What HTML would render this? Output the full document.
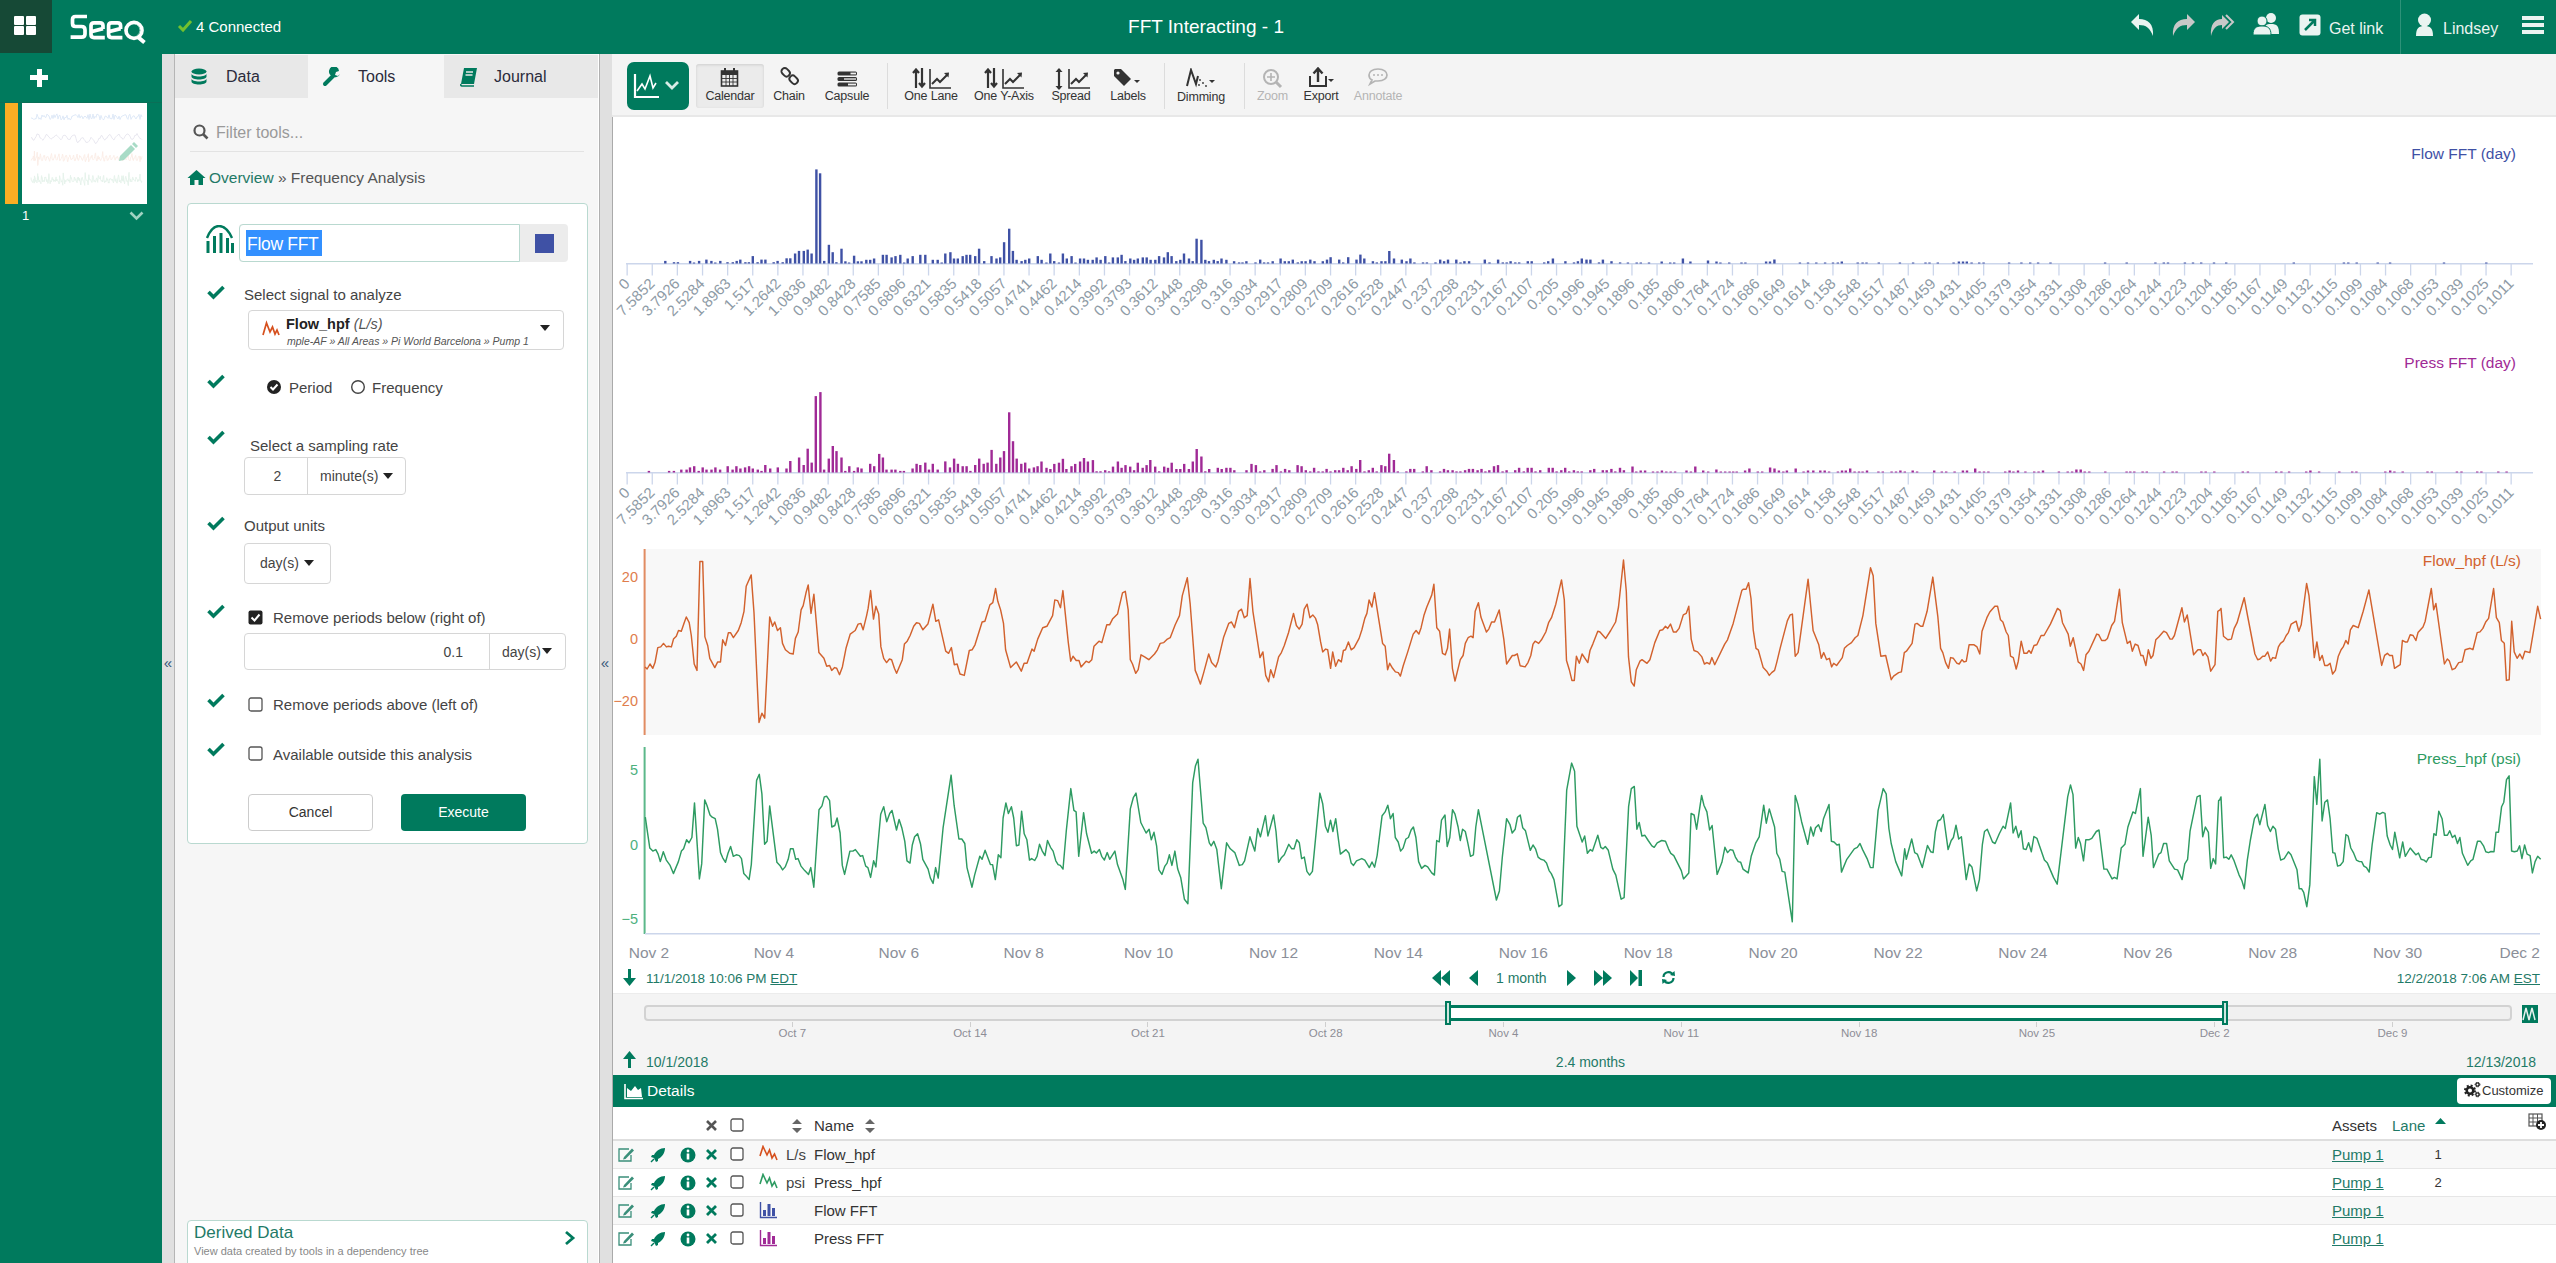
<!DOCTYPE html>
<html><head><meta charset="utf-8"><title>FFT Interacting - 1</title>
<style>
html,body{margin:0;padding:0;}
body{width:2556px;height:1263px;position:relative;overflow:hidden;background:#fff;font-family:"Liberation Sans", sans-serif;}
div{box-sizing:content-box;}
</style></head><body>
<div style="position:absolute;left:0px;top:53px;width:162px;height:1210px;background:#007a5d;"></div><div style="position:absolute;left:0px;top:102px;width:162px;height:1px;background:#0b6f57;"></div><div style="position:absolute;left:30px;top:75px;width:18px;height:5px;background:#fff;"></div><div style="position:absolute;left:36.5px;top:69px;width:5px;height:18px;background:#fff;"></div><div style="position:absolute;left:5px;top:103px;width:13px;height:101px;background:#f9ae24;"></div><div style="position:absolute;left:22px;top:103px;width:125px;height:101px;background:#fff;"></div><svg style="position:absolute;left:22px;top:103px;" width="125" height="101" viewBox="0 0 125 101"><polyline points="9.0,14.8 10.0,15.3 11.0,15.5 12.0,16.7 13.0,15.4 14.0,16.1 15.0,11.2 16.0,13.8 17.0,16.2 18.0,14.8 19.0,16.5 20.0,12.0 21.0,13.8 22.0,12.4 23.0,14.2 24.0,14.4 25.0,11.1 26.0,12.3 27.0,12.9 28.0,16.4 29.0,15.6 30.0,12.2 31.0,15.6 32.0,11.7 33.0,14.6 34.0,12.1 35.0,10.9 36.0,16.1 37.0,12.6 38.0,12.3 39.0,16.9 40.0,15.9 41.0,12.8 42.0,16.9 43.0,14.2 44.0,14.9 45.0,12.2 46.0,16.5 47.0,15.0 48.0,16.8 49.0,16.3 50.0,13.0 51.0,13.2 52.0,12.0 53.0,12.2 54.0,11.6 55.0,12.7 56.0,14.6 57.0,11.4 58.0,15.1 59.0,13.1 60.0,13.1 61.0,15.9 62.0,13.9 63.0,13.1 64.0,13.9 65.0,15.3 66.0,11.7 67.0,16.5 68.0,11.0 69.0,15.4 70.0,15.7 71.0,11.1 72.0,15.7 73.0,13.3 74.0,14.4 75.0,11.0 76.0,11.7 77.0,12.3 78.0,16.9 79.0,12.4 80.0,15.3 81.0,16.6 82.0,16.5 83.0,13.2 84.0,13.2 85.0,14.1 86.0,15.4 87.0,11.8 88.0,15.6 89.0,15.6 90.0,15.9 91.0,11.1 92.0,16.5 93.0,12.0 94.0,13.0 95.0,14.6 96.0,16.0 97.0,13.1 98.0,16.6 99.0,14.2 100.0,13.0 101.0,12.8 102.0,12.2 103.0,11.8 104.0,11.9 105.0,15.1 106.0,16.4 107.0,12.0 108.0,11.3 109.0,16.4 110.0,14.2 111.0,13.4 112.0,12.6 113.0,14.5 114.0,16.0 115.0,13.8 116.0,13.6 117.0,11.3 118.0,16.4 119.0,11.7 120.0,14.0" stroke="#dbe7f6" stroke-width="0.9" fill="none"/><polyline points="9.0,34.8 10.0,34.7 11.0,37.0 12.0,37.2 13.0,35.2 14.0,33.8 15.0,30.9 16.0,31.4 17.0,31.6 18.0,34.9 19.0,35.2 20.0,36.4 21.0,37.3 22.0,35.6 23.0,34.2 24.0,31.7 25.0,31.5 26.0,33.0 27.0,34.0 28.0,35.2 29.0,36.2 30.0,35.3 31.0,34.5 32.0,34.2 33.0,32.9 34.0,31.9 35.0,32.5 36.0,33.7 37.0,34.7 38.0,35.9 39.0,36.8 40.0,35.6 41.0,32.7 42.0,32.4 43.0,32.2 44.0,33.0 45.0,34.6 46.0,36.4 47.0,36.2 48.0,36.6 49.0,34.2 50.0,32.9 51.0,32.4 52.0,32.0 53.0,32.1 54.0,35.3 55.0,39.1 56.0,39.7 57.0,37.9 58.0,37.7 59.0,35.3 60.0,35.1 61.0,34.5 62.0,36.4 63.0,37.6 64.0,39.5 65.0,39.1 66.0,39.4 67.0,38.2 68.0,36.7 69.0,34.3 70.0,35.4 71.0,36.5 72.0,37.7 73.0,40.0 74.0,40.6 75.0,39.0 76.0,37.6 77.0,35.1 78.0,35.5 79.0,32.7 80.0,32.6 81.0,34.8 82.0,36.4 83.0,37.1 84.0,35.2 85.0,35.2 86.0,33.0 87.0,32.1 88.0,31.4 89.0,33.0 90.0,35.0 91.0,36.2 92.0,37.0 93.0,34.8 94.0,33.7 95.0,32.6 96.0,32.0 97.0,31.0 98.0,33.2 99.0,34.7 100.0,34.8 101.0,36.4 102.0,35.3 103.0,33.4 104.0,31.9 105.0,31.2 106.0,30.9 107.0,32.0 108.0,33.3 109.0,35.9 110.0,36.2 111.0,36.2 112.0,34.6 113.0,32.1 114.0,32.6 115.0,30.5 116.0,32.6 117.0,34.0 118.0,35.7 119.0,35.6 120.0,36.7" stroke="#e7e5ee" stroke-width="0.9" fill="none"/><polyline points="9.0,57.5 9.3,57.2 9.6,57.1 9.9,55.7 10.3,55.7 10.5,55.7 10.8,54.7 11.1,54.3 11.4,53.0 11.7,54.7 12.0,57.8 12.4,48.0 12.7,55.6 13.1,57.6 13.4,57.1 13.7,55.6 14.0,54.4 14.5,54.2 14.8,52.5 15.2,49.2 15.7,62.5 16.0,62.1 16.5,53.9 16.8,54.2 17.0,55.4 17.5,56.3 17.8,54.9 18.1,52.4 18.4,50.8 18.7,52.7 19.2,56.2 19.6,57.4 19.9,57.8 20.2,57.6 20.6,57.5 21.0,54.6 21.5,53.7 21.8,54.2 22.1,52.2 22.4,53.2 22.7,52.8 23.0,56.7 23.3,56.8 23.6,57.6 24.1,56.9 24.4,55.2 24.7,53.9 25.1,53.6 25.6,53.7 26.0,53.4 26.6,56.1 26.9,55.8 27.3,57.2 27.7,58.3 28.1,56.0 28.7,53.5 29.2,51.9 29.5,50.5 29.8,52.4 30.1,56.0 30.7,57.1 31.2,57.2 31.7,55.9 32.0,55.0 32.5,53.9 33.0,51.5 33.3,52.2 33.8,55.3 34.1,56.5 34.4,56.9 34.8,57.0 35.2,56.9 35.6,55.2 36.0,53.7 36.4,53.2 37.0,50.8 37.3,52.4 37.5,57.2 37.9,57.8 38.2,56.6 38.8,56.4 39.2,55.4 39.6,55.0 40.0,53.7 40.5,51.1 40.9,51.9 41.3,58.3 41.7,58.0 42.2,57.1 42.5,57.0 43.2,53.6 43.5,54.0 43.9,52.3 44.3,52.9 44.6,52.5 45.2,56.2 45.5,58.9 45.8,58.5 46.3,56.2 46.7,54.4 47.1,53.8 47.5,53.7 47.8,51.9 48.1,52.8 48.4,53.7 48.7,56.2 49.0,56.0 49.3,56.2 49.6,56.9 49.9,56.0 50.2,55.3 50.5,55.8 51.0,54.2 51.3,52.7 51.6,52.1 52.2,55.4 52.5,57.8 52.8,57.6 53.1,58.0 53.4,57.4 54.0,54.6 54.3,54.6 54.6,52.9 55.1,51.0 55.4,54.0 55.7,56.3 56.0,55.8 56.3,57.6 56.7,56.9 57.0,55.4 57.4,54.7 57.6,52.5 57.9,53.0 58.4,54.1 58.7,53.5 59.3,55.0 59.8,56.5 60.1,56.3 60.5,57.5 60.9,56.5 61.1,55.2 61.5,55.1 61.9,53.5 62.3,51.9 62.8,51.5 63.1,57.8 63.4,58.7 63.7,57.2 64.2,57.1 64.5,55.5 64.9,54.4 65.5,54.2 66.0,52.1 66.4,50.7 66.7,58.9 67.0,57.8 67.4,56.9 67.8,56.9 68.4,54.2 68.7,53.9 69.0,53.7 69.4,54.4 69.8,52.8 70.1,52.1 70.4,56.0 70.9,56.6 71.2,57.1 71.5,56.7 72.2,55.5 72.7,53.6 73.3,50.5 73.6,49.9 73.9,54.2 74.2,56.0 74.7,57.9 75.0,58.0 75.3,57.1 75.9,53.3 76.2,52.8 76.5,56.2 77.4,54.2 77.9,56.7 78.2,56.9 78.5,57.5 78.8,57.4 79.2,55.8 79.6,55.3 80.0,54.7 80.7,48.6 81.1,53.6 81.6,56.5 82.1,58.3 82.6,58.0 82.8,56.1 83.4,53.7 83.7,53.9 84.1,52.5 84.7,53.0 85.0,56.2 85.3,57.6 85.6,56.7 85.9,57.2 86.2,57.1 86.5,55.5 87.0,55.7 87.3,54.3 87.7,52.6 88.2,52.1 88.5,53.5 88.8,54.7 89.1,56.7 89.4,57.0 89.7,56.3 90.0,56.0 90.3,55.6 90.7,54.7 91.3,53.7 91.9,52.4 92.3,54.6 92.6,54.9 93.1,57.2 93.4,56.4 94.0,54.6 94.3,55.1 94.6,54.9 95.0,53.4 95.5,53.5 95.9,55.2 96.2,55.5 96.6,56.5 96.9,57.4 97.2,56.7 97.4,55.1 97.9,54.3 98.3,55.0 98.5,54.7 99.1,53.5 99.7,56.4 100.1,56.0 100.3,56.2 100.7,57.9 101.1,52.5 101.3,52.2 101.7,55.1 102.0,54.0 102.6,51.3 103.3,56.4 103.5,56.8 103.8,56.5 104.2,57.0 104.5,56.7 104.7,55.4 105.1,54.7 105.4,53.7 105.8,54.3 106.3,50.0 106.7,56.7 107.0,56.9 107.3,57.4 107.7,57.2 108.0,57.8 108.3,56.0 108.6,55.1 108.8,54.2 109.3,54.0 109.9,50.6 110.8,56.5 111.1,56.5 111.4,57.6 111.9,55.1 112.2,55.3 112.5,54.7 112.8,54.4 113.2,53.4 113.7,52.4 114.3,57.2 114.6,57.0 115.0,57.6 115.4,57.1 115.8,55.8 116.3,54.4 116.6,54.0 116.9,53.1 117.4,53.1 117.7,55.1 118.0,58.7 118.3,53.4 118.6,56.7 118.9,56.8 119.4,56.2 120.0,53.2" stroke="#fbece5" stroke-width="0.9" fill="none"/><polyline points="9.0,74.5 9.3,77.3 9.6,77.4 9.9,78.5 10.2,78.4 10.7,79.6 11.1,77.5 11.4,76.5 11.7,76.3 12.2,80.1 12.5,72.9 12.8,74.3 13.1,74.6 13.4,77.7 13.7,78.6 14.0,77.1 14.3,77.9 14.6,78.2 14.9,79.8 15.2,78.8 15.7,70.6 16.0,76.9 16.3,73.5 16.9,78.8 17.2,79.0 17.5,77.3 17.8,78.3 18.1,78.9 18.6,79.6 18.9,80.8 19.4,73.5 19.6,72.6 19.9,75.4 20.2,74.6 20.6,78.8 21.0,77.5 21.3,77.4 21.7,78.0 22.0,79.0 22.4,78.4 22.8,74.2 23.2,74.9 23.5,73.9 23.9,74.7 24.2,76.7 24.5,78.6 24.8,76.3 25.1,76.9 25.6,79.2 25.9,80.5 26.2,80.0 26.9,70.7 27.4,76.5 27.7,76.9 28.1,80.8 28.6,78.0 28.9,77.5 29.4,78.8 29.7,77.9 30.0,74.6 30.3,74.2 30.6,74.6 30.9,77.0 31.2,76.0 31.5,78.4 31.8,78.4 32.1,76.9 32.4,78.0 32.7,77.2 33.0,78.4 33.3,78.8 33.7,75.7 34.1,73.9 34.4,78.0 34.9,76.0 35.3,77.5 35.6,77.4 35.9,78.4 36.2,78.3 36.7,78.8 37.1,81.0 37.6,72.7 38.0,75.0 38.5,75.6 38.8,75.9 39.1,79.2 39.4,78.9 39.7,77.9 40.0,77.5 40.4,79.9 40.8,82.3 41.2,69.9 41.7,75.0 42.0,76.8 42.3,76.7 42.7,80.9 43.3,77.3 43.8,78.8 44.1,78.4 44.7,77.5 45.0,76.3 45.5,76.2 45.9,75.8 46.3,78.2 46.7,76.9 47.0,77.3 47.3,76.8 47.6,78.1 47.9,79.7 48.5,72.3 48.8,75.3 49.1,74.8 49.4,74.6 50.0,77.4 50.3,78.6 50.7,78.4 51.1,78.4 51.6,78.5 51.9,78.0 52.3,74.0 52.6,74.6 52.9,76.3 53.2,77.5 53.5,76.5 53.9,75.7 54.1,76.3 54.5,79.1 54.8,79.0 55.2,79.7 55.5,76.7 55.8,74.3 56.1,76.3 56.4,74.2 56.7,76.6 57.0,75.8 57.3,78.0 57.6,75.4 58.8,82.0 59.2,78.0 59.6,75.2 59.9,75.6 60.2,74.3 60.5,75.7 61.0,77.0 61.3,78.1 61.6,78.4 61.9,79.3 62.2,80.1 62.7,82.4 63.2,69.6 63.6,75.3 64.0,76.2 64.3,77.5 64.5,77.5 65.0,77.2 65.2,77.1 65.7,79.2 66.1,81.9 66.6,73.6 66.9,71.7 67.2,75.0 67.5,76.1 67.9,77.1 68.3,76.8 68.7,76.7 69.1,77.7 69.7,79.3 70.1,79.5 70.4,74.3 70.9,72.5 71.2,74.0 71.5,75.2 72.0,78.6 72.4,77.7 72.7,77.5 73.0,78.5 73.3,79.2 73.8,78.0 74.2,76.3 74.6,75.0 75.1,75.4 75.4,78.3 75.7,79.4 76.3,72.5 76.7,74.9 77.2,75.4 77.5,75.4 77.9,75.8 78.3,73.3 78.6,76.7 78.9,76.9 79.4,78.3 80.0,77.2 80.3,77.4 80.7,79.0 81.2,73.9 81.7,72.4 82.0,76.9 82.6,79.8 82.8,78.3 83.3,77.7 83.8,79.0 84.3,77.6 84.5,75.8 84.8,74.7 85.3,77.4 85.6,76.3 85.9,76.5 86.3,80.1 86.7,79.0 87.1,80.1 87.4,75.8 87.9,76.7 88.3,76.0 88.6,75.5 89.1,75.9 89.4,76.3 89.7,77.3 90.0,76.8 90.3,76.2 90.9,78.4 91.5,79.9 92.3,72.7 92.6,72.5 92.9,76.3 93.2,78.4 93.5,76.5 94.0,75.8 94.4,79.2 94.9,80.1 95.2,80.1 95.6,76.9 96.1,74.0 96.5,71.9 97.0,74.5 97.3,79.0 97.8,77.7 98.1,76.9 98.5,79.2 99.0,80.1 99.3,78.3 99.9,72.7 100.2,76.3 100.5,75.9 100.8,78.2 101.1,73.0 101.3,72.7 101.6,78.1 101.9,77.9 102.3,79.7 102.6,80.9 103.0,76.6 103.4,74.2 103.8,73.3 104.2,75.8 104.5,75.6 104.8,78.4 105.2,77.6 105.7,79.2 106.0,80.9 106.3,82.6 106.7,70.8 107.1,69.3 107.3,73.1 107.7,74.6 107.9,77.7 108.3,78.8 108.6,76.1 108.9,77.3 109.2,78.4 109.5,78.5 109.8,79.0 110.1,76.9 110.6,74.2 110.9,74.2 111.2,77.0 111.4,75.8 111.9,76.7 112.3,77.3 112.8,77.7 113.2,78.4 113.4,78.2 113.7,76.0 114.0,74.0 114.3,76.1 114.7,75.7 115.0,76.1 115.3,76.3 115.7,78.8 116.0,78.3 116.5,76.7 116.8,77.6 117.1,77.6 117.4,75.8 117.7,73.6 118.0,71.1 118.3,77.5 118.6,77.5 118.9,78.2 119.2,77.8 119.5,79.5 119.8,78.0" stroke="#e4f2ea" stroke-width="0.9" fill="none"/></svg><svg style="position:absolute;left:117px;top:141px;" width="22" height="22" viewBox="0 0 22 22"><path d="M3 15 L14 4 L18 8 L7 19 L2 20 Z" fill="#a8dbc6"/><path d="M15 3 L17 1 L21 5 L19 7 Z" fill="#a8dbc6"/></svg><div style="position:absolute;left:22px;top:208.0px;line-height:16px;font-size:13px;color:#fff;font-weight:normal;white-space:nowrap;">1</div><svg style="position:absolute;left:129px;top:211px;" width="15" height="10" viewBox="0 0 15 10"><path d="M1.5 1.5 L7.5 7.5 L13.5 1.5" stroke="#9fd3c2" stroke-width="2.6" fill="none"/></svg><div style="position:absolute;left:162px;top:54px;width:13px;height:1209px;background:#e0e0e0;border-right:1px solid #b5b5b5;box-sizing:border-box;"></div><div style="position:absolute;left:599px;top:54px;width:14px;height:1209px;background:#e0e0e0;border-left:1px solid #b0b0b0;border-right:1px solid #aaaaaa;box-sizing:border-box;"></div><div style="position:absolute;left:158.0px;width:20px;text-align:center;top:652.5px;line-height:19px;font-size:15px;color:#39587a;font-weight:normal;white-space:nowrap;">&laquo;</div><div style="position:absolute;left:595.0px;width:20px;text-align:center;top:652.5px;line-height:19px;font-size:15px;color:#39587a;font-weight:normal;white-space:nowrap;">&laquo;</div><div style="position:absolute;left:175px;top:54px;width:423px;height:1209px;background:#f6f6f6;"></div><div style="position:absolute;left:175px;top:55px;width:133px;height:43px;background:#e8e8e8;"></div><div style="position:absolute;left:444px;top:55px;width:154px;height:43px;background:#e8e8e8;"></div><svg style="position:absolute;left:190px;top:68px;" width="18" height="18" viewBox="0 0 18 18"><ellipse cx="9" cy="3.5" rx="7.5" ry="3" fill="#007a5d"/><path d="M1.5 5.5 C1.5 9.5 16.5 9.5 16.5 5.5 L16.5 8.5 C16.5 12.5 1.5 12.5 1.5 8.5 Z" fill="#007a5d"/><path d="M1.5 10.5 C1.5 14.5 16.5 14.5 16.5 10.5 L16.5 13.5 C16.5 17.5 1.5 17.5 1.5 13.5 Z" fill="#007a5d"/></svg><div style="position:absolute;left:226px;top:67.0px;line-height:20px;font-size:16px;color:#2b2b3b;font-weight:normal;white-space:nowrap;">Data</div><svg style="position:absolute;left:322px;top:67px;" width="20" height="20" viewBox="0 0 20 20"><path d="M3 17 L11 9" stroke="#007a5d" stroke-width="4" stroke-linecap="round"/><path d="M10 9 A5 5 0 1 1 17 4 L14 5 L13 8 L16 9 L18 7 A5 5 0 0 1 10 9 Z" fill="#007a5d"/></svg><div style="position:absolute;left:358px;top:67.0px;line-height:20px;font-size:16px;color:#2b2b3b;font-weight:normal;white-space:nowrap;">Tools</div><svg style="position:absolute;left:459px;top:67px;" width="20" height="20" viewBox="0 0 20 20"><path d="M5 1 L18 1 L15 17 L2 17 Z" fill="#007a5d"/><path d="M2 17 C1 19 3 19 4 19 L15 19" stroke="#007a5d" stroke-width="1.5" fill="none"/><path d="M7 5 L14 5 M6.5 8 L13.5 8" stroke="#e8e8e8" stroke-width="1.3"/></svg><div style="position:absolute;left:494px;top:67.0px;line-height:20px;font-size:16px;color:#2b2b3b;font-weight:normal;white-space:nowrap;">Journal</div><svg style="position:absolute;left:193px;top:124px;" width="16" height="16" viewBox="0 0 16 16"><circle cx="6.5" cy="6.5" r="5" stroke="#555" stroke-width="2.2" fill="none"/><path d="M10 10 L14.5 14.5" stroke="#555" stroke-width="2.6"/></svg><div style="position:absolute;left:216px;top:123.0px;line-height:20px;font-size:16px;color:#9a9a9a;font-weight:normal;white-space:nowrap;">Filter tools...</div><div style="position:absolute;left:190px;top:151px;width:394px;height:1px;background:#e3e3e3;"></div><svg style="position:absolute;left:187px;top:169px;" width="19" height="17" viewBox="0 0 19 17"><path d="M9.5 1 L18.5 9 L16 9 L16 16 L11.5 16 L11.5 11 L7.5 11 L7.5 16 L3 16 L3 9 L0.5 9 Z" fill="#007a5d"/></svg><div style="position:absolute;left:209px;top:168.0px;line-height:20px;font-size:15.5px;color:#555;font-weight:normal;white-space:nowrap;"><span style="color:#1f7a67">Overview</span> &raquo; Frequency Analysis</div><div style="position:absolute;left:187px;top:203px;width:401px;height:641px;background:#fff;border:1px solid #b9d9d0;border-radius:4px;box-sizing:border-box;"></div><svg style="position:absolute;left:205px;top:225px;" width="30" height="29" viewBox="0 0 30 29"><path d="M2 13 C6 3 10 1 14 1 C19 1 23 4 27 13" stroke="#007a5d" stroke-width="2.4" fill="none"/><rect x="1.5" y="16" width="3" height="12" fill="#007a5d"/><rect x="8" y="11" width="3" height="17" fill="#007a5d"/><rect x="14.5" y="8" width="3" height="20" fill="#007a5d"/><rect x="21" y="13" width="3" height="15" fill="#007a5d"/><rect x="26" y="18" width="3" height="10" fill="#007a5d"/></svg><div style="position:absolute;left:239px;top:224px;width:329px;height:38px;background:#ececec;border-radius:4px;"></div><div style="position:absolute;left:239px;top:224px;width:281px;height:38px;background:#fff;border:1px solid #b9d9d0;border-radius:4px 0 0 4px;box-sizing:border-box;"></div><div style="position:absolute;left:246px;top:230px;width:76px;height:26px;background:#3390ff;"></div><div style="position:absolute;left:247px;top:232.5px;line-height:22px;font-size:17.5px;color:#fff;font-weight:normal;white-space:nowrap;letter-spacing:-0.3px;">Flow FFT</div><div style="position:absolute;left:535px;top:234px;width:19px;height:19px;background:#3f51a5;"></div><svg style="position:absolute;left:207px;top:285px;" width="19" height="15" viewBox="0 0 19 15"><path d="M1.5 7 L6.5 12 L16.5 2" stroke="#007a5d" stroke-width="3.6" fill="none"/></svg><div style="position:absolute;left:244px;top:284.5px;line-height:19px;font-size:15px;color:#444;font-weight:normal;white-space:nowrap;">Select signal to analyze</div><div style="position:absolute;left:248px;top:310px;width:316px;height:40px;background:#fff;border:1px solid #d6d6d6;border-radius:4px;box-sizing:border-box;"></div><svg style="position:absolute;left:262px;top:320px;" width="19" height="18" viewBox="0 0 19 18"><path d="M1 15 L4.5 3 L8 12 L10.5 7 L13 14 L15 10 L17 15" stroke="#d6501e" stroke-width="1.7" fill="none"/></svg><div style="position:absolute;left:286px;top:315.0px;line-height:18px;font-size:14.5px;color:#222;font-weight:normal;white-space:nowrap;"><b style="color:#222">Flow_hpf</b> <i style="color:#555">(L/s)</i></div><div style="position:absolute;left:287px;top:334.5px;line-height:13px;font-size:10.5px;color:#555;font-weight:normal;white-space:nowrap;font-style:italic;">mple-AF &raquo; All Areas &raquo; Pi World Barcelona &raquo; Pump 1</div><svg style="position:absolute;left:540px;top:325px;" width="10" height="6" viewBox="0 0 10 6"><path d="M0 0 L10 0 L5 6 Z" fill="#222"/></svg><svg style="position:absolute;left:207px;top:374px;" width="19" height="15" viewBox="0 0 19 15"><path d="M1.5 7 L6.5 12 L16.5 2" stroke="#007a5d" stroke-width="3.6" fill="none"/></svg><svg style="position:absolute;left:266px;top:379px;" width="16" height="16" viewBox="0 0 16 16"><circle cx="8" cy="8" r="7" fill="#222"/><path d="M4.5 8 L7 10.5 L11.5 5.5" stroke="#fff" stroke-width="2" fill="none"/></svg><div style="position:absolute;left:289px;top:377.5px;line-height:19px;font-size:15px;color:#444;font-weight:normal;white-space:nowrap;">Period</div><svg style="position:absolute;left:350px;top:379px;" width="16" height="16" viewBox="0 0 16 16"><circle cx="8" cy="8" r="6.3" fill="#fff" stroke="#444" stroke-width="1.4"/></svg><div style="position:absolute;left:372px;top:377.5px;line-height:19px;font-size:15px;color:#444;font-weight:normal;white-space:nowrap;">Frequency</div><svg style="position:absolute;left:207px;top:430px;" width="19" height="15" viewBox="0 0 19 15"><path d="M1.5 7 L6.5 12 L16.5 2" stroke="#007a5d" stroke-width="3.6" fill="none"/></svg><div style="position:absolute;left:250px;top:435.5px;line-height:19px;font-size:15px;color:#444;font-weight:normal;white-space:nowrap;">Select a sampling rate</div><div style="position:absolute;left:244px;top:457px;width:162px;height:38px;background:#fff;border:1px solid #d6d6d6;border-radius:4px;box-sizing:border-box;"></div><div style="position:absolute;left:307px;top:457px;width:1px;height:38px;background:#d6d6d6;"></div><div style="position:absolute;left:257.5px;width:40px;text-align:center;top:467.0px;line-height:18px;font-size:14px;color:#444;font-weight:normal;white-space:nowrap;">2</div><div style="position:absolute;left:320px;top:467.0px;line-height:18px;font-size:14px;color:#444;font-weight:normal;white-space:nowrap;">minute(s)</div><svg style="position:absolute;left:383px;top:473px;" width="10" height="6" viewBox="0 0 10 6"><path d="M0 0 L10 0 L5 6 Z" fill="#222"/></svg><svg style="position:absolute;left:207px;top:516px;" width="19" height="15" viewBox="0 0 19 15"><path d="M1.5 7 L6.5 12 L16.5 2" stroke="#007a5d" stroke-width="3.6" fill="none"/></svg><div style="position:absolute;left:244px;top:515.5px;line-height:19px;font-size:15px;color:#444;font-weight:normal;white-space:nowrap;">Output units</div><div style="position:absolute;left:244px;top:543px;width:87px;height:41px;background:#fff;border:1px solid #d6d6d6;border-radius:4px;box-sizing:border-box;"></div><div style="position:absolute;left:260px;top:554.0px;line-height:18px;font-size:14px;color:#444;font-weight:normal;white-space:nowrap;">day(s)</div><svg style="position:absolute;left:304px;top:560px;" width="10" height="6" viewBox="0 0 10 6"><path d="M0 0 L10 0 L5 6 Z" fill="#222"/></svg><svg style="position:absolute;left:207px;top:604px;" width="19" height="15" viewBox="0 0 19 15"><path d="M1.5 7 L6.5 12 L16.5 2" stroke="#007a5d" stroke-width="3.6" fill="none"/></svg><svg style="position:absolute;left:248px;top:610px;" width="15" height="15" viewBox="0 0 15 15"><rect x="0.5" y="0.5" width="14" height="14" rx="2" fill="#222"/><path d="M3.5 7.5 L6.5 10.5 L11.5 4.5" stroke="#fff" stroke-width="2" fill="none"/></svg><div style="position:absolute;left:273px;top:607.5px;line-height:19px;font-size:15px;color:#444;font-weight:normal;white-space:nowrap;">Remove periods below (right of)</div><div style="position:absolute;left:244px;top:633px;width:322px;height:37px;background:#fff;border:1px solid #d6d6d6;border-radius:4px;box-sizing:border-box;"></div><div style="position:absolute;left:489px;top:633px;width:1px;height:37px;background:#d6d6d6;"></div><div style="position:absolute;right:2093px;text-align:right;top:642.5px;line-height:18px;font-size:14px;color:#444;font-weight:normal;white-space:nowrap;">0.1</div><div style="position:absolute;left:502px;top:642.5px;line-height:18px;font-size:14px;color:#444;font-weight:normal;white-space:nowrap;">day(s)</div><svg style="position:absolute;left:542px;top:648px;" width="10" height="6" viewBox="0 0 10 6"><path d="M0 0 L10 0 L5 6 Z" fill="#222"/></svg><svg style="position:absolute;left:207px;top:693px;" width="19" height="15" viewBox="0 0 19 15"><path d="M1.5 7 L6.5 12 L16.5 2" stroke="#007a5d" stroke-width="3.6" fill="none"/></svg><svg style="position:absolute;left:248px;top:697px;" width="15" height="15" viewBox="0 0 15 15"><rect x="1" y="1" width="13" height="13" rx="2" fill="#fff" stroke="#555" stroke-width="1.3"/></svg><div style="position:absolute;left:273px;top:694.5px;line-height:19px;font-size:15px;color:#444;font-weight:normal;white-space:nowrap;">Remove periods above (left of)</div><svg style="position:absolute;left:207px;top:742px;" width="19" height="15" viewBox="0 0 19 15"><path d="M1.5 7 L6.5 12 L16.5 2" stroke="#007a5d" stroke-width="3.6" fill="none"/></svg><svg style="position:absolute;left:248px;top:746px;" width="15" height="15" viewBox="0 0 15 15"><rect x="1" y="1" width="13" height="13" rx="2" fill="#fff" stroke="#555" stroke-width="1.3"/></svg><div style="position:absolute;left:273px;top:744.5px;line-height:19px;font-size:15px;color:#444;font-weight:normal;white-space:nowrap;">Available outside this analysis</div><div style="position:absolute;left:248px;top:794px;width:125px;height:37px;background:#fff;border:1px solid #ccc;border-radius:4px;box-sizing:border-box;"></div><div style="position:absolute;left:250.5px;width:120px;text-align:center;top:803.0px;line-height:18px;font-size:14px;color:#333;font-weight:normal;white-space:nowrap;">Cancel</div><div style="position:absolute;left:401px;top:794px;width:125px;height:37px;background:#007a5d;border-radius:4px;"></div><div style="position:absolute;left:403.5px;width:120px;text-align:center;top:803.0px;line-height:18px;font-size:14px;color:#fff;font-weight:normal;white-space:nowrap;">Execute</div><div style="position:absolute;left:187px;top:1220px;width:401px;height:50px;background:#fff;border:1px solid #b9d9d0;border-radius:4px;box-sizing:border-box;"></div><div style="position:absolute;left:194px;top:1222.0px;line-height:22px;font-size:17px;color:#1f7a67;font-weight:normal;white-space:nowrap;">Derived Data</div><div style="position:absolute;left:194px;top:1244.0px;line-height:14px;font-size:11px;color:#888;font-weight:normal;white-space:nowrap;">View data created by tools in a dependency tree</div><svg style="position:absolute;left:564px;top:1230px;" width="12" height="16" viewBox="0 0 12 16"><path d="M2 2 L9 8 L2 14" stroke="#007a5d" stroke-width="2.8" fill="none"/></svg><div style="position:absolute;left:612px;top:117px;width:1944px;height:876px;background:#fff;"></div><div style="position:absolute;left:612px;top:117px;width:1.3px;height:1146px;background:#aaaaaa;"></div><svg style="position:absolute;left:0;top:0" width="2556" height="1263"><rect x="626" y="263.0" width="1907" height="1.5" fill="#ccd6eb"/><rect x="626.5" y="263.5" width="1.3" height="12" fill="#ccd6eb"/><rect x="651.6" y="263.5" width="1.3" height="12" fill="#ccd6eb"/><rect x="676.7" y="263.5" width="1.3" height="12" fill="#ccd6eb"/><rect x="701.9" y="263.5" width="1.3" height="12" fill="#ccd6eb"/><rect x="727.0" y="263.5" width="1.3" height="12" fill="#ccd6eb"/><rect x="752.1" y="263.5" width="1.3" height="12" fill="#ccd6eb"/><rect x="777.2" y="263.5" width="1.3" height="12" fill="#ccd6eb"/><rect x="802.3" y="263.5" width="1.3" height="12" fill="#ccd6eb"/><rect x="827.5" y="263.5" width="1.3" height="12" fill="#ccd6eb"/><rect x="852.6" y="263.5" width="1.3" height="12" fill="#ccd6eb"/><rect x="877.7" y="263.5" width="1.3" height="12" fill="#ccd6eb"/><rect x="902.8" y="263.5" width="1.3" height="12" fill="#ccd6eb"/><rect x="927.9" y="263.5" width="1.3" height="12" fill="#ccd6eb"/><rect x="953.1" y="263.5" width="1.3" height="12" fill="#ccd6eb"/><rect x="978.2" y="263.5" width="1.3" height="12" fill="#ccd6eb"/><rect x="1003.3" y="263.5" width="1.3" height="12" fill="#ccd6eb"/><rect x="1028.4" y="263.5" width="1.3" height="12" fill="#ccd6eb"/><rect x="1053.5" y="263.5" width="1.3" height="12" fill="#ccd6eb"/><rect x="1078.7" y="263.5" width="1.3" height="12" fill="#ccd6eb"/><rect x="1103.8" y="263.5" width="1.3" height="12" fill="#ccd6eb"/><rect x="1128.9" y="263.5" width="1.3" height="12" fill="#ccd6eb"/><rect x="1154.0" y="263.5" width="1.3" height="12" fill="#ccd6eb"/><rect x="1179.1" y="263.5" width="1.3" height="12" fill="#ccd6eb"/><rect x="1204.3" y="263.5" width="1.3" height="12" fill="#ccd6eb"/><rect x="1229.4" y="263.5" width="1.3" height="12" fill="#ccd6eb"/><rect x="1254.5" y="263.5" width="1.3" height="12" fill="#ccd6eb"/><rect x="1279.6" y="263.5" width="1.3" height="12" fill="#ccd6eb"/><rect x="1304.7" y="263.5" width="1.3" height="12" fill="#ccd6eb"/><rect x="1329.9" y="263.5" width="1.3" height="12" fill="#ccd6eb"/><rect x="1355.0" y="263.5" width="1.3" height="12" fill="#ccd6eb"/><rect x="1380.1" y="263.5" width="1.3" height="12" fill="#ccd6eb"/><rect x="1405.2" y="263.5" width="1.3" height="12" fill="#ccd6eb"/><rect x="1430.3" y="263.5" width="1.3" height="12" fill="#ccd6eb"/><rect x="1455.5" y="263.5" width="1.3" height="12" fill="#ccd6eb"/><rect x="1480.6" y="263.5" width="1.3" height="12" fill="#ccd6eb"/><rect x="1505.7" y="263.5" width="1.3" height="12" fill="#ccd6eb"/><rect x="1530.8" y="263.5" width="1.3" height="12" fill="#ccd6eb"/><rect x="1555.9" y="263.5" width="1.3" height="12" fill="#ccd6eb"/><rect x="1581.1" y="263.5" width="1.3" height="12" fill="#ccd6eb"/><rect x="1606.2" y="263.5" width="1.3" height="12" fill="#ccd6eb"/><rect x="1631.3" y="263.5" width="1.3" height="12" fill="#ccd6eb"/><rect x="1656.4" y="263.5" width="1.3" height="12" fill="#ccd6eb"/><rect x="1681.5" y="263.5" width="1.3" height="12" fill="#ccd6eb"/><rect x="1706.7" y="263.5" width="1.3" height="12" fill="#ccd6eb"/><rect x="1731.8" y="263.5" width="1.3" height="12" fill="#ccd6eb"/><rect x="1756.9" y="263.5" width="1.3" height="12" fill="#ccd6eb"/><rect x="1782.0" y="263.5" width="1.3" height="12" fill="#ccd6eb"/><rect x="1807.1" y="263.5" width="1.3" height="12" fill="#ccd6eb"/><rect x="1832.3" y="263.5" width="1.3" height="12" fill="#ccd6eb"/><rect x="1857.4" y="263.5" width="1.3" height="12" fill="#ccd6eb"/><rect x="1882.5" y="263.5" width="1.3" height="12" fill="#ccd6eb"/><rect x="1907.6" y="263.5" width="1.3" height="12" fill="#ccd6eb"/><rect x="1932.7" y="263.5" width="1.3" height="12" fill="#ccd6eb"/><rect x="1957.9" y="263.5" width="1.3" height="12" fill="#ccd6eb"/><rect x="1983.0" y="263.5" width="1.3" height="12" fill="#ccd6eb"/><rect x="2008.1" y="263.5" width="1.3" height="12" fill="#ccd6eb"/><rect x="2033.2" y="263.5" width="1.3" height="12" fill="#ccd6eb"/><rect x="2058.3" y="263.5" width="1.3" height="12" fill="#ccd6eb"/><rect x="2083.5" y="263.5" width="1.3" height="12" fill="#ccd6eb"/><rect x="2108.6" y="263.5" width="1.3" height="12" fill="#ccd6eb"/><rect x="2133.7" y="263.5" width="1.3" height="12" fill="#ccd6eb"/><rect x="2158.8" y="263.5" width="1.3" height="12" fill="#ccd6eb"/><rect x="2183.9" y="263.5" width="1.3" height="12" fill="#ccd6eb"/><rect x="2209.1" y="263.5" width="1.3" height="12" fill="#ccd6eb"/><rect x="2234.2" y="263.5" width="1.3" height="12" fill="#ccd6eb"/><rect x="2259.3" y="263.5" width="1.3" height="12" fill="#ccd6eb"/><rect x="2284.4" y="263.5" width="1.3" height="12" fill="#ccd6eb"/><rect x="2309.5" y="263.5" width="1.3" height="12" fill="#ccd6eb"/><rect x="2334.7" y="263.5" width="1.3" height="12" fill="#ccd6eb"/><rect x="2359.8" y="263.5" width="1.3" height="12" fill="#ccd6eb"/><rect x="2384.9" y="263.5" width="1.3" height="12" fill="#ccd6eb"/><rect x="2410.0" y="263.5" width="1.3" height="12" fill="#ccd6eb"/><rect x="2435.1" y="263.5" width="1.3" height="12" fill="#ccd6eb"/><rect x="2460.3" y="263.5" width="1.3" height="12" fill="#ccd6eb"/><rect x="2485.4" y="263.5" width="1.3" height="12" fill="#ccd6eb"/><rect x="2510.5" y="263.5" width="1.3" height="12" fill="#ccd6eb"/><rect x="664.1" y="260.9" width="2.4" height="2.6" fill="#3f51a5"/><rect x="672.8" y="262.2" width="2.4" height="1.3" fill="#3f51a5"/><rect x="676.7" y="262.2" width="2.4" height="1.3" fill="#3f51a5"/><rect x="688.9" y="260.9" width="2.4" height="2.6" fill="#3f51a5"/><rect x="692.8" y="262.5" width="2.4" height="1.0" fill="#3f51a5"/><rect x="697.9" y="260.9" width="2.4" height="2.6" fill="#3f51a5"/><rect x="705.2" y="259.6" width="2.4" height="3.9" fill="#3f51a5"/><rect x="710.2" y="260.9" width="2.4" height="2.6" fill="#3f51a5"/><rect x="714.1" y="262.5" width="2.4" height="1.0" fill="#3f51a5"/><rect x="719.1" y="260.9" width="2.4" height="2.6" fill="#3f51a5"/><rect x="726.3" y="262.2" width="2.4" height="1.3" fill="#3f51a5"/><rect x="731.6" y="262.2" width="2.4" height="1.3" fill="#3f51a5"/><rect x="735.5" y="260.9" width="2.4" height="2.6" fill="#3f51a5"/><rect x="739.1" y="259.6" width="2.4" height="3.9" fill="#3f51a5"/><rect x="744.2" y="262.2" width="2.4" height="1.3" fill="#3f51a5"/><rect x="747.7" y="262.2" width="2.4" height="1.3" fill="#3f51a5"/><rect x="751.6" y="256.1" width="2.4" height="7.4" fill="#3f51a5"/><rect x="756.4" y="262.2" width="2.4" height="1.3" fill="#3f51a5"/><rect x="760.3" y="259.6" width="2.4" height="3.9" fill="#3f51a5"/><rect x="764.2" y="259.6" width="2.4" height="3.9" fill="#3f51a5"/><rect x="772.5" y="262.2" width="2.4" height="1.3" fill="#3f51a5"/><rect x="776.4" y="260.9" width="2.4" height="2.6" fill="#3f51a5"/><rect x="781.5" y="262.2" width="2.4" height="1.3" fill="#3f51a5"/><rect x="785.4" y="258.3" width="2.4" height="5.2" fill="#3f51a5"/><rect x="789.1" y="258.3" width="2.4" height="5.2" fill="#3f51a5"/><rect x="793.9" y="253.5" width="2.4" height="10.0" fill="#3f51a5"/><rect x="797.8" y="250.9" width="2.4" height="12.6" fill="#3f51a5"/><rect x="802.6" y="250.9" width="2.4" height="12.6" fill="#3f51a5"/><rect x="806.5" y="249.6" width="2.4" height="13.9" fill="#3f51a5"/><rect x="810.4" y="253.5" width="2.4" height="10.0" fill="#3f51a5"/><rect x="815.2" y="169.4" width="2.4" height="94.1" fill="#3f51a5"/><rect x="818.9" y="173.3" width="2.4" height="90.2" fill="#3f51a5"/><rect x="823.0" y="260.9" width="2.4" height="2.6" fill="#3f51a5"/><rect x="827.7" y="244.8" width="2.4" height="18.7" fill="#3f51a5"/><rect x="831.5" y="252.2" width="2.4" height="11.3" fill="#3f51a5"/><rect x="835.2" y="262.2" width="2.4" height="1.3" fill="#3f51a5"/><rect x="840.3" y="248.7" width="2.4" height="14.8" fill="#3f51a5"/><rect x="844.2" y="261.3" width="2.4" height="2.2" fill="#3f51a5"/><rect x="847.9" y="262.5" width="2.4" height="1.0" fill="#3f51a5"/><rect x="852.9" y="255.7" width="2.4" height="7.8" fill="#3f51a5"/><rect x="856.7" y="261.3" width="2.4" height="2.2" fill="#3f51a5"/><rect x="860.3" y="261.3" width="2.4" height="2.2" fill="#3f51a5"/><rect x="865.1" y="259.8" width="2.4" height="3.7" fill="#3f51a5"/><rect x="869.0" y="259.8" width="2.4" height="3.7" fill="#3f51a5"/><rect x="872.9" y="258.5" width="2.4" height="5.0" fill="#3f51a5"/><rect x="881.7" y="254.8" width="2.4" height="8.7" fill="#3f51a5"/><rect x="885.4" y="254.8" width="2.4" height="8.7" fill="#3f51a5"/><rect x="890.4" y="257.4" width="2.4" height="6.1" fill="#3f51a5"/><rect x="894.3" y="256.1" width="2.4" height="7.4" fill="#3f51a5"/><rect x="899.1" y="254.8" width="2.4" height="8.7" fill="#3f51a5"/><rect x="903.0" y="262.5" width="2.4" height="1.0" fill="#3f51a5"/><rect x="906.5" y="258.5" width="2.4" height="5.0" fill="#3f51a5"/><rect x="911.5" y="256.1" width="2.4" height="7.4" fill="#3f51a5"/><rect x="919.1" y="254.8" width="2.4" height="8.7" fill="#3f51a5"/><rect x="924.1" y="254.8" width="2.4" height="8.7" fill="#3f51a5"/><rect x="931.6" y="259.8" width="2.4" height="3.7" fill="#3f51a5"/><rect x="936.5" y="259.8" width="2.4" height="3.7" fill="#3f51a5"/><rect x="940.5" y="262.5" width="2.4" height="1.0" fill="#3f51a5"/><rect x="944.1" y="253.5" width="2.4" height="10.0" fill="#3f51a5"/><rect x="949.2" y="252.2" width="2.4" height="11.3" fill="#3f51a5"/><rect x="952.8" y="258.5" width="2.4" height="5.0" fill="#3f51a5"/><rect x="956.6" y="258.5" width="2.4" height="5.0" fill="#3f51a5"/><rect x="961.5" y="256.1" width="2.4" height="7.4" fill="#3f51a5"/><rect x="965.3" y="254.8" width="2.4" height="8.7" fill="#3f51a5"/><rect x="969.0" y="254.8" width="2.4" height="8.7" fill="#3f51a5"/><rect x="974.0" y="256.1" width="2.4" height="7.4" fill="#3f51a5"/><rect x="977.9" y="248.7" width="2.4" height="14.8" fill="#3f51a5"/><rect x="983.0" y="261.1" width="2.4" height="2.4" fill="#3f51a5"/><rect x="990.3" y="256.1" width="2.4" height="7.4" fill="#3f51a5"/><rect x="995.3" y="258.5" width="2.4" height="5.0" fill="#3f51a5"/><rect x="999.0" y="257.4" width="2.4" height="6.1" fill="#3f51a5"/><rect x="1002.9" y="242.2" width="2.4" height="21.3" fill="#3f51a5"/><rect x="1008.0" y="228.7" width="2.4" height="34.8" fill="#3f51a5"/><rect x="1011.7" y="250.9" width="2.4" height="12.6" fill="#3f51a5"/><rect x="1015.4" y="259.8" width="2.4" height="3.7" fill="#3f51a5"/><rect x="1020.4" y="261.1" width="2.4" height="2.4" fill="#3f51a5"/><rect x="1024.1" y="259.8" width="2.4" height="3.7" fill="#3f51a5"/><rect x="1028.0" y="258.5" width="2.4" height="5.0" fill="#3f51a5"/><rect x="1036.6" y="256.1" width="2.4" height="7.4" fill="#3f51a5"/><rect x="1040.4" y="259.8" width="2.4" height="3.7" fill="#3f51a5"/><rect x="1045.2" y="262.5" width="2.4" height="1.0" fill="#3f51a5"/><rect x="1049.1" y="253.5" width="2.4" height="10.0" fill="#3f51a5"/><rect x="1053.0" y="261.1" width="2.4" height="2.4" fill="#3f51a5"/><rect x="1057.8" y="262.5" width="2.4" height="1.0" fill="#3f51a5"/><rect x="1061.7" y="253.5" width="2.4" height="10.0" fill="#3f51a5"/><rect x="1065.6" y="258.5" width="2.4" height="5.0" fill="#3f51a5"/><rect x="1070.4" y="256.1" width="2.4" height="7.4" fill="#3f51a5"/><rect x="1074.3" y="262.5" width="2.4" height="1.0" fill="#3f51a5"/><rect x="1078.9" y="258.5" width="2.4" height="5.0" fill="#3f51a5"/><rect x="1082.8" y="258.5" width="2.4" height="5.0" fill="#3f51a5"/><rect x="1086.7" y="259.8" width="2.4" height="3.7" fill="#3f51a5"/><rect x="1091.5" y="259.8" width="2.4" height="3.7" fill="#3f51a5"/><rect x="1095.4" y="257.4" width="2.4" height="6.1" fill="#3f51a5"/><rect x="1099.4" y="259.8" width="2.4" height="3.7" fill="#3f51a5"/><rect x="1104.1" y="256.1" width="2.4" height="7.4" fill="#3f51a5"/><rect x="1107.9" y="262.5" width="2.4" height="1.0" fill="#3f51a5"/><rect x="1111.7" y="257.4" width="2.4" height="6.1" fill="#3f51a5"/><rect x="1116.6" y="257.4" width="2.4" height="6.1" fill="#3f51a5"/><rect x="1120.4" y="254.8" width="2.4" height="8.7" fill="#3f51a5"/><rect x="1124.2" y="261.1" width="2.4" height="2.4" fill="#3f51a5"/><rect x="1129.1" y="258.5" width="2.4" height="5.0" fill="#3f51a5"/><rect x="1132.9" y="259.8" width="2.4" height="3.7" fill="#3f51a5"/><rect x="1136.6" y="258.5" width="2.4" height="5.0" fill="#3f51a5"/><rect x="1141.6" y="257.4" width="2.4" height="6.1" fill="#3f51a5"/><rect x="1145.5" y="257.4" width="2.4" height="6.1" fill="#3f51a5"/><rect x="1149.4" y="259.8" width="2.4" height="3.7" fill="#3f51a5"/><rect x="1154.1" y="259.8" width="2.4" height="3.7" fill="#3f51a5"/><rect x="1157.9" y="256.1" width="2.4" height="7.4" fill="#3f51a5"/><rect x="1162.8" y="257.4" width="2.4" height="6.1" fill="#3f51a5"/><rect x="1166.6" y="252.2" width="2.4" height="11.3" fill="#3f51a5"/><rect x="1170.4" y="256.1" width="2.4" height="7.4" fill="#3f51a5"/><rect x="1175.1" y="261.1" width="2.4" height="2.4" fill="#3f51a5"/><rect x="1179.1" y="259.8" width="2.4" height="3.7" fill="#3f51a5"/><rect x="1182.8" y="253.5" width="2.4" height="10.0" fill="#3f51a5"/><rect x="1187.8" y="258.5" width="2.4" height="5.0" fill="#3f51a5"/><rect x="1191.5" y="261.1" width="2.4" height="2.4" fill="#3f51a5"/><rect x="1195.4" y="238.7" width="2.4" height="24.8" fill="#3f51a5"/><rect x="1200.2" y="239.8" width="2.4" height="23.7" fill="#3f51a5"/><rect x="1204.1" y="259.8" width="2.4" height="3.7" fill="#3f51a5"/><rect x="1207.8" y="261.1" width="2.4" height="2.4" fill="#3f51a5"/><rect x="1212.6" y="259.8" width="2.4" height="3.7" fill="#3f51a5"/><rect x="1216.5" y="261.1" width="2.4" height="2.4" fill="#3f51a5"/><rect x="1220.3" y="258.5" width="2.4" height="5.0" fill="#3f51a5"/><rect x="1225.2" y="259.8" width="2.4" height="3.7" fill="#3f51a5"/><rect x="1232.9" y="261.2" width="2.4" height="2.3" fill="#3f51a5"/><rect x="1237.9" y="262.4" width="2.4" height="1.1" fill="#3f51a5"/><rect x="1241.3" y="262.4" width="2.4" height="1.1" fill="#3f51a5"/><rect x="1245.2" y="261.2" width="2.4" height="2.3" fill="#3f51a5"/><rect x="1254.3" y="262.4" width="2.4" height="1.1" fill="#3f51a5"/><rect x="1259.0" y="259.6" width="2.4" height="3.9" fill="#3f51a5"/><rect x="1262.9" y="262.4" width="2.4" height="1.1" fill="#3f51a5"/><rect x="1266.8" y="262.4" width="2.4" height="1.1" fill="#3f51a5"/><rect x="1271.5" y="261.2" width="2.4" height="2.3" fill="#3f51a5"/><rect x="1279.4" y="258.5" width="2.4" height="5.0" fill="#3f51a5"/><rect x="1283.6" y="261.2" width="2.4" height="2.3" fill="#3f51a5"/><rect x="1287.6" y="261.2" width="2.4" height="2.3" fill="#3f51a5"/><rect x="1291.6" y="259.6" width="2.4" height="3.9" fill="#3f51a5"/><rect x="1296.6" y="262.4" width="2.4" height="1.1" fill="#3f51a5"/><rect x="1300.5" y="261.2" width="2.4" height="2.3" fill="#3f51a5"/><rect x="1304.4" y="261.2" width="2.4" height="2.3" fill="#3f51a5"/><rect x="1309.1" y="259.6" width="2.4" height="3.9" fill="#3f51a5"/><rect x="1313.3" y="261.2" width="2.4" height="2.3" fill="#3f51a5"/><rect x="1321.6" y="261.2" width="2.4" height="2.3" fill="#3f51a5"/><rect x="1325.8" y="259.6" width="2.4" height="3.9" fill="#3f51a5"/><rect x="1329.4" y="257.2" width="2.4" height="6.3" fill="#3f51a5"/><rect x="1338.0" y="259.6" width="2.4" height="3.9" fill="#3f51a5"/><rect x="1342.0" y="262.4" width="2.4" height="1.1" fill="#3f51a5"/><rect x="1347.0" y="257.2" width="2.4" height="6.3" fill="#3f51a5"/><rect x="1355.3" y="259.6" width="2.4" height="3.9" fill="#3f51a5"/><rect x="1359.2" y="254.6" width="2.4" height="8.9" fill="#3f51a5"/><rect x="1363.1" y="258.5" width="2.4" height="5.0" fill="#3f51a5"/><rect x="1371.7" y="261.2" width="2.4" height="2.3" fill="#3f51a5"/><rect x="1375.6" y="262.4" width="2.4" height="1.1" fill="#3f51a5"/><rect x="1380.3" y="261.2" width="2.4" height="2.3" fill="#3f51a5"/><rect x="1384.2" y="261.2" width="2.4" height="2.3" fill="#3f51a5"/><rect x="1388.1" y="251.0" width="2.4" height="12.5" fill="#3f51a5"/><rect x="1392.8" y="258.5" width="2.4" height="5.0" fill="#3f51a5"/><rect x="1400.6" y="259.6" width="2.4" height="3.9" fill="#3f51a5"/><rect x="1405.3" y="261.2" width="2.4" height="2.3" fill="#3f51a5"/><rect x="1409.2" y="258.5" width="2.4" height="5.0" fill="#3f51a5"/><rect x="1413.2" y="262.4" width="2.4" height="1.1" fill="#3f51a5"/><rect x="1421.8" y="262.4" width="2.4" height="1.1" fill="#3f51a5"/><rect x="1425.7" y="262.4" width="2.4" height="1.1" fill="#3f51a5"/><rect x="1434.3" y="262.4" width="2.4" height="1.1" fill="#3f51a5"/><rect x="1439.0" y="259.6" width="2.4" height="3.9" fill="#3f51a5"/><rect x="1442.9" y="261.2" width="2.4" height="2.3" fill="#3f51a5"/><rect x="1446.8" y="259.6" width="2.4" height="3.9" fill="#3f51a5"/><rect x="1455.1" y="259.6" width="2.4" height="3.9" fill="#3f51a5"/><rect x="1459.3" y="262.4" width="2.4" height="1.1" fill="#3f51a5"/><rect x="1463.2" y="261.2" width="2.4" height="2.3" fill="#3f51a5"/><rect x="1467.9" y="261.2" width="2.4" height="2.3" fill="#3f51a5"/><rect x="1483.6" y="259.6" width="2.4" height="3.9" fill="#3f51a5"/><rect x="1488.3" y="262.4" width="2.4" height="1.1" fill="#3f51a5"/><rect x="1496.9" y="259.6" width="2.4" height="3.9" fill="#3f51a5"/><rect x="1501.6" y="262.4" width="2.4" height="1.1" fill="#3f51a5"/><rect x="1505.5" y="262.4" width="2.4" height="1.1" fill="#3f51a5"/><rect x="1509.4" y="261.2" width="2.4" height="2.3" fill="#3f51a5"/><rect x="1514.1" y="262.4" width="2.4" height="1.1" fill="#3f51a5"/><rect x="1518.0" y="262.4" width="2.4" height="1.1" fill="#3f51a5"/><rect x="1526.6" y="261.2" width="2.4" height="2.3" fill="#3f51a5"/><rect x="1530.5" y="261.2" width="2.4" height="2.3" fill="#3f51a5"/><rect x="1543.0" y="262.4" width="2.4" height="1.1" fill="#3f51a5"/><rect x="1547.0" y="261.2" width="2.4" height="2.3" fill="#3f51a5"/><rect x="1551.7" y="258.5" width="2.4" height="5.0" fill="#3f51a5"/><rect x="1564.2" y="261.2" width="2.4" height="2.3" fill="#3f51a5"/><rect x="1572.8" y="262.4" width="2.4" height="1.1" fill="#3f51a5"/><rect x="1576.7" y="261.2" width="2.4" height="2.3" fill="#3f51a5"/><rect x="1580.6" y="258.5" width="2.4" height="5.0" fill="#3f51a5"/><rect x="1585.3" y="259.6" width="2.4" height="3.9" fill="#3f51a5"/><rect x="1589.2" y="259.6" width="2.4" height="3.9" fill="#3f51a5"/><rect x="1597.8" y="262.4" width="2.4" height="1.1" fill="#3f51a5"/><rect x="1601.7" y="259.6" width="2.4" height="3.9" fill="#3f51a5"/><rect x="1610.3" y="261.2" width="2.4" height="2.3" fill="#3f51a5"/><rect x="1618.9" y="262.4" width="2.4" height="1.1" fill="#3f51a5"/><rect x="1626.7" y="262.5" width="2.4" height="1.0" fill="#3f51a5"/><rect x="1635.5" y="262.5" width="2.4" height="1.0" fill="#3f51a5"/><rect x="1639.6" y="262.5" width="2.4" height="1.0" fill="#3f51a5"/><rect x="1647.8" y="262.5" width="2.4" height="1.0" fill="#3f51a5"/><rect x="1660.5" y="261.5" width="2.4" height="2.0" fill="#3f51a5"/><rect x="1669.0" y="262.5" width="2.4" height="1.0" fill="#3f51a5"/><rect x="1673.0" y="262.5" width="2.4" height="1.0" fill="#3f51a5"/><rect x="1681.7" y="258.5" width="2.4" height="5.0" fill="#3f51a5"/><rect x="1689.2" y="261.5" width="2.4" height="2.0" fill="#3f51a5"/><rect x="1706.8" y="260.5" width="2.4" height="3.0" fill="#3f51a5"/><rect x="1715.3" y="261.5" width="2.4" height="2.0" fill="#3f51a5"/><rect x="1719.2" y="262.5" width="2.4" height="1.0" fill="#3f51a5"/><rect x="1728.0" y="262.5" width="2.4" height="1.0" fill="#3f51a5"/><rect x="1740.3" y="262.5" width="2.4" height="1.0" fill="#3f51a5"/><rect x="1744.2" y="262.5" width="2.4" height="1.0" fill="#3f51a5"/><rect x="1764.9" y="261.5" width="2.4" height="2.0" fill="#3f51a5"/><rect x="1768.8" y="261.5" width="2.4" height="2.0" fill="#3f51a5"/><rect x="1773.2" y="259.5" width="2.4" height="4.0" fill="#3f51a5"/><rect x="1798.7" y="262.5" width="2.4" height="1.0" fill="#3f51a5"/><rect x="1806.8" y="262.5" width="2.4" height="1.0" fill="#3f51a5"/><rect x="1815.1" y="262.5" width="2.4" height="1.0" fill="#3f51a5"/><rect x="1823.9" y="262.5" width="2.4" height="1.0" fill="#3f51a5"/><rect x="1831.8" y="262.5" width="2.4" height="1.0" fill="#3f51a5"/><rect x="1836.6" y="262.5" width="2.4" height="1.0" fill="#3f51a5"/><rect x="1840.6" y="261.5" width="2.4" height="2.0" fill="#3f51a5"/><rect x="1856.5" y="262.5" width="2.4" height="1.0" fill="#3f51a5"/><rect x="1861.4" y="262.5" width="2.4" height="1.0" fill="#3f51a5"/><rect x="1865.3" y="262.5" width="2.4" height="1.0" fill="#3f51a5"/><rect x="1877.6" y="262.5" width="2.4" height="1.0" fill="#3f51a5"/><rect x="1898.7" y="262.5" width="2.4" height="1.0" fill="#3f51a5"/><rect x="1911.9" y="262.5" width="2.4" height="1.0" fill="#3f51a5"/><rect x="1924.3" y="262.5" width="2.4" height="1.0" fill="#3f51a5"/><rect x="1928.3" y="262.5" width="2.4" height="1.0" fill="#3f51a5"/><rect x="1936.6" y="262.5" width="2.4" height="1.0" fill="#3f51a5"/><rect x="1952.4" y="262.5" width="2.4" height="1.0" fill="#3f51a5"/><rect x="1957.7" y="261.5" width="2.4" height="2.0" fill="#3f51a5"/><rect x="1961.8" y="261.5" width="2.4" height="2.0" fill="#3f51a5"/><rect x="1965.6" y="261.5" width="2.4" height="2.0" fill="#3f51a5"/><rect x="1970.4" y="262.5" width="2.4" height="1.0" fill="#3f51a5"/><rect x="1978.0" y="262.5" width="2.4" height="1.0" fill="#3f51a5"/><rect x="1982.4" y="262.5" width="2.4" height="1.0" fill="#3f51a5"/><rect x="2007.9" y="262.5" width="2.4" height="1.0" fill="#3f51a5"/><rect x="2020.2" y="262.5" width="2.4" height="1.0" fill="#3f51a5"/><rect x="2029.0" y="262.5" width="2.4" height="1.0" fill="#3f51a5"/><rect x="2036.9" y="262.5" width="2.4" height="1.0" fill="#3f51a5"/><rect x="2049.3" y="262.5" width="2.4" height="1.0" fill="#3f51a5"/><rect x="2103.9" y="262.5" width="2.4" height="1.0" fill="#3f51a5"/><rect x="2125.5" y="262.5" width="2.4" height="1.0" fill="#3f51a5"/><rect x="2154.2" y="262.5" width="2.4" height="1.0" fill="#3f51a5"/><rect x="2162.6" y="262.5" width="2.4" height="1.0" fill="#3f51a5"/><rect x="2166.8" y="262.5" width="2.4" height="1.0" fill="#3f51a5"/><rect x="2183.7" y="262.5" width="2.4" height="1.0" fill="#3f51a5"/><rect x="2191.8" y="262.5" width="2.4" height="1.0" fill="#3f51a5"/><rect x="2200.0" y="262.5" width="2.4" height="1.0" fill="#3f51a5"/><rect x="2212.8" y="262.5" width="2.4" height="1.0" fill="#3f51a5"/><rect x="2225.0" y="262.5" width="2.4" height="1.0" fill="#3f51a5"/><rect x="2292.6" y="262.5" width="2.4" height="1.0" fill="#3f51a5"/><rect x="2342.7" y="262.5" width="2.4" height="1.0" fill="#3f51a5"/><rect x="2347.1" y="262.5" width="2.4" height="1.0" fill="#3f51a5"/><rect x="2355.5" y="262.5" width="2.4" height="1.0" fill="#3f51a5"/><rect x="2376.5" y="262.5" width="2.4" height="1.0" fill="#3f51a5"/><rect x="2388.9" y="262.5" width="2.4" height="1.0" fill="#3f51a5"/><rect x="2442.8" y="262.5" width="2.4" height="1.0" fill="#3f51a5"/><rect x="2485.1" y="262.5" width="2.4" height="1.0" fill="#3f51a5"/></svg><div style="position:absolute;left:327.0px;top:271.5px;width:300px;height:18px;line-height:18px;text-align:right;font-size:15px;color:#8e9ba6;transform-origin:100% 50%;transform:rotate(-45deg);white-space:nowrap;">0</div><div style="position:absolute;left:352.1px;top:271.5px;width:300px;height:18px;line-height:18px;text-align:right;font-size:15px;color:#8e9ba6;transform-origin:100% 50%;transform:rotate(-45deg);white-space:nowrap;">7.5852</div><div style="position:absolute;left:377.2px;top:271.5px;width:300px;height:18px;line-height:18px;text-align:right;font-size:15px;color:#8e9ba6;transform-origin:100% 50%;transform:rotate(-45deg);white-space:nowrap;">3.7926</div><div style="position:absolute;left:402.4px;top:271.5px;width:300px;height:18px;line-height:18px;text-align:right;font-size:15px;color:#8e9ba6;transform-origin:100% 50%;transform:rotate(-45deg);white-space:nowrap;">2.5284</div><div style="position:absolute;left:427.5px;top:271.5px;width:300px;height:18px;line-height:18px;text-align:right;font-size:15px;color:#8e9ba6;transform-origin:100% 50%;transform:rotate(-45deg);white-space:nowrap;">1.8963</div><div style="position:absolute;left:452.6px;top:271.5px;width:300px;height:18px;line-height:18px;text-align:right;font-size:15px;color:#8e9ba6;transform-origin:100% 50%;transform:rotate(-45deg);white-space:nowrap;">1.517</div><div style="position:absolute;left:477.7px;top:271.5px;width:300px;height:18px;line-height:18px;text-align:right;font-size:15px;color:#8e9ba6;transform-origin:100% 50%;transform:rotate(-45deg);white-space:nowrap;">1.2642</div><div style="position:absolute;left:502.8px;top:271.5px;width:300px;height:18px;line-height:18px;text-align:right;font-size:15px;color:#8e9ba6;transform-origin:100% 50%;transform:rotate(-45deg);white-space:nowrap;">1.0836</div><div style="position:absolute;left:528.0px;top:271.5px;width:300px;height:18px;line-height:18px;text-align:right;font-size:15px;color:#8e9ba6;transform-origin:100% 50%;transform:rotate(-45deg);white-space:nowrap;">0.9482</div><div style="position:absolute;left:553.1px;top:271.5px;width:300px;height:18px;line-height:18px;text-align:right;font-size:15px;color:#8e9ba6;transform-origin:100% 50%;transform:rotate(-45deg);white-space:nowrap;">0.8428</div><div style="position:absolute;left:578.2px;top:271.5px;width:300px;height:18px;line-height:18px;text-align:right;font-size:15px;color:#8e9ba6;transform-origin:100% 50%;transform:rotate(-45deg);white-space:nowrap;">0.7585</div><div style="position:absolute;left:603.3px;top:271.5px;width:300px;height:18px;line-height:18px;text-align:right;font-size:15px;color:#8e9ba6;transform-origin:100% 50%;transform:rotate(-45deg);white-space:nowrap;">0.6896</div><div style="position:absolute;left:628.4px;top:271.5px;width:300px;height:18px;line-height:18px;text-align:right;font-size:15px;color:#8e9ba6;transform-origin:100% 50%;transform:rotate(-45deg);white-space:nowrap;">0.6321</div><div style="position:absolute;left:653.6px;top:271.5px;width:300px;height:18px;line-height:18px;text-align:right;font-size:15px;color:#8e9ba6;transform-origin:100% 50%;transform:rotate(-45deg);white-space:nowrap;">0.5835</div><div style="position:absolute;left:678.7px;top:271.5px;width:300px;height:18px;line-height:18px;text-align:right;font-size:15px;color:#8e9ba6;transform-origin:100% 50%;transform:rotate(-45deg);white-space:nowrap;">0.5418</div><div style="position:absolute;left:703.8px;top:271.5px;width:300px;height:18px;line-height:18px;text-align:right;font-size:15px;color:#8e9ba6;transform-origin:100% 50%;transform:rotate(-45deg);white-space:nowrap;">0.5057</div><div style="position:absolute;left:728.9px;top:271.5px;width:300px;height:18px;line-height:18px;text-align:right;font-size:15px;color:#8e9ba6;transform-origin:100% 50%;transform:rotate(-45deg);white-space:nowrap;">0.4741</div><div style="position:absolute;left:754.0px;top:271.5px;width:300px;height:18px;line-height:18px;text-align:right;font-size:15px;color:#8e9ba6;transform-origin:100% 50%;transform:rotate(-45deg);white-space:nowrap;">0.4462</div><div style="position:absolute;left:779.2px;top:271.5px;width:300px;height:18px;line-height:18px;text-align:right;font-size:15px;color:#8e9ba6;transform-origin:100% 50%;transform:rotate(-45deg);white-space:nowrap;">0.4214</div><div style="position:absolute;left:804.3px;top:271.5px;width:300px;height:18px;line-height:18px;text-align:right;font-size:15px;color:#8e9ba6;transform-origin:100% 50%;transform:rotate(-45deg);white-space:nowrap;">0.3992</div><div style="position:absolute;left:829.4px;top:271.5px;width:300px;height:18px;line-height:18px;text-align:right;font-size:15px;color:#8e9ba6;transform-origin:100% 50%;transform:rotate(-45deg);white-space:nowrap;">0.3793</div><div style="position:absolute;left:854.5px;top:271.5px;width:300px;height:18px;line-height:18px;text-align:right;font-size:15px;color:#8e9ba6;transform-origin:100% 50%;transform:rotate(-45deg);white-space:nowrap;">0.3612</div><div style="position:absolute;left:879.6px;top:271.5px;width:300px;height:18px;line-height:18px;text-align:right;font-size:15px;color:#8e9ba6;transform-origin:100% 50%;transform:rotate(-45deg);white-space:nowrap;">0.3448</div><div style="position:absolute;left:904.8px;top:271.5px;width:300px;height:18px;line-height:18px;text-align:right;font-size:15px;color:#8e9ba6;transform-origin:100% 50%;transform:rotate(-45deg);white-space:nowrap;">0.3298</div><div style="position:absolute;left:929.9px;top:271.5px;width:300px;height:18px;line-height:18px;text-align:right;font-size:15px;color:#8e9ba6;transform-origin:100% 50%;transform:rotate(-45deg);white-space:nowrap;">0.316</div><div style="position:absolute;left:955.0px;top:271.5px;width:300px;height:18px;line-height:18px;text-align:right;font-size:15px;color:#8e9ba6;transform-origin:100% 50%;transform:rotate(-45deg);white-space:nowrap;">0.3034</div><div style="position:absolute;left:980.1px;top:271.5px;width:300px;height:18px;line-height:18px;text-align:right;font-size:15px;color:#8e9ba6;transform-origin:100% 50%;transform:rotate(-45deg);white-space:nowrap;">0.2917</div><div style="position:absolute;left:1005.2px;top:271.5px;width:300px;height:18px;line-height:18px;text-align:right;font-size:15px;color:#8e9ba6;transform-origin:100% 50%;transform:rotate(-45deg);white-space:nowrap;">0.2809</div><div style="position:absolute;left:1030.4px;top:271.5px;width:300px;height:18px;line-height:18px;text-align:right;font-size:15px;color:#8e9ba6;transform-origin:100% 50%;transform:rotate(-45deg);white-space:nowrap;">0.2709</div><div style="position:absolute;left:1055.5px;top:271.5px;width:300px;height:18px;line-height:18px;text-align:right;font-size:15px;color:#8e9ba6;transform-origin:100% 50%;transform:rotate(-45deg);white-space:nowrap;">0.2616</div><div style="position:absolute;left:1080.6px;top:271.5px;width:300px;height:18px;line-height:18px;text-align:right;font-size:15px;color:#8e9ba6;transform-origin:100% 50%;transform:rotate(-45deg);white-space:nowrap;">0.2528</div><div style="position:absolute;left:1105.7px;top:271.5px;width:300px;height:18px;line-height:18px;text-align:right;font-size:15px;color:#8e9ba6;transform-origin:100% 50%;transform:rotate(-45deg);white-space:nowrap;">0.2447</div><div style="position:absolute;left:1130.8px;top:271.5px;width:300px;height:18px;line-height:18px;text-align:right;font-size:15px;color:#8e9ba6;transform-origin:100% 50%;transform:rotate(-45deg);white-space:nowrap;">0.237</div><div style="position:absolute;left:1156.0px;top:271.5px;width:300px;height:18px;line-height:18px;text-align:right;font-size:15px;color:#8e9ba6;transform-origin:100% 50%;transform:rotate(-45deg);white-space:nowrap;">0.2298</div><div style="position:absolute;left:1181.1px;top:271.5px;width:300px;height:18px;line-height:18px;text-align:right;font-size:15px;color:#8e9ba6;transform-origin:100% 50%;transform:rotate(-45deg);white-space:nowrap;">0.2231</div><div style="position:absolute;left:1206.2px;top:271.5px;width:300px;height:18px;line-height:18px;text-align:right;font-size:15px;color:#8e9ba6;transform-origin:100% 50%;transform:rotate(-45deg);white-space:nowrap;">0.2167</div><div style="position:absolute;left:1231.3px;top:271.5px;width:300px;height:18px;line-height:18px;text-align:right;font-size:15px;color:#8e9ba6;transform-origin:100% 50%;transform:rotate(-45deg);white-space:nowrap;">0.2107</div><div style="position:absolute;left:1256.4px;top:271.5px;width:300px;height:18px;line-height:18px;text-align:right;font-size:15px;color:#8e9ba6;transform-origin:100% 50%;transform:rotate(-45deg);white-space:nowrap;">0.205</div><div style="position:absolute;left:1281.6px;top:271.5px;width:300px;height:18px;line-height:18px;text-align:right;font-size:15px;color:#8e9ba6;transform-origin:100% 50%;transform:rotate(-45deg);white-space:nowrap;">0.1996</div><div style="position:absolute;left:1306.7px;top:271.5px;width:300px;height:18px;line-height:18px;text-align:right;font-size:15px;color:#8e9ba6;transform-origin:100% 50%;transform:rotate(-45deg);white-space:nowrap;">0.1945</div><div style="position:absolute;left:1331.8px;top:271.5px;width:300px;height:18px;line-height:18px;text-align:right;font-size:15px;color:#8e9ba6;transform-origin:100% 50%;transform:rotate(-45deg);white-space:nowrap;">0.1896</div><div style="position:absolute;left:1356.9px;top:271.5px;width:300px;height:18px;line-height:18px;text-align:right;font-size:15px;color:#8e9ba6;transform-origin:100% 50%;transform:rotate(-45deg);white-space:nowrap;">0.185</div><div style="position:absolute;left:1382.0px;top:271.5px;width:300px;height:18px;line-height:18px;text-align:right;font-size:15px;color:#8e9ba6;transform-origin:100% 50%;transform:rotate(-45deg);white-space:nowrap;">0.1806</div><div style="position:absolute;left:1407.2px;top:271.5px;width:300px;height:18px;line-height:18px;text-align:right;font-size:15px;color:#8e9ba6;transform-origin:100% 50%;transform:rotate(-45deg);white-space:nowrap;">0.1764</div><div style="position:absolute;left:1432.3px;top:271.5px;width:300px;height:18px;line-height:18px;text-align:right;font-size:15px;color:#8e9ba6;transform-origin:100% 50%;transform:rotate(-45deg);white-space:nowrap;">0.1724</div><div style="position:absolute;left:1457.4px;top:271.5px;width:300px;height:18px;line-height:18px;text-align:right;font-size:15px;color:#8e9ba6;transform-origin:100% 50%;transform:rotate(-45deg);white-space:nowrap;">0.1686</div><div style="position:absolute;left:1482.5px;top:271.5px;width:300px;height:18px;line-height:18px;text-align:right;font-size:15px;color:#8e9ba6;transform-origin:100% 50%;transform:rotate(-45deg);white-space:nowrap;">0.1649</div><div style="position:absolute;left:1507.6px;top:271.5px;width:300px;height:18px;line-height:18px;text-align:right;font-size:15px;color:#8e9ba6;transform-origin:100% 50%;transform:rotate(-45deg);white-space:nowrap;">0.1614</div><div style="position:absolute;left:1532.8px;top:271.5px;width:300px;height:18px;line-height:18px;text-align:right;font-size:15px;color:#8e9ba6;transform-origin:100% 50%;transform:rotate(-45deg);white-space:nowrap;">0.158</div><div style="position:absolute;left:1557.9px;top:271.5px;width:300px;height:18px;line-height:18px;text-align:right;font-size:15px;color:#8e9ba6;transform-origin:100% 50%;transform:rotate(-45deg);white-space:nowrap;">0.1548</div><div style="position:absolute;left:1583.0px;top:271.5px;width:300px;height:18px;line-height:18px;text-align:right;font-size:15px;color:#8e9ba6;transform-origin:100% 50%;transform:rotate(-45deg);white-space:nowrap;">0.1517</div><div style="position:absolute;left:1608.1px;top:271.5px;width:300px;height:18px;line-height:18px;text-align:right;font-size:15px;color:#8e9ba6;transform-origin:100% 50%;transform:rotate(-45deg);white-space:nowrap;">0.1487</div><div style="position:absolute;left:1633.2px;top:271.5px;width:300px;height:18px;line-height:18px;text-align:right;font-size:15px;color:#8e9ba6;transform-origin:100% 50%;transform:rotate(-45deg);white-space:nowrap;">0.1459</div><div style="position:absolute;left:1658.4px;top:271.5px;width:300px;height:18px;line-height:18px;text-align:right;font-size:15px;color:#8e9ba6;transform-origin:100% 50%;transform:rotate(-45deg);white-space:nowrap;">0.1431</div><div style="position:absolute;left:1683.5px;top:271.5px;width:300px;height:18px;line-height:18px;text-align:right;font-size:15px;color:#8e9ba6;transform-origin:100% 50%;transform:rotate(-45deg);white-space:nowrap;">0.1405</div><div style="position:absolute;left:1708.6px;top:271.5px;width:300px;height:18px;line-height:18px;text-align:right;font-size:15px;color:#8e9ba6;transform-origin:100% 50%;transform:rotate(-45deg);white-space:nowrap;">0.1379</div><div style="position:absolute;left:1733.7px;top:271.5px;width:300px;height:18px;line-height:18px;text-align:right;font-size:15px;color:#8e9ba6;transform-origin:100% 50%;transform:rotate(-45deg);white-space:nowrap;">0.1354</div><div style="position:absolute;left:1758.8px;top:271.5px;width:300px;height:18px;line-height:18px;text-align:right;font-size:15px;color:#8e9ba6;transform-origin:100% 50%;transform:rotate(-45deg);white-space:nowrap;">0.1331</div><div style="position:absolute;left:1784.0px;top:271.5px;width:300px;height:18px;line-height:18px;text-align:right;font-size:15px;color:#8e9ba6;transform-origin:100% 50%;transform:rotate(-45deg);white-space:nowrap;">0.1308</div><div style="position:absolute;left:1809.1px;top:271.5px;width:300px;height:18px;line-height:18px;text-align:right;font-size:15px;color:#8e9ba6;transform-origin:100% 50%;transform:rotate(-45deg);white-space:nowrap;">0.1286</div><div style="position:absolute;left:1834.2px;top:271.5px;width:300px;height:18px;line-height:18px;text-align:right;font-size:15px;color:#8e9ba6;transform-origin:100% 50%;transform:rotate(-45deg);white-space:nowrap;">0.1264</div><div style="position:absolute;left:1859.3px;top:271.5px;width:300px;height:18px;line-height:18px;text-align:right;font-size:15px;color:#8e9ba6;transform-origin:100% 50%;transform:rotate(-45deg);white-space:nowrap;">0.1244</div><div style="position:absolute;left:1884.4px;top:271.5px;width:300px;height:18px;line-height:18px;text-align:right;font-size:15px;color:#8e9ba6;transform-origin:100% 50%;transform:rotate(-45deg);white-space:nowrap;">0.1223</div><div style="position:absolute;left:1909.6px;top:271.5px;width:300px;height:18px;line-height:18px;text-align:right;font-size:15px;color:#8e9ba6;transform-origin:100% 50%;transform:rotate(-45deg);white-space:nowrap;">0.1204</div><div style="position:absolute;left:1934.7px;top:271.5px;width:300px;height:18px;line-height:18px;text-align:right;font-size:15px;color:#8e9ba6;transform-origin:100% 50%;transform:rotate(-45deg);white-space:nowrap;">0.1185</div><div style="position:absolute;left:1959.8px;top:271.5px;width:300px;height:18px;line-height:18px;text-align:right;font-size:15px;color:#8e9ba6;transform-origin:100% 50%;transform:rotate(-45deg);white-space:nowrap;">0.1167</div><div style="position:absolute;left:1984.9px;top:271.5px;width:300px;height:18px;line-height:18px;text-align:right;font-size:15px;color:#8e9ba6;transform-origin:100% 50%;transform:rotate(-45deg);white-space:nowrap;">0.1149</div><div style="position:absolute;left:2010.0px;top:271.5px;width:300px;height:18px;line-height:18px;text-align:right;font-size:15px;color:#8e9ba6;transform-origin:100% 50%;transform:rotate(-45deg);white-space:nowrap;">0.1132</div><div style="position:absolute;left:2035.2px;top:271.5px;width:300px;height:18px;line-height:18px;text-align:right;font-size:15px;color:#8e9ba6;transform-origin:100% 50%;transform:rotate(-45deg);white-space:nowrap;">0.1115</div><div style="position:absolute;left:2060.3px;top:271.5px;width:300px;height:18px;line-height:18px;text-align:right;font-size:15px;color:#8e9ba6;transform-origin:100% 50%;transform:rotate(-45deg);white-space:nowrap;">0.1099</div><div style="position:absolute;left:2085.4px;top:271.5px;width:300px;height:18px;line-height:18px;text-align:right;font-size:15px;color:#8e9ba6;transform-origin:100% 50%;transform:rotate(-45deg);white-space:nowrap;">0.1084</div><div style="position:absolute;left:2110.5px;top:271.5px;width:300px;height:18px;line-height:18px;text-align:right;font-size:15px;color:#8e9ba6;transform-origin:100% 50%;transform:rotate(-45deg);white-space:nowrap;">0.1068</div><div style="position:absolute;left:2135.6px;top:271.5px;width:300px;height:18px;line-height:18px;text-align:right;font-size:15px;color:#8e9ba6;transform-origin:100% 50%;transform:rotate(-45deg);white-space:nowrap;">0.1053</div><div style="position:absolute;left:2160.8px;top:271.5px;width:300px;height:18px;line-height:18px;text-align:right;font-size:15px;color:#8e9ba6;transform-origin:100% 50%;transform:rotate(-45deg);white-space:nowrap;">0.1039</div><div style="position:absolute;left:2185.9px;top:271.5px;width:300px;height:18px;line-height:18px;text-align:right;font-size:15px;color:#8e9ba6;transform-origin:100% 50%;transform:rotate(-45deg);white-space:nowrap;">0.1025</div><div style="position:absolute;left:2211.0px;top:271.5px;width:300px;height:18px;line-height:18px;text-align:right;font-size:15px;color:#8e9ba6;transform-origin:100% 50%;transform:rotate(-45deg);white-space:nowrap;">0.1011</div><div style="position:absolute;right:40px;text-align:right;top:144.0px;line-height:20px;font-size:15.5px;color:#3f51a5;font-weight:normal;white-space:nowrap;">Flow FFT (day)</div><svg style="position:absolute;left:0;top:0" width="2556" height="1263"><rect x="626" y="472.0" width="1907" height="1.5" fill="#ccd6eb"/><rect x="626.5" y="472.5" width="1.3" height="12" fill="#ccd6eb"/><rect x="651.6" y="472.5" width="1.3" height="12" fill="#ccd6eb"/><rect x="676.7" y="472.5" width="1.3" height="12" fill="#ccd6eb"/><rect x="701.9" y="472.5" width="1.3" height="12" fill="#ccd6eb"/><rect x="727.0" y="472.5" width="1.3" height="12" fill="#ccd6eb"/><rect x="752.1" y="472.5" width="1.3" height="12" fill="#ccd6eb"/><rect x="777.2" y="472.5" width="1.3" height="12" fill="#ccd6eb"/><rect x="802.3" y="472.5" width="1.3" height="12" fill="#ccd6eb"/><rect x="827.5" y="472.5" width="1.3" height="12" fill="#ccd6eb"/><rect x="852.6" y="472.5" width="1.3" height="12" fill="#ccd6eb"/><rect x="877.7" y="472.5" width="1.3" height="12" fill="#ccd6eb"/><rect x="902.8" y="472.5" width="1.3" height="12" fill="#ccd6eb"/><rect x="927.9" y="472.5" width="1.3" height="12" fill="#ccd6eb"/><rect x="953.1" y="472.5" width="1.3" height="12" fill="#ccd6eb"/><rect x="978.2" y="472.5" width="1.3" height="12" fill="#ccd6eb"/><rect x="1003.3" y="472.5" width="1.3" height="12" fill="#ccd6eb"/><rect x="1028.4" y="472.5" width="1.3" height="12" fill="#ccd6eb"/><rect x="1053.5" y="472.5" width="1.3" height="12" fill="#ccd6eb"/><rect x="1078.7" y="472.5" width="1.3" height="12" fill="#ccd6eb"/><rect x="1103.8" y="472.5" width="1.3" height="12" fill="#ccd6eb"/><rect x="1128.9" y="472.5" width="1.3" height="12" fill="#ccd6eb"/><rect x="1154.0" y="472.5" width="1.3" height="12" fill="#ccd6eb"/><rect x="1179.1" y="472.5" width="1.3" height="12" fill="#ccd6eb"/><rect x="1204.3" y="472.5" width="1.3" height="12" fill="#ccd6eb"/><rect x="1229.4" y="472.5" width="1.3" height="12" fill="#ccd6eb"/><rect x="1254.5" y="472.5" width="1.3" height="12" fill="#ccd6eb"/><rect x="1279.6" y="472.5" width="1.3" height="12" fill="#ccd6eb"/><rect x="1304.7" y="472.5" width="1.3" height="12" fill="#ccd6eb"/><rect x="1329.9" y="472.5" width="1.3" height="12" fill="#ccd6eb"/><rect x="1355.0" y="472.5" width="1.3" height="12" fill="#ccd6eb"/><rect x="1380.1" y="472.5" width="1.3" height="12" fill="#ccd6eb"/><rect x="1405.2" y="472.5" width="1.3" height="12" fill="#ccd6eb"/><rect x="1430.3" y="472.5" width="1.3" height="12" fill="#ccd6eb"/><rect x="1455.5" y="472.5" width="1.3" height="12" fill="#ccd6eb"/><rect x="1480.6" y="472.5" width="1.3" height="12" fill="#ccd6eb"/><rect x="1505.7" y="472.5" width="1.3" height="12" fill="#ccd6eb"/><rect x="1530.8" y="472.5" width="1.3" height="12" fill="#ccd6eb"/><rect x="1555.9" y="472.5" width="1.3" height="12" fill="#ccd6eb"/><rect x="1581.1" y="472.5" width="1.3" height="12" fill="#ccd6eb"/><rect x="1606.2" y="472.5" width="1.3" height="12" fill="#ccd6eb"/><rect x="1631.3" y="472.5" width="1.3" height="12" fill="#ccd6eb"/><rect x="1656.4" y="472.5" width="1.3" height="12" fill="#ccd6eb"/><rect x="1681.5" y="472.5" width="1.3" height="12" fill="#ccd6eb"/><rect x="1706.7" y="472.5" width="1.3" height="12" fill="#ccd6eb"/><rect x="1731.8" y="472.5" width="1.3" height="12" fill="#ccd6eb"/><rect x="1756.9" y="472.5" width="1.3" height="12" fill="#ccd6eb"/><rect x="1782.0" y="472.5" width="1.3" height="12" fill="#ccd6eb"/><rect x="1807.1" y="472.5" width="1.3" height="12" fill="#ccd6eb"/><rect x="1832.3" y="472.5" width="1.3" height="12" fill="#ccd6eb"/><rect x="1857.4" y="472.5" width="1.3" height="12" fill="#ccd6eb"/><rect x="1882.5" y="472.5" width="1.3" height="12" fill="#ccd6eb"/><rect x="1907.6" y="472.5" width="1.3" height="12" fill="#ccd6eb"/><rect x="1932.7" y="472.5" width="1.3" height="12" fill="#ccd6eb"/><rect x="1957.9" y="472.5" width="1.3" height="12" fill="#ccd6eb"/><rect x="1983.0" y="472.5" width="1.3" height="12" fill="#ccd6eb"/><rect x="2008.1" y="472.5" width="1.3" height="12" fill="#ccd6eb"/><rect x="2033.2" y="472.5" width="1.3" height="12" fill="#ccd6eb"/><rect x="2058.3" y="472.5" width="1.3" height="12" fill="#ccd6eb"/><rect x="2083.5" y="472.5" width="1.3" height="12" fill="#ccd6eb"/><rect x="2108.6" y="472.5" width="1.3" height="12" fill="#ccd6eb"/><rect x="2133.7" y="472.5" width="1.3" height="12" fill="#ccd6eb"/><rect x="2158.8" y="472.5" width="1.3" height="12" fill="#ccd6eb"/><rect x="2183.9" y="472.5" width="1.3" height="12" fill="#ccd6eb"/><rect x="2209.1" y="472.5" width="1.3" height="12" fill="#ccd6eb"/><rect x="2234.2" y="472.5" width="1.3" height="12" fill="#ccd6eb"/><rect x="2259.3" y="472.5" width="1.3" height="12" fill="#ccd6eb"/><rect x="2284.4" y="472.5" width="1.3" height="12" fill="#ccd6eb"/><rect x="2309.5" y="472.5" width="1.3" height="12" fill="#ccd6eb"/><rect x="2334.7" y="472.5" width="1.3" height="12" fill="#ccd6eb"/><rect x="2359.8" y="472.5" width="1.3" height="12" fill="#ccd6eb"/><rect x="2384.9" y="472.5" width="1.3" height="12" fill="#ccd6eb"/><rect x="2410.0" y="472.5" width="1.3" height="12" fill="#ccd6eb"/><rect x="2435.1" y="472.5" width="1.3" height="12" fill="#ccd6eb"/><rect x="2460.3" y="472.5" width="1.3" height="12" fill="#ccd6eb"/><rect x="2485.4" y="472.5" width="1.3" height="12" fill="#ccd6eb"/><rect x="2510.5" y="472.5" width="1.3" height="12" fill="#ccd6eb"/><rect x="647.7" y="470.9" width="2.4" height="1.6" fill="#a02a96"/><rect x="667.9" y="470.9" width="2.4" height="1.6" fill="#a02a96"/><rect x="672.7" y="470.9" width="2.4" height="1.6" fill="#a02a96"/><rect x="680.1" y="469.6" width="2.4" height="2.9" fill="#a02a96"/><rect x="685.4" y="469.6" width="2.4" height="2.9" fill="#a02a96"/><rect x="688.8" y="467.4" width="2.4" height="5.1" fill="#a02a96"/><rect x="693.0" y="466.2" width="2.4" height="6.3" fill="#a02a96"/><rect x="697.5" y="470.9" width="2.4" height="1.6" fill="#a02a96"/><rect x="701.5" y="467.4" width="2.4" height="5.1" fill="#a02a96"/><rect x="705.3" y="469.6" width="2.4" height="2.9" fill="#a02a96"/><rect x="710.3" y="469.6" width="2.4" height="2.9" fill="#a02a96"/><rect x="714.2" y="467.4" width="2.4" height="5.1" fill="#a02a96"/><rect x="718.9" y="469.6" width="2.4" height="2.9" fill="#a02a96"/><rect x="726.5" y="466.2" width="2.4" height="6.3" fill="#a02a96"/><rect x="731.4" y="469.6" width="2.4" height="2.9" fill="#a02a96"/><rect x="735.2" y="466.2" width="2.4" height="6.3" fill="#a02a96"/><rect x="739.2" y="468.5" width="2.4" height="4.0" fill="#a02a96"/><rect x="743.9" y="467.4" width="2.4" height="5.1" fill="#a02a96"/><rect x="747.9" y="466.2" width="2.4" height="6.3" fill="#a02a96"/><rect x="751.6" y="468.5" width="2.4" height="4.0" fill="#a02a96"/><rect x="756.6" y="469.6" width="2.4" height="2.9" fill="#a02a96"/><rect x="760.3" y="470.9" width="2.4" height="1.6" fill="#a02a96"/><rect x="764.1" y="465.0" width="2.4" height="7.5" fill="#a02a96"/><rect x="769.0" y="468.5" width="2.4" height="4.0" fill="#a02a96"/><rect x="776.6" y="467.4" width="2.4" height="5.1" fill="#a02a96"/><rect x="785.3" y="468.5" width="2.4" height="4.0" fill="#a02a96"/><rect x="789.1" y="461.0" width="2.4" height="11.5" fill="#a02a96"/><rect x="797.9" y="457.5" width="2.4" height="15.0" fill="#a02a96"/><rect x="802.5" y="465.0" width="2.4" height="7.5" fill="#a02a96"/><rect x="806.5" y="448.7" width="2.4" height="23.8" fill="#a02a96"/><rect x="810.5" y="462.6" width="2.4" height="9.9" fill="#a02a96"/><rect x="814.6" y="396.1" width="2.4" height="76.4" fill="#a02a96"/><rect x="819.2" y="392.1" width="2.4" height="80.4" fill="#a02a96"/><rect x="822.9" y="469.6" width="2.4" height="2.9" fill="#a02a96"/><rect x="827.6" y="458.6" width="2.4" height="13.9" fill="#a02a96"/><rect x="831.6" y="446.0" width="2.4" height="26.5" fill="#a02a96"/><rect x="835.3" y="451.1" width="2.4" height="21.4" fill="#a02a96"/><rect x="840.3" y="457.5" width="2.4" height="15.0" fill="#a02a96"/><rect x="844.1" y="470.9" width="2.4" height="1.6" fill="#a02a96"/><rect x="848.1" y="466.2" width="2.4" height="6.3" fill="#a02a96"/><rect x="852.9" y="470.9" width="2.4" height="1.6" fill="#a02a96"/><rect x="856.6" y="467.4" width="2.4" height="5.1" fill="#a02a96"/><rect x="860.3" y="468.5" width="2.4" height="4.0" fill="#a02a96"/><rect x="869.0" y="463.8" width="2.4" height="8.7" fill="#a02a96"/><rect x="873.0" y="466.2" width="2.4" height="6.3" fill="#a02a96"/><rect x="878.0" y="453.9" width="2.4" height="18.6" fill="#a02a96"/><rect x="881.7" y="457.5" width="2.4" height="15.0" fill="#a02a96"/><rect x="885.3" y="469.6" width="2.4" height="2.9" fill="#a02a96"/><rect x="890.4" y="469.6" width="2.4" height="2.9" fill="#a02a96"/><rect x="894.2" y="469.6" width="2.4" height="2.9" fill="#a02a96"/><rect x="899.1" y="470.9" width="2.4" height="1.6" fill="#a02a96"/><rect x="902.7" y="470.9" width="2.4" height="1.6" fill="#a02a96"/><rect x="911.4" y="468.5" width="2.4" height="4.0" fill="#a02a96"/><rect x="915.4" y="463.8" width="2.4" height="8.7" fill="#a02a96"/><rect x="919.1" y="465.0" width="2.4" height="7.5" fill="#a02a96"/><rect x="924.1" y="462.6" width="2.4" height="9.9" fill="#a02a96"/><rect x="927.8" y="469.6" width="2.4" height="2.9" fill="#a02a96"/><rect x="931.6" y="463.8" width="2.4" height="8.7" fill="#a02a96"/><rect x="936.5" y="469.6" width="2.4" height="2.9" fill="#a02a96"/><rect x="944.1" y="461.4" width="2.4" height="11.1" fill="#a02a96"/><rect x="948.8" y="467.4" width="2.4" height="5.1" fill="#a02a96"/><rect x="952.9" y="458.6" width="2.4" height="13.9" fill="#a02a96"/><rect x="956.7" y="463.8" width="2.4" height="8.7" fill="#a02a96"/><rect x="961.5" y="466.2" width="2.4" height="6.3" fill="#a02a96"/><rect x="965.4" y="466.2" width="2.4" height="6.3" fill="#a02a96"/><rect x="969.2" y="470.9" width="2.4" height="1.6" fill="#a02a96"/><rect x="974.0" y="465.0" width="2.4" height="7.5" fill="#a02a96"/><rect x="978.0" y="458.6" width="2.4" height="13.9" fill="#a02a96"/><rect x="982.5" y="463.8" width="2.4" height="8.7" fill="#a02a96"/><rect x="986.4" y="462.6" width="2.4" height="9.9" fill="#a02a96"/><rect x="990.4" y="449.9" width="2.4" height="22.6" fill="#a02a96"/><rect x="995.1" y="463.8" width="2.4" height="8.7" fill="#a02a96"/><rect x="999.1" y="457.5" width="2.4" height="15.0" fill="#a02a96"/><rect x="1002.8" y="451.1" width="2.4" height="21.4" fill="#a02a96"/><rect x="1008.0" y="412.3" width="2.4" height="60.2" fill="#a02a96"/><rect x="1011.8" y="441.2" width="2.4" height="31.3" fill="#a02a96"/><rect x="1015.5" y="458.6" width="2.4" height="13.9" fill="#a02a96"/><rect x="1020.1" y="463.8" width="2.4" height="8.7" fill="#a02a96"/><rect x="1024.0" y="462.6" width="2.4" height="9.9" fill="#a02a96"/><rect x="1028.0" y="468.5" width="2.4" height="4.0" fill="#a02a96"/><rect x="1032.7" y="467.4" width="2.4" height="5.1" fill="#a02a96"/><rect x="1036.4" y="466.2" width="2.4" height="6.3" fill="#a02a96"/><rect x="1040.3" y="461.5" width="2.4" height="11.0" fill="#a02a96"/><rect x="1045.3" y="467.8" width="2.4" height="4.7" fill="#a02a96"/><rect x="1049.2" y="469.0" width="2.4" height="3.5" fill="#a02a96"/><rect x="1053.1" y="463.9" width="2.4" height="8.6" fill="#a02a96"/><rect x="1057.8" y="462.7" width="2.4" height="9.8" fill="#a02a96"/><rect x="1061.7" y="458.8" width="2.4" height="13.7" fill="#a02a96"/><rect x="1065.2" y="469.0" width="2.4" height="3.5" fill="#a02a96"/><rect x="1070.3" y="466.2" width="2.4" height="6.3" fill="#a02a96"/><rect x="1074.0" y="463.9" width="2.4" height="8.6" fill="#a02a96"/><rect x="1078.9" y="461.5" width="2.4" height="11.0" fill="#a02a96"/><rect x="1082.8" y="458.0" width="2.4" height="14.5" fill="#a02a96"/><rect x="1086.7" y="461.5" width="2.4" height="11.0" fill="#a02a96"/><rect x="1091.7" y="460.1" width="2.4" height="12.4" fill="#a02a96"/><rect x="1095.4" y="471.3" width="2.4" height="1.2" fill="#a02a96"/><rect x="1099.3" y="471.3" width="2.4" height="1.2" fill="#a02a96"/><rect x="1104.0" y="470.2" width="2.4" height="2.3" fill="#a02a96"/><rect x="1107.9" y="471.3" width="2.4" height="1.2" fill="#a02a96"/><rect x="1111.8" y="466.6" width="2.4" height="5.9" fill="#a02a96"/><rect x="1116.7" y="461.5" width="2.4" height="11.0" fill="#a02a96"/><rect x="1120.4" y="467.8" width="2.4" height="4.7" fill="#a02a96"/><rect x="1124.3" y="465.1" width="2.4" height="7.4" fill="#a02a96"/><rect x="1129.0" y="466.6" width="2.4" height="5.9" fill="#a02a96"/><rect x="1132.9" y="470.2" width="2.4" height="2.3" fill="#a02a96"/><rect x="1136.6" y="462.7" width="2.4" height="9.8" fill="#a02a96"/><rect x="1141.5" y="467.8" width="2.4" height="4.7" fill="#a02a96"/><rect x="1145.4" y="465.1" width="2.4" height="7.4" fill="#a02a96"/><rect x="1149.1" y="460.0" width="2.4" height="12.5" fill="#a02a96"/><rect x="1154.0" y="466.6" width="2.4" height="5.9" fill="#a02a96"/><rect x="1158.0" y="471.3" width="2.4" height="1.2" fill="#a02a96"/><rect x="1163.0" y="466.6" width="2.4" height="5.9" fill="#a02a96"/><rect x="1166.8" y="467.8" width="2.4" height="4.7" fill="#a02a96"/><rect x="1170.5" y="462.7" width="2.4" height="9.8" fill="#a02a96"/><rect x="1175.2" y="469.0" width="2.4" height="3.5" fill="#a02a96"/><rect x="1179.1" y="469.0" width="2.4" height="3.5" fill="#a02a96"/><rect x="1183.0" y="463.9" width="2.4" height="8.6" fill="#a02a96"/><rect x="1187.7" y="469.0" width="2.4" height="3.5" fill="#a02a96"/><rect x="1191.6" y="461.5" width="2.4" height="11.0" fill="#a02a96"/><rect x="1195.5" y="449.0" width="2.4" height="23.5" fill="#a02a96"/><rect x="1200.2" y="456.5" width="2.4" height="16.0" fill="#a02a96"/><rect x="1204.1" y="471.3" width="2.4" height="1.2" fill="#a02a96"/><rect x="1208.0" y="469.0" width="2.4" height="3.5" fill="#a02a96"/><rect x="1216.6" y="467.8" width="2.4" height="4.7" fill="#a02a96"/><rect x="1220.5" y="469.0" width="2.4" height="3.5" fill="#a02a96"/><rect x="1225.2" y="467.8" width="2.4" height="4.7" fill="#a02a96"/><rect x="1229.2" y="467.8" width="2.4" height="4.7" fill="#a02a96"/><rect x="1233.1" y="470.2" width="2.4" height="2.3" fill="#a02a96"/><rect x="1245.3" y="470.2" width="2.4" height="2.3" fill="#a02a96"/><rect x="1250.3" y="463.9" width="2.4" height="8.6" fill="#a02a96"/><rect x="1254.7" y="465.1" width="2.4" height="7.4" fill="#a02a96"/><rect x="1258.9" y="471.4" width="2.4" height="1.1" fill="#a02a96"/><rect x="1263.1" y="470.2" width="2.4" height="2.3" fill="#a02a96"/><rect x="1271.4" y="468.9" width="2.4" height="3.6" fill="#a02a96"/><rect x="1275.3" y="465.1" width="2.4" height="7.4" fill="#a02a96"/><rect x="1279.7" y="471.4" width="2.4" height="1.1" fill="#a02a96"/><rect x="1283.9" y="468.9" width="2.4" height="3.6" fill="#a02a96"/><rect x="1288.1" y="470.2" width="2.4" height="2.3" fill="#a02a96"/><rect x="1296.4" y="465.1" width="2.4" height="7.4" fill="#a02a96"/><rect x="1300.4" y="466.2" width="2.4" height="6.3" fill="#a02a96"/><rect x="1304.6" y="470.2" width="2.4" height="2.3" fill="#a02a96"/><rect x="1309.0" y="471.4" width="2.4" height="1.1" fill="#a02a96"/><rect x="1312.9" y="467.8" width="2.4" height="4.7" fill="#a02a96"/><rect x="1317.3" y="471.4" width="2.4" height="1.1" fill="#a02a96"/><rect x="1321.5" y="471.4" width="2.4" height="1.1" fill="#a02a96"/><rect x="1325.4" y="468.9" width="2.4" height="3.6" fill="#a02a96"/><rect x="1329.3" y="471.4" width="2.4" height="1.1" fill="#a02a96"/><rect x="1334.0" y="470.2" width="2.4" height="2.3" fill="#a02a96"/><rect x="1337.9" y="470.2" width="2.4" height="2.3" fill="#a02a96"/><rect x="1342.1" y="467.8" width="2.4" height="4.7" fill="#a02a96"/><rect x="1346.5" y="470.2" width="2.4" height="2.3" fill="#a02a96"/><rect x="1350.4" y="466.2" width="2.4" height="6.3" fill="#a02a96"/><rect x="1355.1" y="468.9" width="2.4" height="3.6" fill="#a02a96"/><rect x="1359.0" y="460.0" width="2.4" height="12.5" fill="#a02a96"/><rect x="1363.3" y="471.4" width="2.4" height="1.1" fill="#a02a96"/><rect x="1367.6" y="470.2" width="2.4" height="2.3" fill="#a02a96"/><rect x="1371.6" y="467.8" width="2.4" height="4.7" fill="#a02a96"/><rect x="1375.5" y="471.4" width="2.4" height="1.1" fill="#a02a96"/><rect x="1380.2" y="465.1" width="2.4" height="7.4" fill="#a02a96"/><rect x="1384.1" y="466.2" width="2.4" height="6.3" fill="#a02a96"/><rect x="1388.0" y="453.7" width="2.4" height="18.8" fill="#a02a96"/><rect x="1392.7" y="460.0" width="2.4" height="12.5" fill="#a02a96"/><rect x="1396.6" y="471.4" width="2.4" height="1.1" fill="#a02a96"/><rect x="1405.2" y="471.4" width="2.4" height="1.1" fill="#a02a96"/><rect x="1409.1" y="468.9" width="2.4" height="3.6" fill="#a02a96"/><rect x="1413.0" y="468.9" width="2.4" height="3.6" fill="#a02a96"/><rect x="1421.6" y="471.4" width="2.4" height="1.1" fill="#a02a96"/><rect x="1425.5" y="466.2" width="2.4" height="6.3" fill="#a02a96"/><rect x="1430.2" y="470.2" width="2.4" height="2.3" fill="#a02a96"/><rect x="1438.9" y="471.4" width="2.4" height="1.1" fill="#a02a96"/><rect x="1442.8" y="468.9" width="2.4" height="3.6" fill="#a02a96"/><rect x="1446.7" y="470.2" width="2.4" height="2.3" fill="#a02a96"/><rect x="1451.4" y="470.2" width="2.4" height="2.3" fill="#a02a96"/><rect x="1455.3" y="471.4" width="2.4" height="1.1" fill="#a02a96"/><rect x="1459.2" y="471.4" width="2.4" height="1.1" fill="#a02a96"/><rect x="1463.9" y="470.2" width="2.4" height="2.3" fill="#a02a96"/><rect x="1467.8" y="468.9" width="2.4" height="3.6" fill="#a02a96"/><rect x="1471.7" y="468.9" width="2.4" height="3.6" fill="#a02a96"/><rect x="1476.4" y="470.2" width="2.4" height="2.3" fill="#a02a96"/><rect x="1480.3" y="468.9" width="2.4" height="3.6" fill="#a02a96"/><rect x="1484.2" y="471.4" width="2.4" height="1.1" fill="#a02a96"/><rect x="1488.1" y="470.2" width="2.4" height="2.3" fill="#a02a96"/><rect x="1492.8" y="466.2" width="2.4" height="6.3" fill="#a02a96"/><rect x="1496.8" y="465.1" width="2.4" height="7.4" fill="#a02a96"/><rect x="1501.4" y="471.4" width="2.4" height="1.1" fill="#a02a96"/><rect x="1505.4" y="470.2" width="2.4" height="2.3" fill="#a02a96"/><rect x="1514.0" y="470.2" width="2.4" height="2.3" fill="#a02a96"/><rect x="1517.9" y="467.8" width="2.4" height="4.7" fill="#a02a96"/><rect x="1522.6" y="471.4" width="2.4" height="1.1" fill="#a02a96"/><rect x="1526.5" y="467.8" width="2.4" height="4.7" fill="#a02a96"/><rect x="1530.4" y="467.8" width="2.4" height="4.7" fill="#a02a96"/><rect x="1534.3" y="471.4" width="2.4" height="1.1" fill="#a02a96"/><rect x="1539.0" y="470.2" width="2.4" height="2.3" fill="#a02a96"/><rect x="1547.6" y="467.8" width="2.4" height="4.7" fill="#a02a96"/><rect x="1551.5" y="467.8" width="2.4" height="4.7" fill="#a02a96"/><rect x="1555.4" y="471.4" width="2.4" height="1.1" fill="#a02a96"/><rect x="1560.1" y="470.2" width="2.4" height="2.3" fill="#a02a96"/><rect x="1564.0" y="467.8" width="2.4" height="4.7" fill="#a02a96"/><rect x="1568.0" y="471.4" width="2.4" height="1.1" fill="#a02a96"/><rect x="1572.7" y="470.2" width="2.4" height="2.3" fill="#a02a96"/><rect x="1576.6" y="471.4" width="2.4" height="1.1" fill="#a02a96"/><rect x="1580.5" y="471.4" width="2.4" height="1.1" fill="#a02a96"/><rect x="1589.1" y="470.2" width="2.4" height="2.3" fill="#a02a96"/><rect x="1593.0" y="468.9" width="2.4" height="3.6" fill="#a02a96"/><rect x="1601.6" y="470.2" width="2.4" height="2.3" fill="#a02a96"/><rect x="1605.5" y="470.2" width="2.4" height="2.3" fill="#a02a96"/><rect x="1610.2" y="468.9" width="2.4" height="3.6" fill="#a02a96"/><rect x="1614.1" y="471.4" width="2.4" height="1.1" fill="#a02a96"/><rect x="1618.8" y="467.8" width="2.4" height="4.7" fill="#a02a96"/><rect x="1622.7" y="470.2" width="2.4" height="2.3" fill="#a02a96"/><rect x="1631.3" y="466.5" width="2.4" height="6.0" fill="#a02a96"/><rect x="1635.1" y="471.5" width="2.4" height="1.0" fill="#a02a96"/><rect x="1639.5" y="470.5" width="2.4" height="2.0" fill="#a02a96"/><rect x="1643.9" y="470.5" width="2.4" height="2.0" fill="#a02a96"/><rect x="1651.8" y="471.5" width="2.4" height="1.0" fill="#a02a96"/><rect x="1656.3" y="471.5" width="2.4" height="1.0" fill="#a02a96"/><rect x="1660.7" y="470.5" width="2.4" height="2.0" fill="#a02a96"/><rect x="1665.1" y="471.5" width="2.4" height="1.0" fill="#a02a96"/><rect x="1669.5" y="471.5" width="2.4" height="1.0" fill="#a02a96"/><rect x="1673.9" y="471.5" width="2.4" height="1.0" fill="#a02a96"/><rect x="1685.3" y="470.5" width="2.4" height="2.0" fill="#a02a96"/><rect x="1689.7" y="471.5" width="2.4" height="1.0" fill="#a02a96"/><rect x="1694.1" y="466.5" width="2.4" height="6.0" fill="#a02a96"/><rect x="1702.0" y="470.5" width="2.4" height="2.0" fill="#a02a96"/><rect x="1707.0" y="471.5" width="2.4" height="1.0" fill="#a02a96"/><rect x="1715.2" y="469.5" width="2.4" height="3.0" fill="#a02a96"/><rect x="1719.6" y="471.5" width="2.4" height="1.0" fill="#a02a96"/><rect x="1724.0" y="471.5" width="2.4" height="1.0" fill="#a02a96"/><rect x="1728.4" y="471.5" width="2.4" height="1.0" fill="#a02a96"/><rect x="1732.0" y="471.5" width="2.4" height="1.0" fill="#a02a96"/><rect x="1735.5" y="471.5" width="2.4" height="1.0" fill="#a02a96"/><rect x="1743.9" y="470.5" width="2.4" height="2.0" fill="#a02a96"/><rect x="1748.2" y="468.5" width="2.4" height="4.0" fill="#a02a96"/><rect x="1756.6" y="471.5" width="2.4" height="1.0" fill="#a02a96"/><rect x="1761.0" y="471.5" width="2.4" height="1.0" fill="#a02a96"/><rect x="1768.9" y="467.5" width="2.4" height="5.0" fill="#a02a96"/><rect x="1773.3" y="468.5" width="2.4" height="4.0" fill="#a02a96"/><rect x="1777.7" y="470.5" width="2.4" height="2.0" fill="#a02a96"/><rect x="1782.1" y="471.5" width="2.4" height="1.0" fill="#a02a96"/><rect x="1785.7" y="470.5" width="2.4" height="2.0" fill="#a02a96"/><rect x="1794.5" y="468.5" width="2.4" height="4.0" fill="#a02a96"/><rect x="1802.4" y="471.5" width="2.4" height="1.0" fill="#a02a96"/><rect x="1806.8" y="470.5" width="2.4" height="2.0" fill="#a02a96"/><rect x="1812.1" y="470.5" width="2.4" height="2.0" fill="#a02a96"/><rect x="1819.1" y="470.5" width="2.4" height="2.0" fill="#a02a96"/><rect x="1823.5" y="470.5" width="2.4" height="2.0" fill="#a02a96"/><rect x="1827.9" y="471.5" width="2.4" height="1.0" fill="#a02a96"/><rect x="1836.7" y="471.5" width="2.4" height="1.0" fill="#a02a96"/><rect x="1840.8" y="470.5" width="2.4" height="2.0" fill="#a02a96"/><rect x="1844.6" y="470.5" width="2.4" height="2.0" fill="#a02a96"/><rect x="1849.0" y="468.5" width="2.4" height="4.0" fill="#a02a96"/><rect x="1853.4" y="471.5" width="2.4" height="1.0" fill="#a02a96"/><rect x="1857.8" y="471.5" width="2.4" height="1.0" fill="#a02a96"/><rect x="1861.4" y="471.5" width="2.4" height="1.0" fill="#a02a96"/><rect x="1865.8" y="470.5" width="2.4" height="2.0" fill="#a02a96"/><rect x="1877.2" y="471.5" width="2.4" height="1.0" fill="#a02a96"/><rect x="1881.6" y="471.5" width="2.4" height="1.0" fill="#a02a96"/><rect x="1890.4" y="471.5" width="2.4" height="1.0" fill="#a02a96"/><rect x="1894.8" y="471.5" width="2.4" height="1.0" fill="#a02a96"/><rect x="1899.2" y="470.5" width="2.4" height="2.0" fill="#a02a96"/><rect x="1903.6" y="471.5" width="2.4" height="1.0" fill="#a02a96"/><rect x="1911.5" y="470.5" width="2.4" height="2.0" fill="#a02a96"/><rect x="1915.9" y="471.5" width="2.4" height="1.0" fill="#a02a96"/><rect x="1933.0" y="470.5" width="2.4" height="2.0" fill="#a02a96"/><rect x="1940.6" y="471.5" width="2.4" height="1.0" fill="#a02a96"/><rect x="1945.0" y="471.5" width="2.4" height="1.0" fill="#a02a96"/><rect x="1953.4" y="471.5" width="2.4" height="1.0" fill="#a02a96"/><rect x="1961.7" y="470.5" width="2.4" height="2.0" fill="#a02a96"/><rect x="1965.8" y="470.5" width="2.4" height="2.0" fill="#a02a96"/><rect x="1974.0" y="468.5" width="2.4" height="4.0" fill="#a02a96"/><rect x="1978.4" y="471.5" width="2.4" height="1.0" fill="#a02a96"/><rect x="1982.8" y="471.5" width="2.4" height="1.0" fill="#a02a96"/><rect x="1987.2" y="471.5" width="2.4" height="1.0" fill="#a02a96"/><rect x="2004.0" y="471.5" width="2.4" height="1.0" fill="#a02a96"/><rect x="2008.4" y="470.5" width="2.4" height="2.0" fill="#a02a96"/><rect x="2012.2" y="471.5" width="2.4" height="1.0" fill="#a02a96"/><rect x="2016.8" y="470.5" width="2.4" height="2.0" fill="#a02a96"/><rect x="2024.2" y="471.5" width="2.4" height="1.0" fill="#a02a96"/><rect x="2033.0" y="471.5" width="2.4" height="1.0" fill="#a02a96"/><rect x="2037.4" y="471.5" width="2.4" height="1.0" fill="#a02a96"/><rect x="2041.8" y="470.5" width="2.4" height="2.0" fill="#a02a96"/><rect x="2057.7" y="471.5" width="2.4" height="1.0" fill="#a02a96"/><rect x="2066.5" y="471.5" width="2.4" height="1.0" fill="#a02a96"/><rect x="2070.9" y="471.5" width="2.4" height="1.0" fill="#a02a96"/><rect x="2075.2" y="469.5" width="2.4" height="3.0" fill="#a02a96"/><rect x="2079.5" y="469.5" width="2.4" height="3.0" fill="#a02a96"/><rect x="2083.5" y="471.5" width="2.4" height="1.0" fill="#a02a96"/><rect x="2088.1" y="471.5" width="2.4" height="1.0" fill="#a02a96"/><rect x="2104.1" y="471.5" width="2.4" height="1.0" fill="#a02a96"/><rect x="2125.4" y="471.5" width="2.4" height="1.0" fill="#a02a96"/><rect x="2129.1" y="471.5" width="2.4" height="1.0" fill="#a02a96"/><rect x="2133.1" y="471.5" width="2.4" height="1.0" fill="#a02a96"/><rect x="2141.4" y="471.5" width="2.4" height="1.0" fill="#a02a96"/><rect x="2145.6" y="471.5" width="2.4" height="1.0" fill="#a02a96"/><rect x="2162.9" y="471.5" width="2.4" height="1.0" fill="#a02a96"/><rect x="2171.4" y="471.5" width="2.4" height="1.0" fill="#a02a96"/><rect x="2175.4" y="471.5" width="2.4" height="1.0" fill="#a02a96"/><rect x="2200.2" y="471.5" width="2.4" height="1.0" fill="#a02a96"/><rect x="2204.5" y="471.5" width="2.4" height="1.0" fill="#a02a96"/><rect x="2213.1" y="471.5" width="2.4" height="1.0" fill="#a02a96"/><rect x="2241.6" y="471.5" width="2.4" height="1.0" fill="#a02a96"/><rect x="2246.7" y="471.5" width="2.4" height="1.0" fill="#a02a96"/><rect x="2275.0" y="471.5" width="2.4" height="1.0" fill="#a02a96"/><rect x="2280.2" y="471.5" width="2.4" height="1.0" fill="#a02a96"/><rect x="2287.9" y="471.5" width="2.4" height="1.0" fill="#a02a96"/><rect x="2305.0" y="471.5" width="2.4" height="1.0" fill="#a02a96"/><rect x="2309.2" y="470.5" width="2.4" height="2.0" fill="#a02a96"/><rect x="2317.9" y="471.5" width="2.4" height="1.0" fill="#a02a96"/><rect x="2338.1" y="471.5" width="2.4" height="1.0" fill="#a02a96"/><rect x="2351.0" y="471.5" width="2.4" height="1.0" fill="#a02a96"/><rect x="2355.2" y="471.5" width="2.4" height="1.0" fill="#a02a96"/><rect x="2384.1" y="471.5" width="2.4" height="1.0" fill="#a02a96"/><rect x="2389.0" y="470.5" width="2.4" height="2.0" fill="#a02a96"/><rect x="2393.2" y="471.5" width="2.4" height="1.0" fill="#a02a96"/><rect x="2401.5" y="471.5" width="2.4" height="1.0" fill="#a02a96"/><rect x="2426.3" y="471.5" width="2.4" height="1.0" fill="#a02a96"/><rect x="2430.6" y="471.5" width="2.4" height="1.0" fill="#a02a96"/><rect x="2455.7" y="471.5" width="2.4" height="1.0" fill="#a02a96"/><rect x="2460.3" y="471.5" width="2.4" height="1.0" fill="#a02a96"/><rect x="2476.0" y="471.5" width="2.4" height="1.0" fill="#a02a96"/><rect x="2480.2" y="471.5" width="2.4" height="1.0" fill="#a02a96"/><rect x="2497.1" y="471.5" width="2.4" height="1.0" fill="#a02a96"/><rect x="2505.4" y="471.5" width="2.4" height="1.0" fill="#a02a96"/></svg><div style="position:absolute;left:327.0px;top:480.5px;width:300px;height:18px;line-height:18px;text-align:right;font-size:15px;color:#8e9ba6;transform-origin:100% 50%;transform:rotate(-45deg);white-space:nowrap;">0</div><div style="position:absolute;left:352.1px;top:480.5px;width:300px;height:18px;line-height:18px;text-align:right;font-size:15px;color:#8e9ba6;transform-origin:100% 50%;transform:rotate(-45deg);white-space:nowrap;">7.5852</div><div style="position:absolute;left:377.2px;top:480.5px;width:300px;height:18px;line-height:18px;text-align:right;font-size:15px;color:#8e9ba6;transform-origin:100% 50%;transform:rotate(-45deg);white-space:nowrap;">3.7926</div><div style="position:absolute;left:402.4px;top:480.5px;width:300px;height:18px;line-height:18px;text-align:right;font-size:15px;color:#8e9ba6;transform-origin:100% 50%;transform:rotate(-45deg);white-space:nowrap;">2.5284</div><div style="position:absolute;left:427.5px;top:480.5px;width:300px;height:18px;line-height:18px;text-align:right;font-size:15px;color:#8e9ba6;transform-origin:100% 50%;transform:rotate(-45deg);white-space:nowrap;">1.8963</div><div style="position:absolute;left:452.6px;top:480.5px;width:300px;height:18px;line-height:18px;text-align:right;font-size:15px;color:#8e9ba6;transform-origin:100% 50%;transform:rotate(-45deg);white-space:nowrap;">1.517</div><div style="position:absolute;left:477.7px;top:480.5px;width:300px;height:18px;line-height:18px;text-align:right;font-size:15px;color:#8e9ba6;transform-origin:100% 50%;transform:rotate(-45deg);white-space:nowrap;">1.2642</div><div style="position:absolute;left:502.8px;top:480.5px;width:300px;height:18px;line-height:18px;text-align:right;font-size:15px;color:#8e9ba6;transform-origin:100% 50%;transform:rotate(-45deg);white-space:nowrap;">1.0836</div><div style="position:absolute;left:528.0px;top:480.5px;width:300px;height:18px;line-height:18px;text-align:right;font-size:15px;color:#8e9ba6;transform-origin:100% 50%;transform:rotate(-45deg);white-space:nowrap;">0.9482</div><div style="position:absolute;left:553.1px;top:480.5px;width:300px;height:18px;line-height:18px;text-align:right;font-size:15px;color:#8e9ba6;transform-origin:100% 50%;transform:rotate(-45deg);white-space:nowrap;">0.8428</div><div style="position:absolute;left:578.2px;top:480.5px;width:300px;height:18px;line-height:18px;text-align:right;font-size:15px;color:#8e9ba6;transform-origin:100% 50%;transform:rotate(-45deg);white-space:nowrap;">0.7585</div><div style="position:absolute;left:603.3px;top:480.5px;width:300px;height:18px;line-height:18px;text-align:right;font-size:15px;color:#8e9ba6;transform-origin:100% 50%;transform:rotate(-45deg);white-space:nowrap;">0.6896</div><div style="position:absolute;left:628.4px;top:480.5px;width:300px;height:18px;line-height:18px;text-align:right;font-size:15px;color:#8e9ba6;transform-origin:100% 50%;transform:rotate(-45deg);white-space:nowrap;">0.6321</div><div style="position:absolute;left:653.6px;top:480.5px;width:300px;height:18px;line-height:18px;text-align:right;font-size:15px;color:#8e9ba6;transform-origin:100% 50%;transform:rotate(-45deg);white-space:nowrap;">0.5835</div><div style="position:absolute;left:678.7px;top:480.5px;width:300px;height:18px;line-height:18px;text-align:right;font-size:15px;color:#8e9ba6;transform-origin:100% 50%;transform:rotate(-45deg);white-space:nowrap;">0.5418</div><div style="position:absolute;left:703.8px;top:480.5px;width:300px;height:18px;line-height:18px;text-align:right;font-size:15px;color:#8e9ba6;transform-origin:100% 50%;transform:rotate(-45deg);white-space:nowrap;">0.5057</div><div style="position:absolute;left:728.9px;top:480.5px;width:300px;height:18px;line-height:18px;text-align:right;font-size:15px;color:#8e9ba6;transform-origin:100% 50%;transform:rotate(-45deg);white-space:nowrap;">0.4741</div><div style="position:absolute;left:754.0px;top:480.5px;width:300px;height:18px;line-height:18px;text-align:right;font-size:15px;color:#8e9ba6;transform-origin:100% 50%;transform:rotate(-45deg);white-space:nowrap;">0.4462</div><div style="position:absolute;left:779.2px;top:480.5px;width:300px;height:18px;line-height:18px;text-align:right;font-size:15px;color:#8e9ba6;transform-origin:100% 50%;transform:rotate(-45deg);white-space:nowrap;">0.4214</div><div style="position:absolute;left:804.3px;top:480.5px;width:300px;height:18px;line-height:18px;text-align:right;font-size:15px;color:#8e9ba6;transform-origin:100% 50%;transform:rotate(-45deg);white-space:nowrap;">0.3992</div><div style="position:absolute;left:829.4px;top:480.5px;width:300px;height:18px;line-height:18px;text-align:right;font-size:15px;color:#8e9ba6;transform-origin:100% 50%;transform:rotate(-45deg);white-space:nowrap;">0.3793</div><div style="position:absolute;left:854.5px;top:480.5px;width:300px;height:18px;line-height:18px;text-align:right;font-size:15px;color:#8e9ba6;transform-origin:100% 50%;transform:rotate(-45deg);white-space:nowrap;">0.3612</div><div style="position:absolute;left:879.6px;top:480.5px;width:300px;height:18px;line-height:18px;text-align:right;font-size:15px;color:#8e9ba6;transform-origin:100% 50%;transform:rotate(-45deg);white-space:nowrap;">0.3448</div><div style="position:absolute;left:904.8px;top:480.5px;width:300px;height:18px;line-height:18px;text-align:right;font-size:15px;color:#8e9ba6;transform-origin:100% 50%;transform:rotate(-45deg);white-space:nowrap;">0.3298</div><div style="position:absolute;left:929.9px;top:480.5px;width:300px;height:18px;line-height:18px;text-align:right;font-size:15px;color:#8e9ba6;transform-origin:100% 50%;transform:rotate(-45deg);white-space:nowrap;">0.316</div><div style="position:absolute;left:955.0px;top:480.5px;width:300px;height:18px;line-height:18px;text-align:right;font-size:15px;color:#8e9ba6;transform-origin:100% 50%;transform:rotate(-45deg);white-space:nowrap;">0.3034</div><div style="position:absolute;left:980.1px;top:480.5px;width:300px;height:18px;line-height:18px;text-align:right;font-size:15px;color:#8e9ba6;transform-origin:100% 50%;transform:rotate(-45deg);white-space:nowrap;">0.2917</div><div style="position:absolute;left:1005.2px;top:480.5px;width:300px;height:18px;line-height:18px;text-align:right;font-size:15px;color:#8e9ba6;transform-origin:100% 50%;transform:rotate(-45deg);white-space:nowrap;">0.2809</div><div style="position:absolute;left:1030.4px;top:480.5px;width:300px;height:18px;line-height:18px;text-align:right;font-size:15px;color:#8e9ba6;transform-origin:100% 50%;transform:rotate(-45deg);white-space:nowrap;">0.2709</div><div style="position:absolute;left:1055.5px;top:480.5px;width:300px;height:18px;line-height:18px;text-align:right;font-size:15px;color:#8e9ba6;transform-origin:100% 50%;transform:rotate(-45deg);white-space:nowrap;">0.2616</div><div style="position:absolute;left:1080.6px;top:480.5px;width:300px;height:18px;line-height:18px;text-align:right;font-size:15px;color:#8e9ba6;transform-origin:100% 50%;transform:rotate(-45deg);white-space:nowrap;">0.2528</div><div style="position:absolute;left:1105.7px;top:480.5px;width:300px;height:18px;line-height:18px;text-align:right;font-size:15px;color:#8e9ba6;transform-origin:100% 50%;transform:rotate(-45deg);white-space:nowrap;">0.2447</div><div style="position:absolute;left:1130.8px;top:480.5px;width:300px;height:18px;line-height:18px;text-align:right;font-size:15px;color:#8e9ba6;transform-origin:100% 50%;transform:rotate(-45deg);white-space:nowrap;">0.237</div><div style="position:absolute;left:1156.0px;top:480.5px;width:300px;height:18px;line-height:18px;text-align:right;font-size:15px;color:#8e9ba6;transform-origin:100% 50%;transform:rotate(-45deg);white-space:nowrap;">0.2298</div><div style="position:absolute;left:1181.1px;top:480.5px;width:300px;height:18px;line-height:18px;text-align:right;font-size:15px;color:#8e9ba6;transform-origin:100% 50%;transform:rotate(-45deg);white-space:nowrap;">0.2231</div><div style="position:absolute;left:1206.2px;top:480.5px;width:300px;height:18px;line-height:18px;text-align:right;font-size:15px;color:#8e9ba6;transform-origin:100% 50%;transform:rotate(-45deg);white-space:nowrap;">0.2167</div><div style="position:absolute;left:1231.3px;top:480.5px;width:300px;height:18px;line-height:18px;text-align:right;font-size:15px;color:#8e9ba6;transform-origin:100% 50%;transform:rotate(-45deg);white-space:nowrap;">0.2107</div><div style="position:absolute;left:1256.4px;top:480.5px;width:300px;height:18px;line-height:18px;text-align:right;font-size:15px;color:#8e9ba6;transform-origin:100% 50%;transform:rotate(-45deg);white-space:nowrap;">0.205</div><div style="position:absolute;left:1281.6px;top:480.5px;width:300px;height:18px;line-height:18px;text-align:right;font-size:15px;color:#8e9ba6;transform-origin:100% 50%;transform:rotate(-45deg);white-space:nowrap;">0.1996</div><div style="position:absolute;left:1306.7px;top:480.5px;width:300px;height:18px;line-height:18px;text-align:right;font-size:15px;color:#8e9ba6;transform-origin:100% 50%;transform:rotate(-45deg);white-space:nowrap;">0.1945</div><div style="position:absolute;left:1331.8px;top:480.5px;width:300px;height:18px;line-height:18px;text-align:right;font-size:15px;color:#8e9ba6;transform-origin:100% 50%;transform:rotate(-45deg);white-space:nowrap;">0.1896</div><div style="position:absolute;left:1356.9px;top:480.5px;width:300px;height:18px;line-height:18px;text-align:right;font-size:15px;color:#8e9ba6;transform-origin:100% 50%;transform:rotate(-45deg);white-space:nowrap;">0.185</div><div style="position:absolute;left:1382.0px;top:480.5px;width:300px;height:18px;line-height:18px;text-align:right;font-size:15px;color:#8e9ba6;transform-origin:100% 50%;transform:rotate(-45deg);white-space:nowrap;">0.1806</div><div style="position:absolute;left:1407.2px;top:480.5px;width:300px;height:18px;line-height:18px;text-align:right;font-size:15px;color:#8e9ba6;transform-origin:100% 50%;transform:rotate(-45deg);white-space:nowrap;">0.1764</div><div style="position:absolute;left:1432.3px;top:480.5px;width:300px;height:18px;line-height:18px;text-align:right;font-size:15px;color:#8e9ba6;transform-origin:100% 50%;transform:rotate(-45deg);white-space:nowrap;">0.1724</div><div style="position:absolute;left:1457.4px;top:480.5px;width:300px;height:18px;line-height:18px;text-align:right;font-size:15px;color:#8e9ba6;transform-origin:100% 50%;transform:rotate(-45deg);white-space:nowrap;">0.1686</div><div style="position:absolute;left:1482.5px;top:480.5px;width:300px;height:18px;line-height:18px;text-align:right;font-size:15px;color:#8e9ba6;transform-origin:100% 50%;transform:rotate(-45deg);white-space:nowrap;">0.1649</div><div style="position:absolute;left:1507.6px;top:480.5px;width:300px;height:18px;line-height:18px;text-align:right;font-size:15px;color:#8e9ba6;transform-origin:100% 50%;transform:rotate(-45deg);white-space:nowrap;">0.1614</div><div style="position:absolute;left:1532.8px;top:480.5px;width:300px;height:18px;line-height:18px;text-align:right;font-size:15px;color:#8e9ba6;transform-origin:100% 50%;transform:rotate(-45deg);white-space:nowrap;">0.158</div><div style="position:absolute;left:1557.9px;top:480.5px;width:300px;height:18px;line-height:18px;text-align:right;font-size:15px;color:#8e9ba6;transform-origin:100% 50%;transform:rotate(-45deg);white-space:nowrap;">0.1548</div><div style="position:absolute;left:1583.0px;top:480.5px;width:300px;height:18px;line-height:18px;text-align:right;font-size:15px;color:#8e9ba6;transform-origin:100% 50%;transform:rotate(-45deg);white-space:nowrap;">0.1517</div><div style="position:absolute;left:1608.1px;top:480.5px;width:300px;height:18px;line-height:18px;text-align:right;font-size:15px;color:#8e9ba6;transform-origin:100% 50%;transform:rotate(-45deg);white-space:nowrap;">0.1487</div><div style="position:absolute;left:1633.2px;top:480.5px;width:300px;height:18px;line-height:18px;text-align:right;font-size:15px;color:#8e9ba6;transform-origin:100% 50%;transform:rotate(-45deg);white-space:nowrap;">0.1459</div><div style="position:absolute;left:1658.4px;top:480.5px;width:300px;height:18px;line-height:18px;text-align:right;font-size:15px;color:#8e9ba6;transform-origin:100% 50%;transform:rotate(-45deg);white-space:nowrap;">0.1431</div><div style="position:absolute;left:1683.5px;top:480.5px;width:300px;height:18px;line-height:18px;text-align:right;font-size:15px;color:#8e9ba6;transform-origin:100% 50%;transform:rotate(-45deg);white-space:nowrap;">0.1405</div><div style="position:absolute;left:1708.6px;top:480.5px;width:300px;height:18px;line-height:18px;text-align:right;font-size:15px;color:#8e9ba6;transform-origin:100% 50%;transform:rotate(-45deg);white-space:nowrap;">0.1379</div><div style="position:absolute;left:1733.7px;top:480.5px;width:300px;height:18px;line-height:18px;text-align:right;font-size:15px;color:#8e9ba6;transform-origin:100% 50%;transform:rotate(-45deg);white-space:nowrap;">0.1354</div><div style="position:absolute;left:1758.8px;top:480.5px;width:300px;height:18px;line-height:18px;text-align:right;font-size:15px;color:#8e9ba6;transform-origin:100% 50%;transform:rotate(-45deg);white-space:nowrap;">0.1331</div><div style="position:absolute;left:1784.0px;top:480.5px;width:300px;height:18px;line-height:18px;text-align:right;font-size:15px;color:#8e9ba6;transform-origin:100% 50%;transform:rotate(-45deg);white-space:nowrap;">0.1308</div><div style="position:absolute;left:1809.1px;top:480.5px;width:300px;height:18px;line-height:18px;text-align:right;font-size:15px;color:#8e9ba6;transform-origin:100% 50%;transform:rotate(-45deg);white-space:nowrap;">0.1286</div><div style="position:absolute;left:1834.2px;top:480.5px;width:300px;height:18px;line-height:18px;text-align:right;font-size:15px;color:#8e9ba6;transform-origin:100% 50%;transform:rotate(-45deg);white-space:nowrap;">0.1264</div><div style="position:absolute;left:1859.3px;top:480.5px;width:300px;height:18px;line-height:18px;text-align:right;font-size:15px;color:#8e9ba6;transform-origin:100% 50%;transform:rotate(-45deg);white-space:nowrap;">0.1244</div><div style="position:absolute;left:1884.4px;top:480.5px;width:300px;height:18px;line-height:18px;text-align:right;font-size:15px;color:#8e9ba6;transform-origin:100% 50%;transform:rotate(-45deg);white-space:nowrap;">0.1223</div><div style="position:absolute;left:1909.6px;top:480.5px;width:300px;height:18px;line-height:18px;text-align:right;font-size:15px;color:#8e9ba6;transform-origin:100% 50%;transform:rotate(-45deg);white-space:nowrap;">0.1204</div><div style="position:absolute;left:1934.7px;top:480.5px;width:300px;height:18px;line-height:18px;text-align:right;font-size:15px;color:#8e9ba6;transform-origin:100% 50%;transform:rotate(-45deg);white-space:nowrap;">0.1185</div><div style="position:absolute;left:1959.8px;top:480.5px;width:300px;height:18px;line-height:18px;text-align:right;font-size:15px;color:#8e9ba6;transform-origin:100% 50%;transform:rotate(-45deg);white-space:nowrap;">0.1167</div><div style="position:absolute;left:1984.9px;top:480.5px;width:300px;height:18px;line-height:18px;text-align:right;font-size:15px;color:#8e9ba6;transform-origin:100% 50%;transform:rotate(-45deg);white-space:nowrap;">0.1149</div><div style="position:absolute;left:2010.0px;top:480.5px;width:300px;height:18px;line-height:18px;text-align:right;font-size:15px;color:#8e9ba6;transform-origin:100% 50%;transform:rotate(-45deg);white-space:nowrap;">0.1132</div><div style="position:absolute;left:2035.2px;top:480.5px;width:300px;height:18px;line-height:18px;text-align:right;font-size:15px;color:#8e9ba6;transform-origin:100% 50%;transform:rotate(-45deg);white-space:nowrap;">0.1115</div><div style="position:absolute;left:2060.3px;top:480.5px;width:300px;height:18px;line-height:18px;text-align:right;font-size:15px;color:#8e9ba6;transform-origin:100% 50%;transform:rotate(-45deg);white-space:nowrap;">0.1099</div><div style="position:absolute;left:2085.4px;top:480.5px;width:300px;height:18px;line-height:18px;text-align:right;font-size:15px;color:#8e9ba6;transform-origin:100% 50%;transform:rotate(-45deg);white-space:nowrap;">0.1084</div><div style="position:absolute;left:2110.5px;top:480.5px;width:300px;height:18px;line-height:18px;text-align:right;font-size:15px;color:#8e9ba6;transform-origin:100% 50%;transform:rotate(-45deg);white-space:nowrap;">0.1068</div><div style="position:absolute;left:2135.6px;top:480.5px;width:300px;height:18px;line-height:18px;text-align:right;font-size:15px;color:#8e9ba6;transform-origin:100% 50%;transform:rotate(-45deg);white-space:nowrap;">0.1053</div><div style="position:absolute;left:2160.8px;top:480.5px;width:300px;height:18px;line-height:18px;text-align:right;font-size:15px;color:#8e9ba6;transform-origin:100% 50%;transform:rotate(-45deg);white-space:nowrap;">0.1039</div><div style="position:absolute;left:2185.9px;top:480.5px;width:300px;height:18px;line-height:18px;text-align:right;font-size:15px;color:#8e9ba6;transform-origin:100% 50%;transform:rotate(-45deg);white-space:nowrap;">0.1025</div><div style="position:absolute;left:2211.0px;top:480.5px;width:300px;height:18px;line-height:18px;text-align:right;font-size:15px;color:#8e9ba6;transform-origin:100% 50%;transform:rotate(-45deg);white-space:nowrap;">0.1011</div><div style="position:absolute;right:40px;text-align:right;top:353.0px;line-height:20px;font-size:15.5px;color:#a02a96;font-weight:normal;white-space:nowrap;">Press FFT (day)</div><div style="position:absolute;left:645px;top:549px;width:1896px;height:186px;background:#f8f8f8;"></div><svg style="position:absolute;left:0;top:0" width="2556" height="1263"><rect x="643.6" y="549" width="2" height="186" fill="#e18c62"/><rect x="643.6" y="747" width="2" height="187" fill="#5cb88a"/><rect x="645" y="933" width="1895" height="1.5" fill="#ccd6eb"/><polyline points="645.0,666.9 647.1,669.0 650.0,664.0 652.8,668.3 655.0,662.6 657.8,647.6 660.7,646.9 663.5,643.4 666.4,646.9 668.5,646.2 671.4,646.9 673.5,639.1 676.3,636.2 678.5,630.5 681.3,631.2 684.2,622.7 686.3,617.0 689.2,622.7 691.3,635.5 694.2,664.0 697.0,670.4 699.9,561.4 702.7,561.4 704.9,636.9 707.7,645.5 709.8,658.3 714.8,667.6 717.7,661.9 720.5,661.9 722.7,639.8 725.5,645.5 728.4,632.7 730.5,632.7 733.4,637.7 738.3,630.5 741.2,622.7 744.0,611.3 746.2,586.3 751.2,574.9 754.0,612.7 759.0,722.5 761.9,713.2 764.7,718.2 769.7,617.0 772.6,626.3 774.7,622.0 777.5,630.5 780.4,627.7 782.5,643.4 785.4,649.8 789.7,653.3 793.2,654.0 795.4,638.4 798.2,632.0 801.1,609.9 803.2,605.6 806.0,592.8 808.2,584.9 811.0,613.4 813.9,594.2 818.9,652.6 823.9,658.3 826.7,666.2 829.6,665.5 831.7,670.4 834.6,667.6 836.7,668.3 839.5,674.7 842.4,666.9 846.0,648.3 850.2,634.1 855.2,630.5 858.1,624.1 860.9,623.4 863.1,629.8 866.6,615.6 868.1,608.4 870.6,590.6 873.5,619.1 875.9,606.3 878.7,614.1 880.9,646.9 883.7,658.3 886.6,662.6 889.4,659.0 891.6,659.7 894.4,668.3 896.6,673.3 902.3,659.7 904.4,644.1 907.2,641.2 910.1,635.5 913.7,626.3 916.5,622.7 919.4,623.4 922.9,629.8 927.9,624.1 932.9,604.2 935.8,621.3 938.6,619.8 945.7,651.2 948.6,653.3 951.4,647.6 954.3,664.7 957.1,664.0 960.0,674.0 964.3,675.4 969.3,650.5 972.1,649.8 975.0,644.8 982.1,622.0 984.9,621.3 989.9,604.9 992.8,602.7 995.6,588.5 997.8,601.3 1000.6,609.9 1003.5,623.4 1005.6,649.8 1010.6,667.6 1016.3,661.9 1021.3,671.2 1024.1,663.3 1027.0,663.3 1032.0,649.1 1034.1,651.2 1037.7,639.1 1042.7,627.7 1046.9,626.3 1052.6,615.6 1054.8,599.9 1057.6,600.6 1060.5,607.7 1062.9,590.6 1068.3,642.6 1070.7,661.2 1073.0,656.2 1076.2,660.5 1079.0,660.5 1081.1,666.9 1086.1,661.2 1089.0,662.6 1091.8,659.7 1094.0,646.2 1099.0,641.2 1101.8,642.6 1106.8,624.8 1109.6,624.8 1112.5,619.1 1117.5,614.1 1122.5,592.8 1125.3,591.3 1128.2,609.9 1130.3,659.7 1132.5,664.0 1135.7,673.3 1138.2,669.7 1141.0,654.8 1144.6,656.9 1148.8,659.7 1154.5,654.0 1157.4,649.8 1160.2,643.4 1163.8,642.6 1167.4,639.1 1170.2,637.7 1175.2,624.8 1179.5,615.6 1182.3,595.6 1187.3,577.8 1190.2,604.2 1195.2,670.4 1197.3,675.4 1200.4,684.0 1203.7,672.6 1208.7,654.0 1211.6,662.6 1215.8,666.9 1218.0,661.2 1223.7,636.9 1228.7,623.4 1231.5,622.0 1234.4,627.7 1238.6,611.3 1241.5,609.2 1244.3,617.7 1247.2,615.6 1250.0,578.5 1252.9,611.3 1260.0,657.6 1262.9,651.9 1265.7,675.4 1268.6,681.8 1270.7,669.7 1273.6,677.6 1278.6,656.9 1281.4,652.6 1284.3,645.5 1288.5,632.7 1293.5,613.4 1296.4,625.5 1299.2,629.1 1302.1,624.1 1304.2,609.2 1307.1,604.2 1309.9,617.7 1312.8,614.9 1315.6,618.4 1317.7,624.8 1320.6,641.9 1322.7,651.9 1325.6,649.1 1327.7,649.8 1330.6,668.3 1332.7,651.9 1335.6,666.2 1338.4,659.7 1341.3,661.9 1343.4,650.5 1345.5,649.8 1348.4,641.9 1351.2,649.8 1354.1,647.6 1359.1,638.4 1361.9,629.8 1364.8,618.4 1366.9,613.4 1369.1,599.9 1371.9,607.0 1374.5,592.8 1382.6,643.4 1385.2,646.2 1387.6,669.7 1389.7,663.3 1392.6,668.3 1395.4,671.9 1398.3,672.6 1400.4,676.1 1403.3,665.5 1407.5,652.6 1413.2,634.1 1416.1,630.5 1418.9,634.1 1421.1,627.7 1423.9,615.6 1426.8,607.0 1431.8,594.9 1433.9,584.2 1436.8,627.7 1439.6,631.2 1442.5,653.3 1445.3,654.8 1447.5,648.3 1449.6,629.1 1452.4,668.3 1455.0,681.1 1460.3,659.7 1463.1,655.5 1465.3,643.4 1468.1,637.7 1471.0,636.2 1473.1,637.7 1475.2,611.3 1478.4,602.7 1480.9,617.0 1486.4,632.0 1488.8,629.1 1491.6,622.0 1494.5,622.0 1499.2,609.9 1503.8,639.1 1506.6,664.0 1512.3,655.5 1514.4,655.5 1517.3,653.8 1520.1,665.7 1525.1,666.9 1528.0,662.6 1530.8,655.5 1533.0,644.1 1535.1,641.2 1538.7,643.4 1541.5,639.8 1545.8,632.0 1548.6,622.7 1551.5,617.7 1555.8,604.2 1561.5,579.9 1564.3,599.9 1566.5,660.5 1569.3,669.7 1571.9,680.4 1574.3,680.4 1576.4,656.2 1579.3,663.3 1582.1,654.0 1587.8,662.6 1590.0,650.5 1592.8,644.1 1597.8,631.2 1600.0,632.0 1605.7,638.4 1610.7,630.5 1615.6,622.0 1618.5,607.0 1623.5,560.0 1626.3,591.3 1628.5,656.9 1631.3,681.8 1634.2,686.1 1636.3,669.7 1639.9,661.2 1642.0,659.7 1647.0,663.3 1649.9,659.7 1654.8,642.6 1659.8,630.5 1662.7,629.8 1665.5,626.3 1667.7,628.4 1670.5,624.1 1673.4,632.0 1676.2,632.0 1679.1,628.4 1683.3,614.9 1686.2,613.4 1688.8,606.3 1691.2,639.1 1694.0,650.5 1697.6,651.9 1701.9,656.9 1704.4,664.0 1706.9,662.6 1709.7,664.0 1711.9,657.6 1714.7,664.7 1724.7,644.1 1727.5,639.8 1733.2,623.4 1741.8,590.6 1743.2,589.2 1746.1,589.2 1748.6,582.8 1751.0,598.5 1753.2,629.8 1756.0,648.3 1758.2,649.8 1763.2,667.6 1766.7,671.2 1769.3,675.4 1771.7,672.6 1774.6,670.4 1776.7,662.6 1780.3,647.6 1787.4,620.6 1790.2,614.9 1792.4,614.1 1795.2,656.2 1798.1,652.6 1808.1,579.2 1813.1,630.5 1818.8,644.8 1821.3,658.3 1823.7,652.6 1826.6,659.7 1829.4,658.3 1831.6,666.9 1833.7,663.3 1836.6,665.5 1842.3,657.6 1844.4,648.3 1847.3,645.5 1851.5,642.6 1855.1,637.7 1857.9,635.5 1862.9,615.6 1870.5,567.8 1873.2,575.7 1875.8,623.4 1880.8,656.2 1885.7,655.5 1891.2,679.7 1893.6,676.1 1898.6,672.6 1901.4,671.9 1904.3,652.6 1906.4,651.2 1912.1,643.4 1915.0,624.1 1917.1,623.4 1920.7,626.3 1922.8,626.3 1927.1,611.3 1932.8,577.1 1937.8,616.3 1940.6,648.3 1942.8,652.6 1945.6,662.6 1948.5,668.3 1950.6,657.6 1953.4,658.3 1957.0,663.3 1959.2,664.0 1962.0,659.7 1964.1,661.9 1966.3,661.2 1969.1,644.8 1974.1,644.8 1977.0,646.9 1979.8,654.0 1982.0,631.2 1986.9,617.7 1989.8,612.0 1994.8,606.3 1997.6,606.3 2000.5,619.8 2002.9,622.0 2006.2,632.0 2008.3,635.5 2010.5,656.2 2013.3,657.6 2016.2,669.0 2018.3,661.2 2021.2,641.2 2024.0,653.3 2026.9,653.3 2029.0,650.5 2031.1,653.3 2034.0,645.5 2036.8,644.8 2041.1,635.5 2044.0,635.5 2050.4,624.1 2057.5,608.4 2060.3,610.6 2062.5,622.7 2068.2,634.1 2070.3,646.2 2073.2,637.7 2078.2,661.9 2081.0,664.0 2083.6,670.4 2086.0,654.8 2088.9,651.2 2096.7,634.1 2098.8,634.8 2101.7,640.5 2105.2,640.5 2107.4,638.4 2111.7,625.5 2114.5,621.3 2119.5,589.2 2122.3,622.7 2127.3,643.4 2130.2,641.2 2132.3,651.2 2135.2,644.1 2138.0,645.5 2140.9,655.5 2143.0,655.5 2145.9,665.5 2148.3,649.8 2150.9,658.3 2153.0,655.5 2155.8,639.8 2158.7,636.9 2163.7,631.2 2166.5,632.7 2170.1,639.1 2172.2,639.1 2174.4,635.5 2181.9,607.7 2184.4,622.0 2187.2,614.9 2193.6,654.8 2197.9,649.8 2200.7,649.8 2202.9,655.5 2205.0,652.6 2207.9,656.9 2210.7,671.2 2215.0,664.7 2217.8,611.3 2220.0,609.9 2221.0,608.4 2223.5,636.2 2227.8,639.8 2231.4,639.1 2234.2,628.4 2237.1,622.7 2244.2,597.7 2247.8,617.0 2254.9,654.0 2257.7,659.7 2259.9,659.0 2262.7,656.2 2264.9,656.2 2267.7,651.9 2270.6,661.1 2272.7,657.6 2275.6,658.3 2278.4,646.9 2280.5,643.3 2283.4,641.2 2286.2,635.5 2288.4,632.6 2291.2,624.1 2296.2,621.2 2298.8,631.2 2301.2,624.8 2306.6,583.5 2309.0,595.6 2314.3,657.6 2316.9,641.9 2319.7,660.4 2322.2,655.4 2324.7,665.4 2327.6,665.4 2330.1,663.3 2332.6,674.0 2335.4,670.4 2338.3,656.2 2341.1,649.7 2343.2,646.9 2345.8,640.5 2348.2,644.0 2350.4,629.8 2353.2,625.5 2358.2,627.7 2363.2,611.3 2368.9,589.9 2381.7,665.4 2384.6,655.4 2387.4,653.3 2389.6,655.4 2392.4,655.4 2394.5,668.3 2400.2,664.7 2402.4,640.5 2405.2,641.9 2407.4,641.9 2410.2,634.8 2413.1,635.5 2415.9,640.5 2418.0,632.6 2423.0,626.9 2425.2,621.2 2431.3,588.5 2433.7,609.8 2435.9,603.4 2444.4,664.0 2447.3,659.0 2449.4,661.1 2452.2,669.7 2455.1,668.3 2458.7,662.6 2462.2,661.9 2465.1,649.7 2470.1,648.3 2472.9,649.7 2477.2,632.6 2480.0,631.9 2482.9,628.4 2485.7,622.0 2488.6,618.4 2493.6,588.5 2496.4,617.7 2499.3,622.7 2501.4,640.5 2504.3,643.3 2506.4,680.4 2509.2,679.7 2511.7,621.2 2514.2,651.9 2517.1,658.3 2519.9,654.0 2522.5,659.0 2524.9,651.2 2529.9,652.6 2537.7,606.3 2540.6,619.1" stroke="#d2622e" stroke-width="1.45" fill="none" stroke-linejoin="round"/><polyline points="645.3,817.2 647.5,832.3 649.8,848.1 652.8,851.1 655.8,849.6 658.1,854.1 660.3,861.6 663.3,851.8 666.3,860.1 670.1,865.4 673.4,873.6 678.4,861.6 681.4,851.1 683.6,848.8 686.6,839.8 688.9,842.8 691.9,837.5 694.5,802.9 699.4,878.9 701.7,863.9 704.7,799.9 706.9,805.2 710.0,815.0 712.2,817.2 715.2,818.7 717.5,829.2 720.5,852.6 722.7,857.8 725.5,862.3 728.0,853.3 730.6,846.5 733.3,856.3 736.3,854.8 739.3,855.6 741.5,858.6 743.8,873.6 746.1,875.9 749.1,879.6 751.3,864.6 756.6,780.4 759.3,774.3 761.9,793.9 764.6,844.3 767.1,841.3 769.7,805.9 776.9,862.3 779.9,865.4 782.6,869.9 785.2,866.9 788.2,859.3 790.4,848.8 793.2,848.8 795.7,859.3 798.0,858.6 801.0,866.1 804.7,870.6 808.5,874.4 810.8,867.6 813.8,887.2 819.0,809.7 822.0,805.9 824.3,796.9 826.6,796.2 829.6,800.7 831.8,827.0 834.8,825.5 837.1,818.0 840.1,833.0 842.3,865.4 844.6,874.4 849.9,851.1 852.9,851.1 855.4,849.6 860.4,856.3 862.7,855.6 865.7,866.1 867.9,867.6 870.6,877.4 873.6,860.8 875.9,866.9 880.7,814.2 883.7,806.7 886.7,821.7 889.7,813.5 892.0,810.4 896.5,830.0 899.1,819.5 901.8,827.7 904.8,841.3 907.0,860.8 910.0,863.1 912.3,845.0 914.6,836.8 917.6,833.8 920.6,844.3 922.8,859.3 928.1,869.1 930.4,878.1 933.1,883.4 935.6,867.6 938.2,878.1 943.1,827.7 951.1,775.1 954.1,805.2 958.9,839.0 961.8,839.0 964.8,843.5 967.0,867.6 972.0,887.2 974.6,875.1 979.8,856.3 982.1,859.3 985.1,850.3 990.4,864.6 992.6,864.6 995.3,879.6 998.3,854.8 1000.9,857.8 1003.1,818.0 1005.9,802.9 1008.4,813.5 1011.4,806.7 1013.7,818.0 1016.4,845.8 1018.9,845.0 1021.6,811.2 1024.2,833.8 1026.9,839.8 1029.5,860.1 1031.7,858.6 1034.7,860.5 1037.0,856.3 1039.5,844.3 1042.3,851.1 1045.0,855.6 1047.5,840.5 1050.5,847.3 1053.1,851.1 1055.8,860.8 1058.1,864.6 1060.3,865.4 1063.0,869.1 1066.3,830.8 1070.8,788.6 1073.9,810.4 1076.1,811.9 1078.7,856.3 1083.6,812.7 1086.6,833.8 1091.6,853.3 1094.2,851.1 1096.4,853.0 1099.4,849.6 1101.7,856.3 1104.4,860.1 1107.2,852.6 1109.7,859.3 1114.9,851.1 1117.5,864.6 1122.7,878.9 1125.3,889.4 1130.3,808.9 1133.3,797.7 1136.0,793.1 1140.8,822.5 1146.1,833.0 1149.1,829.2 1151.3,839.8 1154.0,832.3 1156.6,845.8 1158.9,869.9 1161.9,874.4 1164.9,866.1 1167.1,863.1 1169.4,854.8 1171.9,865.4 1174.9,851.1 1177.7,869.1 1180.7,877.4 1184.4,899.2 1187.9,903.7 1192.7,782.6 1195.4,766.1 1198.0,759.3 1203.2,823.2 1205.9,827.7 1209.3,842.8 1211.2,845.8 1213.8,841.3 1216.8,849.6 1221.3,888.7 1226.6,842.8 1230.3,848.8 1234.8,852.6 1239.3,865.4 1242.3,864.6 1244.6,860.8 1249.9,836.8 1254.8,851.1 1257.7,828.5 1260.4,836.8 1265.4,815.7 1267.9,836.0 1273.6,815.0 1276.0,831.5 1278.6,862.3 1281.3,857.8 1284.3,854.8 1288.8,844.3 1291.8,848.8 1294.1,848.8 1296.8,839.8 1299.3,842.8 1301.6,858.6 1304.3,857.1 1306.9,871.4 1309.6,875.1 1312.4,871.4 1319.9,793.1 1322.7,803.7 1325.4,826.2 1327.9,832.3 1330.5,820.2 1332.9,831.5 1335.7,818.7 1340.4,854.1 1346.0,849.6 1349.0,853.3 1351.2,863.1 1353.5,865.4 1356.5,860.8 1361.8,858.6 1364.8,860.1 1369.3,867.6 1372.0,862.0 1374.6,867.2 1377.1,855.6 1382.1,815.7 1385.1,811.9 1387.8,805.2 1390.4,818.7 1393.1,813.5 1395.3,837.5 1398.2,842.0 1400.6,851.1 1403.1,848.1 1405.9,839.0 1408.4,837.5 1411.1,830.0 1413.4,827.0 1415.9,837.5 1418.6,861.6 1421.6,868.4 1425.0,865.4 1427.7,866.9 1431.7,872.9 1434.4,875.1 1436.7,840.5 1439.2,842.0 1441.5,820.2 1445.0,815.0 1447.2,846.5 1449.8,837.5 1452.5,809.7 1455.0,814.2 1458.1,827.0 1460.3,840.5 1462.6,829.2 1465.3,831.5 1467.8,842.8 1470.5,856.3 1473.4,854.8 1475.8,827.0 1478.4,809.7 1496.4,900.0 1499.4,890.9 1502.4,856.3 1506.6,818.7 1510.0,824.7 1512.2,833.0 1515.2,829.2 1517.5,817.2 1520.2,815.0 1522.7,827.7 1525.5,830.8 1530.3,850.3 1533.0,845.0 1535.5,848.8 1538.1,857.1 1540.8,859.3 1543.8,860.1 1546.5,863.1 1549.1,870.6 1551.3,873.6 1554.0,879.6 1558.9,906.7 1561.9,904.5 1566.7,790.1 1571.6,763.1 1574.6,771.3 1576.9,826.2 1582.2,842.0 1584.7,836.0 1587.4,853.3 1589.7,850.3 1590.3,849.6 1592.5,851.1 1597.8,835.3 1600.8,847.3 1603.1,848.8 1605.3,846.5 1608.3,850.3 1612.8,869.1 1615.8,875.1 1621.1,899.2 1624.1,897.7 1628.6,806.7 1631.3,788.6 1634.3,786.4 1636.9,829.2 1639.2,822.5 1641.9,836.0 1644.9,835.3 1648.2,840.5 1651.9,845.8 1654.2,847.3 1657.2,842.8 1661.7,840.5 1665.5,841.3 1668.5,848.8 1670.8,853.3 1673.8,855.6 1681.3,870.6 1683.5,878.9 1688.8,872.9 1691.1,813.5 1694.1,815.0 1696.6,829.2 1701.6,795.4 1703.9,805.2 1706.9,811.9 1709.6,830.0 1712.1,825.5 1717.1,874.4 1721.9,862.3 1724.9,847.3 1727.6,852.6 1730.2,849.6 1732.9,850.3 1735.4,857.1 1738.2,861.6 1740.7,862.3 1743.0,869.1 1748.2,872.9 1751.2,856.3 1755.8,842.8 1759.2,836.8 1763.7,805.2 1766.3,823.2 1769.3,808.9 1774.6,827.0 1776.8,853.3 1779.8,859.3 1782.1,871.4 1784.8,872.1 1792.3,921.8 1795.2,795.4 1797.9,804.4 1801.6,821.7 1807.7,844.3 1810.7,827.0 1813.4,836.0 1815.5,827.7 1818.5,824.7 1821.2,831.5 1823.5,818.7 1829.0,804.4 1831.4,841.3 1834.0,842.0 1837.0,845.0 1839.3,844.3 1841.5,872.1 1846.8,859.3 1854.3,848.8 1857.3,847.3 1860.0,843.5 1862.6,849.6 1867.1,858.6 1870.4,867.6 1873.1,867.6 1878.1,810.4 1883.2,788.6 1886.2,793.9 1888.9,828.5 1891.2,843.5 1895.7,861.6 1901.7,875.9 1904.7,848.8 1906.3,859.3 1911.7,839.0 1914.7,852.6 1917.3,854.1 1922.3,867.6 1927.5,845.5 1930.8,851.8 1933.1,852.6 1935.4,831.5 1937.9,821.0 1940.6,819.5 1943.3,814.5 1948.1,849.6 1951.2,840.5 1953.4,837.5 1956.0,825.2 1958.7,839.0 1961.4,836.8 1966.2,879.6 1969.2,863.9 1971.9,866.9 1976.7,890.9 1979.4,879.6 1982.4,844.3 1984.5,831.5 1987.3,829.2 1992.5,842.0 1995.1,843.5 1999.3,833.8 2003.1,826.2 2005.3,828.5 2010.6,802.9 2013.1,833.0 2015.8,826.2 2018.5,837.5 2021.1,830.8 2023.4,848.8 2026.1,849.6 2028.6,842.8 2031.3,851.8 2033.9,836.5 2036.9,838.3 2044.4,860.1 2047.4,863.1 2053.5,877.4 2057.2,884.2 2067.7,796.9 2070.5,784.9 2073.0,794.6 2075.7,848.1 2078.3,837.5 2080.5,843.5 2083.5,860.8 2085.8,839.8 2088.8,839.8 2091.8,838.3 2096.3,831.5 2099.0,830.0 2103.9,869.1 2106.9,869.1 2112.1,878.9 2114.4,877.4 2117.1,878.9 2121.2,848.1 2124.9,844.3 2127.9,827.0 2132.9,811.9 2135.4,813.5 2140.4,788.6 2143.0,856.3 2148.2,817.2 2151.2,835.3 2153.5,867.6 2158.8,854.1 2161.0,852.6 2163.6,843.5 2166.6,843.5 2169.3,860.8 2174.6,869.1 2177.6,869.9 2182.1,879.6 2184.8,863.9 2187.6,859.3 2190.1,830.8 2197.1,796.9 2200.1,795.4 2202.7,836.8 2205.4,827.0 2208.4,832.3 2210.7,868.4 2213.2,858.6 2215.6,863.9 2218.6,800.7 2219.7,799.9 2221.0,796.9 2223.7,857.8 2226.3,857.1 2228.8,859.3 2231.2,854.8 2233.8,860.1 2239.1,875.1 2241.8,880.4 2244.3,888.7 2247.3,860.1 2250.3,840.5 2254.4,818.7 2257.4,814.2 2259.8,824.7 2264.9,804.4 2267.6,825.5 2270.4,831.5 2272.9,826.2 2275.5,829.2 2278.2,848.8 2280.7,860.1 2284.2,858.6 2288.4,851.8 2291.0,854.8 2297.0,869.8 2299.2,888.7 2301.5,888.7 2303.7,892.4 2306.8,906.7 2309.8,884.9 2314.3,776.6 2316.8,804.4 2319.8,759.3 2322.1,821.0 2324.8,802.2 2327.5,799.9 2330.1,818.7 2332.8,852.6 2335.0,853.3 2337.6,866.1 2340.3,865.3 2343.2,861.6 2345.9,834.5 2348.1,836.0 2350.8,848.0 2353.4,852.6 2356.4,860.1 2359.4,861.6 2361.7,861.6 2363.9,866.1 2366.5,867.6 2369.2,872.1 2372.2,844.3 2376.7,812.7 2379.7,814.2 2382.7,812.4 2385.0,813.4 2387.2,836.0 2390.2,845.0 2392.5,849.5 2394.8,832.2 2399.7,857.8 2402.7,842.0 2405.3,856.3 2410.2,848.0 2415.8,854.8 2418.4,853.0 2421.1,859.3 2424.1,860.1 2426.3,862.0 2428.6,857.8 2431.3,857.1 2433.9,833.7 2436.1,835.3 2438.8,811.2 2442.1,818.7 2444.4,835.3 2447.4,835.3 2449.7,830.7 2452.4,837.5 2454.9,835.3 2457.5,843.5 2459.9,837.5 2462.4,853.3 2467.7,865.3 2470.7,860.8 2473.0,859.3 2477.5,841.3 2480.5,841.3 2483.5,845.8 2485.8,851.8 2488.5,852.6 2491.0,851.5 2494.0,851.8 2496.0,832.2 2498.5,832.2 2501.6,806.7 2503.8,802.2 2506.5,779.6 2509.1,775.8 2511.6,851.0 2514.3,851.8 2517.3,851.0 2519.6,845.8 2521.9,858.6 2524.6,845.0 2527.1,854.1 2530.1,855.6 2532.4,872.9 2535.1,861.6 2537.7,856.3 2540.7,859.3" stroke="#2e9b62" stroke-width="1.45" fill="none" stroke-linejoin="round"/></svg><div style="position:absolute;right:1918px;text-align:right;top:568.0px;line-height:18px;font-size:14.5px;color:#e07d4c;font-weight:normal;white-space:nowrap;">20</div><div style="position:absolute;right:1918px;text-align:right;top:630.0px;line-height:18px;font-size:14.5px;color:#e07d4c;font-weight:normal;white-space:nowrap;">0</div><div style="position:absolute;right:1918px;text-align:right;top:692.0px;line-height:18px;font-size:14.5px;color:#e07d4c;font-weight:normal;white-space:nowrap;">&minus;20</div><div style="position:absolute;right:1918px;text-align:right;top:761.0px;line-height:18px;font-size:14.5px;color:#4db07d;font-weight:normal;white-space:nowrap;">5</div><div style="position:absolute;right:1918px;text-align:right;top:836.0px;line-height:18px;font-size:14.5px;color:#4db07d;font-weight:normal;white-space:nowrap;">0</div><div style="position:absolute;right:1918px;text-align:right;top:910.0px;line-height:18px;font-size:14.5px;color:#4db07d;font-weight:normal;white-space:nowrap;">&minus;5</div><div style="position:absolute;right:35px;text-align:right;top:551.0px;line-height:20px;font-size:15.5px;color:#d2622e;font-weight:normal;white-space:nowrap;">Flow_hpf (L/s)</div><div style="position:absolute;right:35px;text-align:right;top:749.0px;line-height:20px;font-size:15.5px;color:#2e9b62;font-weight:normal;white-space:nowrap;">Press_hpf (psi)</div><div style="position:absolute;left:599.0px;width:100px;text-align:center;top:943.0px;line-height:20px;font-size:15.5px;color:#8b8f99;font-weight:normal;white-space:nowrap;">Nov 2</div><div style="position:absolute;left:723.9px;width:100px;text-align:center;top:943.0px;line-height:20px;font-size:15.5px;color:#8b8f99;font-weight:normal;white-space:nowrap;">Nov 4</div><div style="position:absolute;left:848.8px;width:100px;text-align:center;top:943.0px;line-height:20px;font-size:15.5px;color:#8b8f99;font-weight:normal;white-space:nowrap;">Nov 6</div><div style="position:absolute;left:973.7px;width:100px;text-align:center;top:943.0px;line-height:20px;font-size:15.5px;color:#8b8f99;font-weight:normal;white-space:nowrap;">Nov 8</div><div style="position:absolute;left:1098.6px;width:100px;text-align:center;top:943.0px;line-height:20px;font-size:15.5px;color:#8b8f99;font-weight:normal;white-space:nowrap;">Nov 10</div><div style="position:absolute;left:1223.5px;width:100px;text-align:center;top:943.0px;line-height:20px;font-size:15.5px;color:#8b8f99;font-weight:normal;white-space:nowrap;">Nov 12</div><div style="position:absolute;left:1348.4px;width:100px;text-align:center;top:943.0px;line-height:20px;font-size:15.5px;color:#8b8f99;font-weight:normal;white-space:nowrap;">Nov 14</div><div style="position:absolute;left:1473.3000000000002px;width:100px;text-align:center;top:943.0px;line-height:20px;font-size:15.5px;color:#8b8f99;font-weight:normal;white-space:nowrap;">Nov 16</div><div style="position:absolute;left:1598.2px;width:100px;text-align:center;top:943.0px;line-height:20px;font-size:15.5px;color:#8b8f99;font-weight:normal;white-space:nowrap;">Nov 18</div><div style="position:absolute;left:1723.1000000000001px;width:100px;text-align:center;top:943.0px;line-height:20px;font-size:15.5px;color:#8b8f99;font-weight:normal;white-space:nowrap;">Nov 20</div><div style="position:absolute;left:1848.0px;width:100px;text-align:center;top:943.0px;line-height:20px;font-size:15.5px;color:#8b8f99;font-weight:normal;white-space:nowrap;">Nov 22</div><div style="position:absolute;left:1972.9px;width:100px;text-align:center;top:943.0px;line-height:20px;font-size:15.5px;color:#8b8f99;font-weight:normal;white-space:nowrap;">Nov 24</div><div style="position:absolute;left:2097.8px;width:100px;text-align:center;top:943.0px;line-height:20px;font-size:15.5px;color:#8b8f99;font-weight:normal;white-space:nowrap;">Nov 26</div><div style="position:absolute;left:2222.7px;width:100px;text-align:center;top:943.0px;line-height:20px;font-size:15.5px;color:#8b8f99;font-weight:normal;white-space:nowrap;">Nov 28</div><div style="position:absolute;left:2347.6000000000004px;width:100px;text-align:center;top:943.0px;line-height:20px;font-size:15.5px;color:#8b8f99;font-weight:normal;white-space:nowrap;">Nov 30</div><div style="position:absolute;right:16px;text-align:right;top:943.0px;line-height:20px;font-size:15.5px;color:#8b8f99;font-weight:normal;white-space:nowrap;">Dec 2</div><div style="position:absolute;left:612px;top:54px;width:1944px;height:63px;background:#f4f4f4;border-bottom:2px solid #e8e8e8;box-sizing:border-box;"></div><div style="position:absolute;left:627px;top:62px;width:62px;height:48px;background:#007a5d;border-radius:7px;"></div><svg style="position:absolute;left:633px;top:72px;" width="28" height="28" viewBox="0 0 28 28"><path d="M2 2 L2 25 L26 25" stroke="#fff" stroke-width="2.2" fill="none"/><path d="M4 19 L9 12 L12 17 L17 4 L20 16 L23 11" stroke="#fff" stroke-width="1.6" fill="none"/></svg><svg style="position:absolute;left:664px;top:80px;" width="16" height="11" viewBox="0 0 16 11"><path d="M2 2 L8 8 L14 2" stroke="#d7ece6" stroke-width="2.8" fill="none"/></svg><div style="position:absolute;left:696px;top:64px;width:68px;height:44px;background:#ebebeb;border-radius:3px;box-shadow:inset 0 1px 3px rgba(0,0,0,0.12);"></div><svg style="position:absolute;left:720px;top:67px;" width="19" height="20" viewBox="0 0 19 20"><rect x="1.5" y="4" width="16" height="15" fill="none" stroke="#333" stroke-width="1.6"/><rect x="1.5" y="4" width="16" height="4" fill="#333"/><path d="M5 1 L5 6 M14 1 L14 6" stroke="#333" stroke-width="2"/><path d="M1.5 11.5 L17.5 11.5 M1.5 15 L17.5 15 M6 8 L6 19 M9.5 8 L9.5 19 M13 8 L13 19" stroke="#333" stroke-width="0.9"/></svg><svg style="position:absolute;left:779px;top:65px;" width="22" height="22" viewBox="0 0 22 22"><rect x="2.2" y="4" width="9" height="6.5" rx="3" transform="rotate(45 6.7 7.2)" fill="none" stroke="#333" stroke-width="1.9"/><rect x="10.2" y="11.5" width="9" height="6.5" rx="3" transform="rotate(45 14.7 14.7)" fill="none" stroke="#333" stroke-width="1.9"/></svg><svg style="position:absolute;left:837px;top:71px;" width="21" height="16" viewBox="0 0 21 16"><rect x="0.5" y="0.5" width="19.5" height="4" rx="1.5" fill="#333"/><rect x="0.5" y="6" width="19.5" height="4" rx="1.5" fill="#333"/><rect x="0.5" y="11.5" width="19.5" height="4" rx="1.5" fill="#333"/><rect x="13.5" y="1.6" width="5.5" height="1.8" fill="#eee"/><rect x="7" y="7.1" width="12" height="1.8" fill="#bbb"/><rect x="11" y="12.6" width="8" height="1.8" fill="#eee"/></svg><div style="position:absolute;left:685.0px;width:90px;text-align:center;top:88.0px;line-height:16px;font-size:12.5px;color:#333;font-weight:normal;white-space:nowrap;letter-spacing:-0.2px;">Calendar</div><div style="position:absolute;left:744.0px;width:90px;text-align:center;top:88.0px;line-height:16px;font-size:12.5px;color:#333;font-weight:normal;white-space:nowrap;letter-spacing:-0.2px;">Chain</div><div style="position:absolute;left:802.0px;width:90px;text-align:center;top:88.0px;line-height:16px;font-size:12.5px;color:#333;font-weight:normal;white-space:nowrap;letter-spacing:-0.2px;">Capsule</div><div style="position:absolute;left:886.0px;width:90px;text-align:center;top:88.0px;line-height:16px;font-size:12.5px;color:#333;font-weight:normal;white-space:nowrap;letter-spacing:-0.2px;">One Lane</div><div style="position:absolute;left:959.0px;width:90px;text-align:center;top:88.0px;line-height:16px;font-size:12.5px;color:#333;font-weight:normal;white-space:nowrap;letter-spacing:-0.2px;">One Y-Axis</div><div style="position:absolute;left:1026.0px;width:90px;text-align:center;top:88.0px;line-height:16px;font-size:12.5px;color:#333;font-weight:normal;white-space:nowrap;letter-spacing:-0.2px;">Spread</div><div style="position:absolute;left:1083.0px;width:90px;text-align:center;top:88.0px;line-height:16px;font-size:12.5px;color:#333;font-weight:normal;white-space:nowrap;letter-spacing:-0.2px;">Labels</div><div style="position:absolute;left:1156.0px;width:90px;text-align:center;top:89.0px;line-height:16px;font-size:12.5px;color:#333;font-weight:normal;white-space:nowrap;letter-spacing:-0.2px;">Dimming</div><div style="position:absolute;left:1227.5px;width:90px;text-align:center;top:88.0px;line-height:16px;font-size:12.5px;color:#b4b4b4;font-weight:normal;white-space:nowrap;letter-spacing:-0.2px;">Zoom</div><div style="position:absolute;left:1276.0px;width:90px;text-align:center;top:88.0px;line-height:16px;font-size:12.5px;color:#333;font-weight:normal;white-space:nowrap;letter-spacing:-0.2px;">Export</div><div style="position:absolute;left:1333.0px;width:90px;text-align:center;top:88.0px;line-height:16px;font-size:12.5px;color:#b4b4b4;font-weight:normal;white-space:nowrap;letter-spacing:-0.2px;">Annotate</div><div style="position:absolute;left:887px;top:63px;width:1px;height:46px;background:#dcdcdc;"></div><div style="position:absolute;left:1164px;top:63px;width:1px;height:46px;background:#dcdcdc;"></div><div style="position:absolute;left:1244px;top:63px;width:1px;height:46px;background:#dcdcdc;"></div><svg style="position:absolute;left:912px;top:68px;" width="16" height="21" viewBox="0 0 16 21"><path d="M4 2 L4 20 M1 5 L4 1.5 L7 5" stroke="#333" stroke-width="2.2" fill="none"/><path d="M10 0 L10 18 M7 15 L10 18.5 L13 15" stroke="#333" stroke-width="2.2" fill="none"/></svg><svg style="position:absolute;left:929px;top:69px;" width="24" height="21" viewBox="0 0 24 21"><path d="M1 0 L1 19 L22 19" stroke="#333" stroke-width="1.6" fill="none"/><path d="M3 15 L8 10 L11 13 L18 6" stroke="#333" stroke-width="2" fill="none"/><path d="M15 4 L20 3.5 L19.5 8.5 Z" fill="#333"/></svg><svg style="position:absolute;left:984px;top:68px;" width="16" height="21" viewBox="0 0 16 21"><path d="M4 2 L4 20 M1 5 L4 1.5 L7 5" stroke="#333" stroke-width="2.2" fill="none"/><path d="M10 0 L10 18 M7 15 L10 18.5 L13 15" stroke="#333" stroke-width="2.2" fill="none"/></svg><svg style="position:absolute;left:1002px;top:69px;" width="24" height="21" viewBox="0 0 24 21"><path d="M1 0 L1 19 L22 19" stroke="#333" stroke-width="1.6" fill="none"/><path d="M3 15 L8 10 L11 13 L18 6" stroke="#333" stroke-width="2" fill="none"/><path d="M15 4 L20 3.5 L19.5 8.5 Z" fill="#333"/></svg><svg style="position:absolute;left:1054px;top:67px;" width="10" height="24" viewBox="0 0 10 24"><path d="M5 2 L5 22" stroke="#333" stroke-width="2.2"/><path d="M1.5 5 L5 1 L8.5 5 Z M1.5 19 L5 23 L8.5 19 Z" fill="#333"/></svg><svg style="position:absolute;left:1068px;top:69px;" width="24" height="21" viewBox="0 0 24 21"><path d="M1 0 L1 19 L22 19" stroke="#333" stroke-width="1.6" fill="none"/><path d="M3 15 L8 10 L11 13 L18 6" stroke="#333" stroke-width="2" fill="none"/><path d="M15 4 L20 3.5 L19.5 8.5 Z" fill="#333"/></svg><svg style="position:absolute;left:1113px;top:68px;" width="30" height="20" viewBox="0 0 30 20"><path d="M1 2 L1 8 L11 18 L18 11 L8 1 L2 1 Z" fill="#333"/><circle cx="5" cy="5" r="1.6" fill="#f4f4f4"/><path d="M21 12 L27 12 L24 15 Z" fill="#333"/></svg><svg style="position:absolute;left:1186px;top:68px;" width="32" height="21" viewBox="0 0 32 21"><path d="M1 18 L5 2 L10 16 L12 8" stroke="#333" stroke-width="2" fill="none"/><circle cx="14" cy="12" r="0.9" fill="#333"/><circle cx="13" cy="17" r="0.9" fill="#333"/><circle cx="17" cy="15" r="0.9" fill="#333"/><circle cx="20" cy="18" r="0.9" fill="#333"/><path d="M23 12 L29 12 L26 15 Z" fill="#333"/></svg><svg style="position:absolute;left:1262px;top:68px;" width="22" height="22" viewBox="0 0 22 22"><circle cx="9" cy="9" r="7" stroke="#b4b4b4" stroke-width="2" fill="none"/><path d="M9 5 L9 13 M5 9 L13 9" stroke="#b4b4b4" stroke-width="1.6"/><path d="M14 14 L19 19" stroke="#b4b4b4" stroke-width="3"/></svg><svg style="position:absolute;left:1307px;top:67px;" width="30" height="22" viewBox="0 0 30 22"><path d="M3 9 L3 19 L19 19 L19 9" stroke="#333" stroke-width="2" fill="none"/><path d="M11 15 L11 3 M6.5 6.5 L11 1.5 L15.5 6.5" stroke="#333" stroke-width="2.4" fill="none"/><path d="M21 12 L27 12 L24 15 Z" fill="#333"/></svg><svg style="position:absolute;left:1367px;top:67px;" width="22" height="20" viewBox="0 0 22 20"><path d="M11 2 C5 2 2 5 2 8 C2 10 3 12 5 13 L3 17 L8 14 C9 14 10 14 11 14 C17 14 20 11 20 8 C20 5 17 2 11 2 Z" stroke="#b4b4b4" stroke-width="1.7" fill="none"/><circle cx="7" cy="8" r="1" fill="#b4b4b4"/><circle cx="11" cy="8" r="1" fill="#b4b4b4"/><circle cx="15" cy="8" r="1" fill="#b4b4b4"/></svg><svg style="position:absolute;left:622px;top:968px;" width="15" height="19" viewBox="0 0 15 19"><path d="M7.5 1 L7.5 15" stroke="#007a5d" stroke-width="3"/><path d="M1 10 L7.5 18 L14 10 Z" fill="#007a5d"/></svg><div style="position:absolute;left:646px;top:969.5px;line-height:17px;font-size:13.5px;color:#1f7a67;font-weight:normal;white-space:nowrap;">11/1/2018 10:06 PM <u>EDT</u></div><div style="position:absolute;right:16px;text-align:right;top:969.5px;line-height:17px;font-size:13.5px;color:#1f7a67;font-weight:normal;white-space:nowrap;">12/2/2018 7:06 AM <u>EST</u></div><svg style="position:absolute;left:1431px;top:969px;" width="20" height="18" viewBox="0 0 20 18"><path d="M10 1 L1 9 L10 17 Z M19 1 L10 9 L19 17 Z" fill="#007a5d"/></svg><svg style="position:absolute;left:1468px;top:969px;" width="11" height="18" viewBox="0 0 11 18"><path d="M10 1 L1 9 L10 17 Z" fill="#007a5d"/></svg><div style="position:absolute;left:1496px;top:969.0px;line-height:18px;font-size:14px;color:#1f7a67;font-weight:normal;white-space:nowrap;">1 month</div><svg style="position:absolute;left:1566px;top:969px;" width="11" height="18" viewBox="0 0 11 18"><path d="M1 1 L10 9 L1 17 Z" fill="#007a5d"/></svg><svg style="position:absolute;left:1593px;top:969px;" width="20" height="18" viewBox="0 0 20 18"><path d="M1 1 L10 9 L1 17 Z M10 1 L19 9 L10 17 Z" fill="#007a5d"/></svg><svg style="position:absolute;left:1629px;top:969px;" width="14" height="18" viewBox="0 0 14 18"><path d="M1 1 L9 9 L1 17 Z" fill="#007a5d"/><rect x="9.5" y="1" width="3.5" height="16" fill="#007a5d"/></svg><svg style="position:absolute;left:1661px;top:970px;" width="15" height="15" viewBox="0 0 15 15"><path d="M2.5 7 A5 5 0 0 1 12 5" stroke="#007a5d" stroke-width="2.2" fill="none"/><path d="M12.5 8 A5 5 0 0 1 3 10" stroke="#007a5d" stroke-width="2.2" fill="none"/><path d="M9 5 L14 6 L13.5 1 Z M6 10 L1 9 L1.5 14 Z" fill="#007a5d"/></svg><div style="position:absolute;left:613px;top:993px;width:1943px;height:82px;background:#f4f4f4;border-top:1px solid #ececec;box-sizing:border-box;"></div><div style="position:absolute;left:644px;top:1005px;width:1868px;height:16px;background:#f0f0f0;border:2px solid #d2d2d2;border-radius:4px;box-sizing:border-box;"></div><div style="position:absolute;left:1448px;top:1005px;width:777px;height:16px;background:#fff;border-top:3px solid #007a5d;border-bottom:3px solid #007a5d;box-sizing:border-box;"></div><div style="position:absolute;left:1445px;top:1001px;width:6px;height:24px;background:#cfe6df;border:2px solid #007a5d;box-sizing:border-box;"></div><div style="position:absolute;left:2222px;top:1001px;width:6px;height:24px;background:#cfe6df;border:2px solid #007a5d;box-sizing:border-box;"></div><svg style="position:absolute;left:2522px;top:1005px;" width="16" height="18" viewBox="0 0 16 18"><rect x="0" y="0" width="16" height="18" fill="#007a5d"/><path d="M1 15 L4 3 L7 15 L10 3 L13 15" stroke="#e8f2ef" stroke-width="1.5" fill="none"/></svg><div style="position:absolute;left:791.8px;top:1022px;width:1px;height:5px;background:#cfcfcf;"></div><div style="position:absolute;left:752.3px;width:80px;text-align:center;top:1026.0px;line-height:14px;font-size:11.5px;color:#8d8d96;font-weight:normal;white-space:nowrap;">Oct 7</div><div style="position:absolute;left:969.5999999999999px;top:1022px;width:1px;height:5px;background:#cfcfcf;"></div><div style="position:absolute;left:930.0999999999999px;width:80px;text-align:center;top:1026.0px;line-height:14px;font-size:11.5px;color:#8d8d96;font-weight:normal;white-space:nowrap;">Oct 14</div><div style="position:absolute;left:1147.4px;top:1022px;width:1px;height:5px;background:#cfcfcf;"></div><div style="position:absolute;left:1107.9px;width:80px;text-align:center;top:1026.0px;line-height:14px;font-size:11.5px;color:#8d8d96;font-weight:normal;white-space:nowrap;">Oct 21</div><div style="position:absolute;left:1325.2px;top:1022px;width:1px;height:5px;background:#cfcfcf;"></div><div style="position:absolute;left:1285.7px;width:80px;text-align:center;top:1026.0px;line-height:14px;font-size:11.5px;color:#8d8d96;font-weight:normal;white-space:nowrap;">Oct 28</div><div style="position:absolute;left:1503.0px;top:1022px;width:1px;height:5px;background:#cfcfcf;"></div><div style="position:absolute;left:1463.5px;width:80px;text-align:center;top:1026.0px;line-height:14px;font-size:11.5px;color:#8d8d96;font-weight:normal;white-space:nowrap;">Nov 4</div><div style="position:absolute;left:1680.8px;top:1022px;width:1px;height:5px;background:#cfcfcf;"></div><div style="position:absolute;left:1641.3px;width:80px;text-align:center;top:1026.0px;line-height:14px;font-size:11.5px;color:#8d8d96;font-weight:normal;white-space:nowrap;">Nov 11</div><div style="position:absolute;left:1858.6000000000001px;top:1022px;width:1px;height:5px;background:#cfcfcf;"></div><div style="position:absolute;left:1819.1000000000001px;width:80px;text-align:center;top:1026.0px;line-height:14px;font-size:11.5px;color:#8d8d96;font-weight:normal;white-space:nowrap;">Nov 18</div><div style="position:absolute;left:2036.4px;top:1022px;width:1px;height:5px;background:#cfcfcf;"></div><div style="position:absolute;left:1996.9px;width:80px;text-align:center;top:1026.0px;line-height:14px;font-size:11.5px;color:#8d8d96;font-weight:normal;white-space:nowrap;">Nov 25</div><div style="position:absolute;left:2214.2px;top:1022px;width:1px;height:5px;background:#cfcfcf;"></div><div style="position:absolute;left:2174.7px;width:80px;text-align:center;top:1026.0px;line-height:14px;font-size:11.5px;color:#8d8d96;font-weight:normal;white-space:nowrap;">Dec 2</div><div style="position:absolute;left:2392.0px;top:1022px;width:1px;height:5px;background:#cfcfcf;"></div><div style="position:absolute;left:2352.5px;width:80px;text-align:center;top:1026.0px;line-height:14px;font-size:11.5px;color:#8d8d96;font-weight:normal;white-space:nowrap;">Dec 9</div><svg style="position:absolute;left:622px;top:1050px;" width="15" height="19" viewBox="0 0 15 19"><path d="M7.5 4 L7.5 18" stroke="#007a5d" stroke-width="3"/><path d="M1 9 L7.5 1 L14 9 Z" fill="#007a5d"/></svg><div style="position:absolute;left:646px;top:1052.5px;line-height:18px;font-size:14px;color:#1f7a67;font-weight:normal;white-space:nowrap;">10/1/2018</div><div style="position:absolute;left:1530.5px;width:120px;text-align:center;top:1052.5px;line-height:18px;font-size:14px;color:#1f7a67;font-weight:normal;white-space:nowrap;">2.4 months</div><div style="position:absolute;right:20px;text-align:right;top:1052.5px;line-height:18px;font-size:14px;color:#1f7a67;font-weight:normal;white-space:nowrap;">12/13/2018</div><div style="position:absolute;left:613px;top:1075px;width:1943px;height:32px;background:#007a5d;"></div><svg style="position:absolute;left:624px;top:1083px;" width="20" height="17" viewBox="0 0 20 17"><path d="M1 1 L1 15.5 L19 15.5" stroke="#fff" stroke-width="1.6" fill="none"/><path d="M3 14 L3 5 L7 8 L11 3 L14 7 L17 5 L18 14 Z" fill="#fff"/></svg><div style="position:absolute;left:647px;top:1081.0px;line-height:20px;font-size:15.5px;color:#fff;font-weight:normal;white-space:nowrap;">Details</div><div style="position:absolute;left:2457px;top:1078px;width:94px;height:26px;background:#fff;border-radius:4px;"></div><svg style="position:absolute;left:2464px;top:1082px;" width="17" height="16" viewBox="0 0 17 16"><circle cx="6" cy="8.5" r="3.3" fill="none" stroke="#222" stroke-width="2.6"/><circle cx="6" cy="8.5" r="5" fill="none" stroke="#222" stroke-width="2" stroke-dasharray="2 1.93"/><circle cx="13.5" cy="2.5" r="1.6" fill="none" stroke="#222" stroke-width="1.3"/><circle cx="13.5" cy="2.5" r="2.4" fill="none" stroke="#222" stroke-width="1" stroke-dasharray="1.2 0.9"/><circle cx="13.5" cy="12.5" r="1.6" fill="none" stroke="#222" stroke-width="1.3"/><circle cx="13.5" cy="12.5" r="2.4" fill="none" stroke="#222" stroke-width="1" stroke-dasharray="1.2 0.9"/></svg><div style="position:absolute;left:2482px;top:1083.0px;line-height:16px;font-size:13px;color:#333;font-weight:normal;white-space:nowrap;">Customize</div><div style="position:absolute;left:613px;top:1107px;width:1943px;height:156px;background:#fff;"></div><svg style="position:absolute;left:705px;top:1119px;" width="13" height="13" viewBox="0 0 13 13"><path d="M2 2 L11 11 M11 2 L2 11" stroke="#555" stroke-width="2.6"/></svg><svg style="position:absolute;left:730px;top:1118px;" width="15" height="15" viewBox="0 0 15 15"><rect x="1" y="1" width="12" height="12" rx="2" fill="#fff" stroke="#555" stroke-width="1.3"/></svg><svg style="position:absolute;left:791px;top:1118px;" width="12" height="16" viewBox="0 0 12 16"><path d="M1 6 L6 1 L11 6 Z M1 10 L6 15 L11 10 Z" fill="#666"/></svg><div style="position:absolute;left:814px;top:1116.0px;line-height:19px;font-size:15px;color:#333;font-weight:normal;white-space:nowrap;">Name</div><svg style="position:absolute;left:864px;top:1118px;" width="12" height="16" viewBox="0 0 12 16"><path d="M1 6 L6 1 L11 6 Z M1 10 L6 15 L11 10 Z" fill="#666"/></svg><div style="position:absolute;left:2332px;top:1116.0px;line-height:19px;font-size:15px;color:#333;font-weight:normal;white-space:nowrap;">Assets</div><div style="position:absolute;left:2392px;top:1116.0px;line-height:19px;font-size:15px;color:#1f7a67;font-weight:normal;white-space:nowrap;">Lane</div><svg style="position:absolute;left:2435px;top:1118px;" width="11" height="6" viewBox="0 0 11 6"><path d="M0 6 L5.5 0 L11 6 Z" fill="#007a5d"/></svg><svg style="position:absolute;left:2528px;top:1113px;" width="19" height="18" viewBox="0 0 19 18"><rect x="1" y="1" width="13" height="12" fill="none" stroke="#555" stroke-width="1.2"/><path d="M1 5 L14 5 M1 9 L14 9 M5 1 L5 13 M9.5 1 L9.5 13" stroke="#555" stroke-width="1"/><circle cx="13" cy="12" r="5" fill="#222"/><path d="M13 9 L13 15 M10 12 L16 12" stroke="#fff" stroke-width="1.8"/></svg><div style="position:absolute;left:613px;top:1139px;width:1943px;height:2px;background:#dedede;"></div><div style="position:absolute;left:613px;top:1141px;width:1943px;height:27px;background:#f8f8f8;"></div><div style="position:absolute;left:613px;top:1168px;width:1943px;height:1px;background:#e6e6e6;"></div><svg style="position:absolute;left:617px;top:1146.5px;" width="18" height="16" viewBox="0 0 18 16"><path d="M12 2 L2 2 L2 14 L14 14 L14 8" stroke="#3a8f7a" stroke-width="1.3" fill="none"/><path d="M7 10 L15 1.5 L17 3.5 L8.5 12 L6 12.5 Z" fill="#3a8f7a"/></svg><svg style="position:absolute;left:650px;top:1146.5px;" width="16" height="16" viewBox="0 0 16 16"><path d="M15 1 C10 1 6 4 4 8 L2 8 L1 10 L4 11 L5 13 L6 15 L8 14 L8 12 C12 10 15 6 15 1 Z" fill="#007a5d"/><path d="M4 12 L1 15" stroke="#007a5d" stroke-width="1.5"/></svg><svg style="position:absolute;left:680px;top:1146.5px;" width="16" height="16" viewBox="0 0 16 16"><circle cx="8" cy="8" r="7.5" fill="#007a5d"/><rect x="6.7" y="6.5" width="2.6" height="6" fill="#fff"/><circle cx="8" cy="4" r="1.4" fill="#fff"/></svg><svg style="position:absolute;left:705px;top:1148.0px;" width="13" height="13" viewBox="0 0 13 13"><path d="M2 2 L11 11 M11 2 L2 11" stroke="#007a5d" stroke-width="2.8"/></svg><svg style="position:absolute;left:730px;top:1147.0px;" width="15" height="15" viewBox="0 0 15 15"><rect x="1" y="1" width="12" height="12" rx="2" fill="#fff" stroke="#555" stroke-width="1.3"/></svg><svg style="position:absolute;left:759px;top:1144.5px;" width="20" height="18" viewBox="0 0 20 18"><path d="M1 11 L4 1.5 L8 10 L10.5 5 L13 13 L15.5 9 L18 15" stroke="#d6501e" stroke-width="1.6" fill="none"/></svg><div style="position:absolute;left:786px;top:1145.0px;line-height:19px;font-size:15px;color:#444;font-weight:normal;white-space:nowrap;">L/s</div><div style="position:absolute;left:814px;top:1145.0px;line-height:19px;font-size:15px;color:#333;font-weight:normal;white-space:nowrap;">Flow_hpf</div><div style="position:absolute;left:2332px;top:1145.0px;line-height:19px;font-size:15px;color:#1f7a67;font-weight:normal;white-space:nowrap;"><u>Pump 1</u></div><div style="position:absolute;left:2428.0px;width:20px;text-align:center;top:1146.5px;line-height:16px;font-size:13px;color:#333;font-weight:normal;white-space:nowrap;">1</div><div style="position:absolute;left:613px;top:1169px;width:1943px;height:27px;background:#fff;"></div><div style="position:absolute;left:613px;top:1196px;width:1943px;height:1px;background:#e6e6e6;"></div><svg style="position:absolute;left:617px;top:1174.5px;" width="18" height="16" viewBox="0 0 18 16"><path d="M12 2 L2 2 L2 14 L14 14 L14 8" stroke="#3a8f7a" stroke-width="1.3" fill="none"/><path d="M7 10 L15 1.5 L17 3.5 L8.5 12 L6 12.5 Z" fill="#3a8f7a"/></svg><svg style="position:absolute;left:650px;top:1174.5px;" width="16" height="16" viewBox="0 0 16 16"><path d="M15 1 C10 1 6 4 4 8 L2 8 L1 10 L4 11 L5 13 L6 15 L8 14 L8 12 C12 10 15 6 15 1 Z" fill="#007a5d"/><path d="M4 12 L1 15" stroke="#007a5d" stroke-width="1.5"/></svg><svg style="position:absolute;left:680px;top:1174.5px;" width="16" height="16" viewBox="0 0 16 16"><circle cx="8" cy="8" r="7.5" fill="#007a5d"/><rect x="6.7" y="6.5" width="2.6" height="6" fill="#fff"/><circle cx="8" cy="4" r="1.4" fill="#fff"/></svg><svg style="position:absolute;left:705px;top:1176.0px;" width="13" height="13" viewBox="0 0 13 13"><path d="M2 2 L11 11 M11 2 L2 11" stroke="#007a5d" stroke-width="2.8"/></svg><svg style="position:absolute;left:730px;top:1175.0px;" width="15" height="15" viewBox="0 0 15 15"><rect x="1" y="1" width="12" height="12" rx="2" fill="#fff" stroke="#555" stroke-width="1.3"/></svg><svg style="position:absolute;left:759px;top:1172.5px;" width="20" height="18" viewBox="0 0 20 18"><path d="M1 11 L4 1.5 L8 10 L10.5 5 L13 13 L15.5 9 L18 15" stroke="#2e9b62" stroke-width="1.6" fill="none"/></svg><div style="position:absolute;left:786px;top:1173.0px;line-height:19px;font-size:15px;color:#444;font-weight:normal;white-space:nowrap;">psi</div><div style="position:absolute;left:814px;top:1173.0px;line-height:19px;font-size:15px;color:#333;font-weight:normal;white-space:nowrap;">Press_hpf</div><div style="position:absolute;left:2332px;top:1173.0px;line-height:19px;font-size:15px;color:#1f7a67;font-weight:normal;white-space:nowrap;"><u>Pump 1</u></div><div style="position:absolute;left:2428.0px;width:20px;text-align:center;top:1174.5px;line-height:16px;font-size:13px;color:#333;font-weight:normal;white-space:nowrap;">2</div><div style="position:absolute;left:613px;top:1197px;width:1943px;height:27px;background:#f8f8f8;"></div><div style="position:absolute;left:613px;top:1224px;width:1943px;height:1px;background:#e6e6e6;"></div><svg style="position:absolute;left:617px;top:1202.5px;" width="18" height="16" viewBox="0 0 18 16"><path d="M12 2 L2 2 L2 14 L14 14 L14 8" stroke="#3a8f7a" stroke-width="1.3" fill="none"/><path d="M7 10 L15 1.5 L17 3.5 L8.5 12 L6 12.5 Z" fill="#3a8f7a"/></svg><svg style="position:absolute;left:650px;top:1202.5px;" width="16" height="16" viewBox="0 0 16 16"><path d="M15 1 C10 1 6 4 4 8 L2 8 L1 10 L4 11 L5 13 L6 15 L8 14 L8 12 C12 10 15 6 15 1 Z" fill="#007a5d"/><path d="M4 12 L1 15" stroke="#007a5d" stroke-width="1.5"/></svg><svg style="position:absolute;left:680px;top:1202.5px;" width="16" height="16" viewBox="0 0 16 16"><circle cx="8" cy="8" r="7.5" fill="#007a5d"/><rect x="6.7" y="6.5" width="2.6" height="6" fill="#fff"/><circle cx="8" cy="4" r="1.4" fill="#fff"/></svg><svg style="position:absolute;left:705px;top:1204.0px;" width="13" height="13" viewBox="0 0 13 13"><path d="M2 2 L11 11 M11 2 L2 11" stroke="#007a5d" stroke-width="2.8"/></svg><svg style="position:absolute;left:730px;top:1203.0px;" width="15" height="15" viewBox="0 0 15 15"><rect x="1" y="1" width="12" height="12" rx="2" fill="#fff" stroke="#555" stroke-width="1.3"/></svg><svg style="position:absolute;left:759px;top:1200.5px;" width="20" height="18" viewBox="0 0 20 18"><path d="M1.5 1 L1.5 16.5 L18 16.5" stroke="#3f51a5" stroke-width="1.4" fill="none"/><rect x="4" y="9" width="3" height="6" fill="#3f51a5"/><rect x="8.5" y="3" width="3" height="12" fill="#3f51a5"/><rect x="13" y="7" width="3" height="8" fill="#3f51a5"/></svg><div style="position:absolute;left:814px;top:1201.0px;line-height:19px;font-size:15px;color:#333;font-weight:normal;white-space:nowrap;">Flow FFT</div><div style="position:absolute;left:2332px;top:1201.0px;line-height:19px;font-size:15px;color:#1f7a67;font-weight:normal;white-space:nowrap;"><u>Pump 1</u></div><div style="position:absolute;left:613px;top:1225px;width:1943px;height:27px;background:#fff;"></div><svg style="position:absolute;left:617px;top:1230.5px;" width="18" height="16" viewBox="0 0 18 16"><path d="M12 2 L2 2 L2 14 L14 14 L14 8" stroke="#3a8f7a" stroke-width="1.3" fill="none"/><path d="M7 10 L15 1.5 L17 3.5 L8.5 12 L6 12.5 Z" fill="#3a8f7a"/></svg><svg style="position:absolute;left:650px;top:1230.5px;" width="16" height="16" viewBox="0 0 16 16"><path d="M15 1 C10 1 6 4 4 8 L2 8 L1 10 L4 11 L5 13 L6 15 L8 14 L8 12 C12 10 15 6 15 1 Z" fill="#007a5d"/><path d="M4 12 L1 15" stroke="#007a5d" stroke-width="1.5"/></svg><svg style="position:absolute;left:680px;top:1230.5px;" width="16" height="16" viewBox="0 0 16 16"><circle cx="8" cy="8" r="7.5" fill="#007a5d"/><rect x="6.7" y="6.5" width="2.6" height="6" fill="#fff"/><circle cx="8" cy="4" r="1.4" fill="#fff"/></svg><svg style="position:absolute;left:705px;top:1232.0px;" width="13" height="13" viewBox="0 0 13 13"><path d="M2 2 L11 11 M11 2 L2 11" stroke="#007a5d" stroke-width="2.8"/></svg><svg style="position:absolute;left:730px;top:1231.0px;" width="15" height="15" viewBox="0 0 15 15"><rect x="1" y="1" width="12" height="12" rx="2" fill="#fff" stroke="#555" stroke-width="1.3"/></svg><svg style="position:absolute;left:759px;top:1228.5px;" width="20" height="18" viewBox="0 0 20 18"><path d="M1.5 1 L1.5 16.5 L18 16.5" stroke="#a02a96" stroke-width="1.4" fill="none"/><rect x="4" y="9" width="3" height="6" fill="#a02a96"/><rect x="8.5" y="3" width="3" height="12" fill="#a02a96"/><rect x="13" y="7" width="3" height="8" fill="#a02a96"/></svg><div style="position:absolute;left:814px;top:1229.0px;line-height:19px;font-size:15px;color:#333;font-weight:normal;white-space:nowrap;">Press FFT</div><div style="position:absolute;left:2332px;top:1229.0px;line-height:19px;font-size:15px;color:#1f7a67;font-weight:normal;white-space:nowrap;"><u>Pump 1</u></div><div style="position:absolute;left:0px;top:0px;width:2556px;height:54px;background:#007a5d;"></div><div style="position:absolute;left:0px;top:0px;width:52px;height:53px;background:#164936;"></div><div style="position:absolute;left:14px;top:16px;width:10px;height:9px;background:#fff;border-radius:1px;"></div><div style="position:absolute;left:26px;top:16px;width:10px;height:9px;background:#fff;border-radius:1px;"></div><div style="position:absolute;left:14px;top:26px;width:10px;height:9px;background:#fff;border-radius:1px;"></div><div style="position:absolute;left:26px;top:26px;width:10px;height:9px;background:#fff;border-radius:1px;"></div><svg style="position:absolute;left:0;top:0" width="160" height="54"><g fill="none" stroke="#fff" stroke-width="3.7" stroke-linejoin="round"><path d="M87,16.5 H75.5 Q72.5,16.5 72.5,19.5 V23.5 Q72.5,26.5 75.5,26.5 H81.5 Q85,26.5 85,30 V34 Q85,37.2 81.5,37.2 H70.6"/><path d="M103,29 V25.8 Q103,22.8 100,22.8 H94 Q91,22.8 91,25.8 V34.6 Q91,37.6 94,37.6 H104.8 M91,31.8 L103,28.6"/><path d="M120.6,29 V25.8 Q120.6,22.8 117.6,22.8 H111.6 Q108.6,22.8 108.6,25.8 V34.6 Q108.6,37.6 111.6,37.6 H122.4 M108.6,31.8 L120.6,28.6"/><circle cx="134" cy="30.4" r="8"/><path d="M138.5,37.5 L144.5,42.5" stroke-width="4"/><path d="M136.5,24.5 A6.5,6.5 0 0 1 136.5,36" stroke="#8fcbb8" stroke-width="1"/></g></svg><svg style="position:absolute;left:177px;top:19px;" width="16" height="14" viewBox="0 0 16 14"><path d="M2 7 L6 11 L14 2" stroke="#72c12e" stroke-width="3" fill="none"/></svg><div style="position:absolute;left:196px;top:16.5px;line-height:19px;font-size:15px;color:#fff;font-weight:normal;white-space:nowrap;">4 Connected</div><div style="position:absolute;left:956.0px;width:500px;text-align:center;top:15.0px;line-height:24px;font-size:19px;color:#fff;font-weight:normal;white-space:nowrap;">FFT Interacting - 1</div><svg style="position:absolute;left:2128px;top:12px;" width="30" height="26" viewBox="0 0 30 26"><path d="M3 10 L11 2 L11 7 C20 7 26 12 25 24 C22 16 18 13 11 13 L11 18 Z" fill="#eaf4f1"/></svg><svg style="position:absolute;left:2168px;top:12px;" width="30" height="26" viewBox="0 0 30 26"><path d="M27 10 L19 2 L19 7 C10 7 4 12 5 24 C8 16 12 13 19 13 L19 18 Z" fill="#c8c8c8"/></svg><svg style="position:absolute;left:2208px;top:12px;" width="30" height="26" viewBox="0 0 30 26"><path d="M21 10 L14 3 L14 7 C7 7 2 12 3 24 C5 16 9 13 14 13 L14 17 Z" fill="#c8c8c8"/><path d="M18 3 L25 10 L18 17" stroke="#c8c8c8" stroke-width="2" fill="none"/></svg><svg style="position:absolute;left:2252px;top:12px;" width="30" height="24" viewBox="0 0 30 24"><circle cx="19" cy="6" r="5" fill="#eaf4f1"/><path d="M12 22 C12 13 14 12 19 12 C25 12 27 14 27 22 Z" fill="#eaf4f1"/><circle cx="10" cy="9" r="5" fill="#eaf4f1" stroke="#007a5d" stroke-width="1"/><path d="M1 23 C1 16 4 14 10 14 C16 14 19 16 19 23 Z" fill="#eaf4f1" stroke="#007a5d" stroke-width="1"/></svg><svg style="position:absolute;left:2299px;top:14px;" width="23" height="22" viewBox="0 0 23 22"><rect x="0.5" y="0.5" width="21" height="21" rx="3" fill="#eaf4f1"/><path d="M6 16 L15 7 M10 6 L16 6 L16 12" stroke="#007a5d" stroke-width="2.5" fill="none"/></svg><div style="position:absolute;left:2329px;top:18.5px;line-height:20px;font-size:16px;color:#eaf4f1;font-weight:normal;white-space:nowrap;">Get link</div><div style="position:absolute;left:2400px;top:0px;width:1px;height:54px;background:#2d9279;"></div><svg style="position:absolute;left:2415px;top:13px;" width="20" height="24" viewBox="0 0 20 24"><circle cx="9.5" cy="7" r="6.5" fill="#eaf4f1"/><path d="M1 23 C1 15 4 13 9.5 13 C15 13 18 15 18 23 Z" fill="#eaf4f1"/></svg><div style="position:absolute;left:2443px;top:18.5px;line-height:20px;font-size:16px;color:#eaf4f1;font-weight:normal;white-space:nowrap;">Lindsey</div><div style="position:absolute;left:2522px;top:16px;width:22px;height:4px;background:#eaf4f1;"></div><div style="position:absolute;left:2522px;top:23px;width:22px;height:4px;background:#eaf4f1;"></div><div style="position:absolute;left:2522px;top:30px;width:22px;height:4px;background:#eaf4f1;"></div>
</body></html>
